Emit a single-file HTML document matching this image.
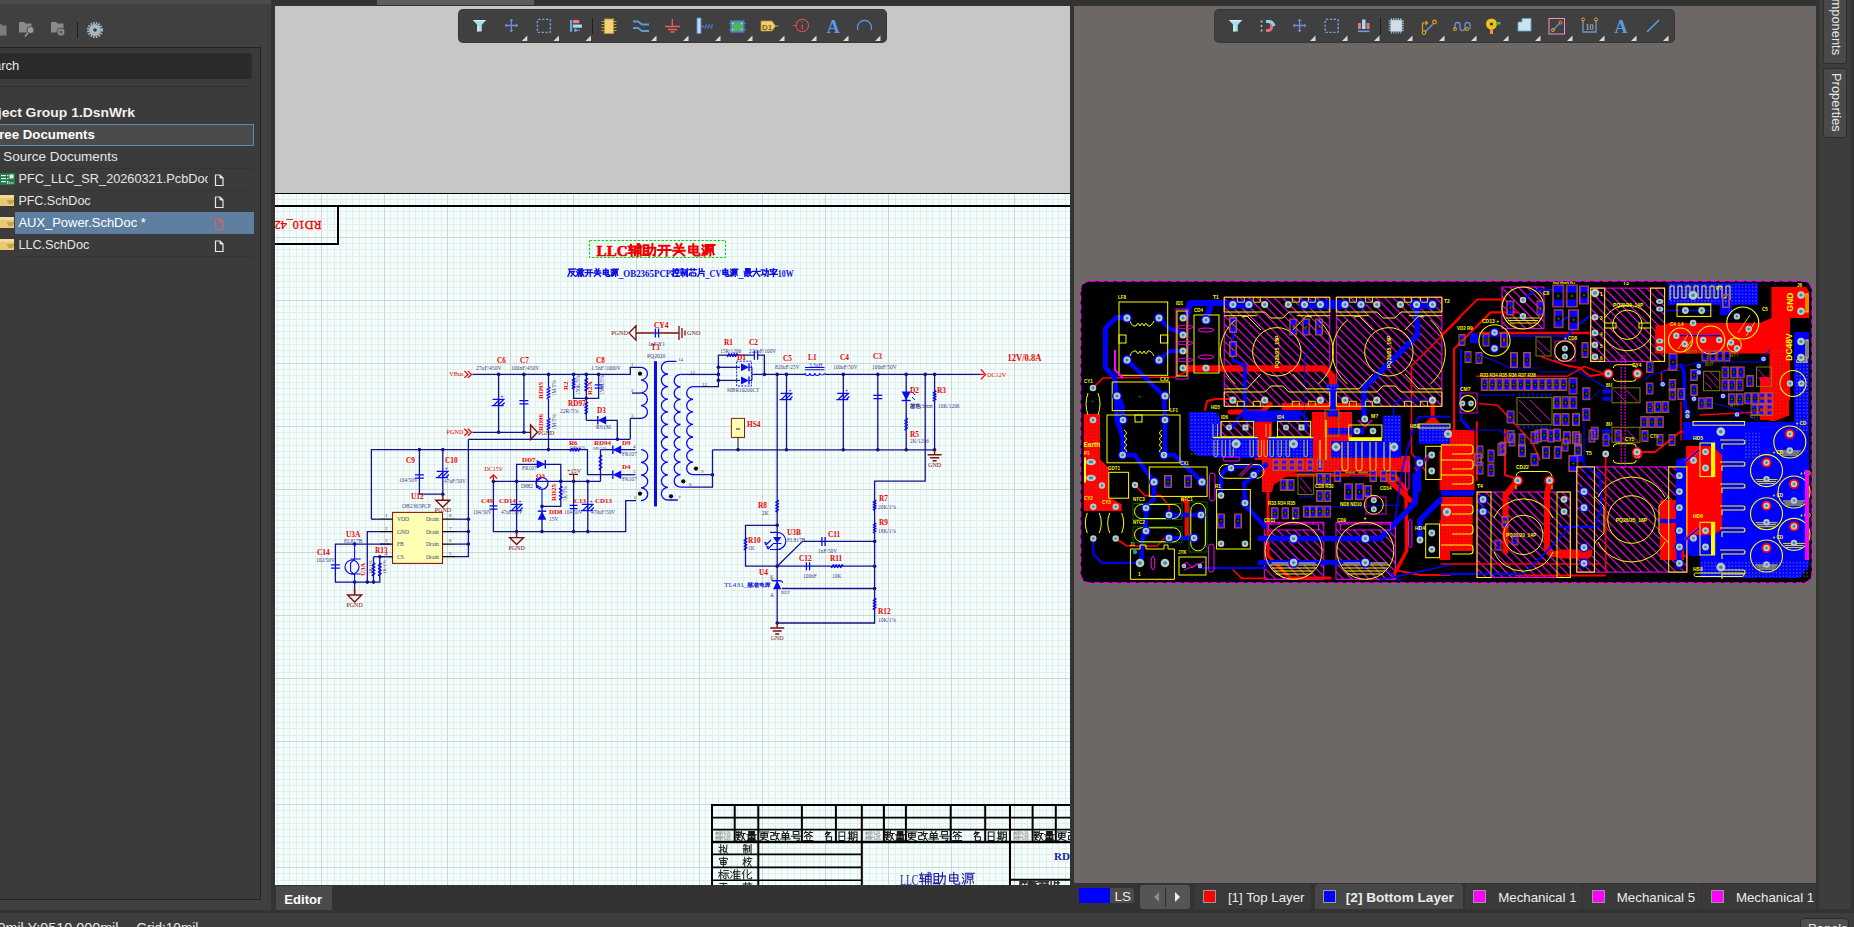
<!DOCTYPE html>
<html><head><meta charset="utf-8">
<style>
*{box-sizing:border-box}
html,body{margin:0;padding:0;width:1854px;height:927px;overflow:hidden;background:#333;font-family:"Liberation Sans",sans-serif;color:#e6e6e6}
.a{position:absolute}
.t{position:absolute;white-space:pre;line-height:1}
svg text{white-space:pre}
</style></head><body>
<div class="a" style="left:0;top:0;width:1854px;height:6px;background:#333"></div>
<div class="a" style="left:377px;top:0;width:157px;height:5px;background:#5d5d5d"></div>
<div class="a" style="left:275px;top:6px;width:795px;height:187px;background:#c7c7c7"></div>
<svg class="a" style="left:0;top:0" width="1854" height="927" viewBox="0 0 1854 927"><rect x="275" y="194" width="795" height="691" fill="#f0ffff"/><path d="M277 194h1v691h-1zM283 194h1v691h-1zM289 194h1v691h-1zM296 194h1v691h-1zM302 194h1v691h-1zM308 194h1v691h-1zM315 194h1v691h-1zM327 194h1v691h-1zM334 194h1v691h-1zM340 194h1v691h-1zM346 194h1v691h-1zM352 194h1v691h-1zM359 194h1v691h-1zM365 194h1v691h-1zM371 194h1v691h-1zM378 194h1v691h-1zM390 194h1v691h-1zM397 194h1v691h-1zM403 194h1v691h-1zM409 194h1v691h-1zM415 194h1v691h-1zM422 194h1v691h-1zM428 194h1v691h-1zM434 194h1v691h-1zM441 194h1v691h-1zM453 194h1v691h-1zM460 194h1v691h-1zM466 194h1v691h-1zM472 194h1v691h-1zM478 194h1v691h-1zM485 194h1v691h-1zM491 194h1v691h-1zM497 194h1v691h-1zM504 194h1v691h-1zM516 194h1v691h-1zM523 194h1v691h-1zM529 194h1v691h-1zM535 194h1v691h-1zM542 194h1v691h-1zM548 194h1v691h-1zM554 194h1v691h-1zM560 194h1v691h-1zM567 194h1v691h-1zM579 194h1v691h-1zM586 194h1v691h-1zM592 194h1v691h-1zM598 194h1v691h-1zM605 194h1v691h-1zM611 194h1v691h-1zM617 194h1v691h-1zM623 194h1v691h-1zM630 194h1v691h-1zM642 194h1v691h-1zM649 194h1v691h-1zM655 194h1v691h-1zM661 194h1v691h-1zM668 194h1v691h-1zM674 194h1v691h-1zM680 194h1v691h-1zM686 194h1v691h-1zM693 194h1v691h-1zM705 194h1v691h-1zM712 194h1v691h-1zM718 194h1v691h-1zM724 194h1v691h-1zM731 194h1v691h-1zM737 194h1v691h-1zM743 194h1v691h-1zM750 194h1v691h-1zM756 194h1v691h-1zM768 194h1v691h-1zM775 194h1v691h-1zM781 194h1v691h-1zM787 194h1v691h-1zM794 194h1v691h-1zM800 194h1v691h-1zM806 194h1v691h-1zM813 194h1v691h-1zM819 194h1v691h-1zM831 194h1v691h-1zM838 194h1v691h-1zM844 194h1v691h-1zM850 194h1v691h-1zM857 194h1v691h-1zM863 194h1v691h-1zM869 194h1v691h-1zM876 194h1v691h-1zM882 194h1v691h-1zM895 194h1v691h-1zM901 194h1v691h-1zM907 194h1v691h-1zM913 194h1v691h-1zM920 194h1v691h-1zM926 194h1v691h-1zM932 194h1v691h-1zM939 194h1v691h-1zM945 194h1v691h-1zM958 194h1v691h-1zM964 194h1v691h-1zM970 194h1v691h-1zM976 194h1v691h-1zM983 194h1v691h-1zM989 194h1v691h-1zM995 194h1v691h-1zM1002 194h1v691h-1zM1008 194h1v691h-1zM1021 194h1v691h-1zM1027 194h1v691h-1zM1033 194h1v691h-1zM1039 194h1v691h-1zM1046 194h1v691h-1zM1052 194h1v691h-1zM1058 194h1v691h-1zM1065 194h1v691h-1zM275 199h795v1h-795zM275 205h795v1h-795zM275 211h795v1h-795zM275 218h795v1h-795zM275 224h795v1h-795zM275 230h795v1h-795zM275 243h795v1h-795zM275 249h795v1h-795zM275 256h795v1h-795zM275 262h795v1h-795zM275 268h795v1h-795zM275 275h795v1h-795zM275 281h795v1h-795zM275 287h795v1h-795zM275 293h795v1h-795zM275 306h795v1h-795zM275 312h795v1h-795zM275 319h795v1h-795zM275 325h795v1h-795zM275 331h795v1h-795zM275 338h795v1h-795zM275 344h795v1h-795zM275 350h795v1h-795zM275 356h795v1h-795zM275 369h795v1h-795zM275 375h795v1h-795zM275 382h795v1h-795zM275 388h795v1h-795zM275 394h795v1h-795zM275 401h795v1h-795zM275 407h795v1h-795zM275 413h795v1h-795zM275 419h795v1h-795zM275 432h795v1h-795zM275 438h795v1h-795zM275 445h795v1h-795zM275 451h795v1h-795zM275 457h795v1h-795zM275 464h795v1h-795zM275 470h795v1h-795zM275 476h795v1h-795zM275 483h795v1h-795zM275 495h795v1h-795zM275 501h795v1h-795zM275 508h795v1h-795zM275 514h795v1h-795zM275 520h795v1h-795zM275 527h795v1h-795zM275 533h795v1h-795zM275 539h795v1h-795zM275 546h795v1h-795zM275 558h795v1h-795zM275 564h795v1h-795zM275 571h795v1h-795zM275 577h795v1h-795zM275 583h795v1h-795zM275 590h795v1h-795zM275 596h795v1h-795zM275 602h795v1h-795zM275 609h795v1h-795zM275 621h795v1h-795zM275 628h795v1h-795zM275 634h795v1h-795zM275 640h795v1h-795zM275 646h795v1h-795zM275 653h795v1h-795zM275 659h795v1h-795zM275 665h795v1h-795zM275 672h795v1h-795zM275 684h795v1h-795zM275 691h795v1h-795zM275 697h795v1h-795zM275 703h795v1h-795zM275 709h795v1h-795zM275 716h795v1h-795zM275 722h795v1h-795zM275 728h795v1h-795zM275 735h795v1h-795zM275 747h795v1h-795zM275 754h795v1h-795zM275 760h795v1h-795zM275 766h795v1h-795zM275 772h795v1h-795zM275 779h795v1h-795zM275 785h795v1h-795zM275 791h795v1h-795zM275 798h795v1h-795zM275 810h795v1h-795zM275 817h795v1h-795zM275 823h795v1h-795zM275 829h795v1h-795zM275 836h795v1h-795zM275 842h795v1h-795zM275 848h795v1h-795zM275 854h795v1h-795zM275 861h795v1h-795zM275 873h795v1h-795zM275 880h795v1h-795z" fill="#edeae4"/><path d="M321 194h1v691h-1zM384 194h1v691h-1zM447 194h1v691h-1zM510 194h1v691h-1zM573 194h1v691h-1zM636 194h1v691h-1zM699 194h1v691h-1zM762 194h1v691h-1zM825 194h1v691h-1zM888 194h1v691h-1zM951 194h1v691h-1zM1014 194h1v691h-1zM275 237h795v1h-795zM275 300h795v1h-795zM275 363h795v1h-795zM275 426h795v1h-795zM275 489h795v1h-795zM275 552h795v1h-795zM275 615h795v1h-795zM275 678h795v1h-795zM275 741h795v1h-795zM275 804h795v1h-795zM275 867h795v1h-795z" fill="#d6d2ce"/></svg><div class="a" style="left:275px;top:193px;width:795px;height:1.4px;background:#000"></div>
<div class="a" style="left:275px;top:205px;width:795px;height:2px;background:#000"></div>
<svg class="a" style="left:0;top:0" width="1854" height="927" viewBox="0 0 1854 927"><path d="M275 244 H338 V206" fill="none" stroke="#000" stroke-width="2"/><text x="298.2" y="223.5" font-family="Liberation Serif" font-size="12" fill="#f00000" stroke="#f00000" stroke-width="0.35" text-anchor="middle" transform="rotate(180 298.2 223.5)" dominant-baseline="middle">RD10_42</text><rect x="589.5" y="240.5" width="136" height="17" fill="none" stroke="#00e000" stroke-width="1" stroke-dasharray="2.5 1.5"/><text x="596.6" y="255.6" font-family="Liberation Serif" font-size="15.5" font-weight="bold" fill="#f00000" stroke="#f00000" stroke-width="0.7" textLength="31" lengthAdjust="spacingAndGlyphs">LLC</text><path d="M628.64 246.44 L633.30 246.44M630.97 244.61 L629.42 250.10 L633.30 250.10M631.62 247.66 L631.62 255.96M628.38 253.15 L633.56 252.54M634.20 246.44 L641.32 246.44M634.85 247.90 L640.67 247.90 L640.67 255.59M634.85 247.90 L634.85 255.59M634.85 250.71 L640.67 250.71M634.85 253.15 L640.67 253.15M637.70 244.00 L637.70 255.96M639.38 244.24 L640.02 245.22" fill="none" stroke="#f00000" stroke-width="2.0" stroke-linecap="square"/><path d="M643.73 245.22 L648.26 245.22 L648.26 254.37 L643.73 254.37 L643.73 245.22M643.73 248.27 L648.26 248.27M643.73 251.32 L648.26 251.32M643.08 254.98 L648.90 254.74M649.55 247.66 L655.37 247.66 L654.72 255.59 L653.43 254.98M652.40 244.00 L652.14 250.10 L649.29 255.59" fill="none" stroke="#f00000" stroke-width="2.0" stroke-linecap="square"/><path d="M659.08 245.83 L669.42 245.83M657.78 250.10 L670.72 250.10M662.31 245.83 L661.92 252.54 L659.08 255.59M666.58 245.83 L666.58 255.83" fill="none" stroke="#f00000" stroke-width="2.0" stroke-linecap="square"/><path d="M676.36 244.00 L677.66 245.83M681.54 244.00 L680.24 245.83M674.42 247.66 L683.48 247.66M673.13 250.71 L684.77 250.71M678.95 247.66 L678.95 250.71 L673.78 255.59M678.95 250.71 L684.12 255.59" fill="none" stroke="#f00000" stroke-width="2.0" stroke-linecap="square"/><path d="M689.12 246.44 L697.53 246.44 L697.53 252.54 L689.12 252.54 L689.12 246.44M689.12 249.49 L697.53 249.49M693.39 244.00 L693.39 254.37 L694.94 255.59 L699.47 255.59 L699.47 253.76" fill="none" stroke="#f00000" stroke-width="2.0" stroke-linecap="square"/><path d="M702.53 245.22 L703.43 246.44M702.27 248.88 L703.43 250.10M702.27 254.98 L703.82 251.93M705.50 244.98 L714.56 244.98M705.76 244.98 L705.76 251.32 L704.47 255.59M707.70 246.44 L712.88 246.44 L712.88 250.71 L707.70 250.71 L707.70 246.44M707.70 248.64 L712.88 248.64M710.29 250.71 L710.29 255.59M707.70 252.54 L706.80 254.37M712.88 252.54 L713.78 254.37" fill="none" stroke="#f00000" stroke-width="2.0" stroke-linecap="square"/><path d="M568.77 269.24 L575.16 269.00M569.52 269.24 L569.52 272.60 L568.01 276.36M569.89 271.40 L574.41 271.40 L571.02 276.36M571.02 272.20 L575.39 276.36" fill="none" stroke="#1010e8" stroke-width="1.35" stroke-linecap="square"/><path d="M576.94 269.40 L577.47 270.20M576.79 271.80 L577.47 272.60M576.79 275.80 L577.69 273.80M578.82 269.00 L580.70 269.00 L580.70 271.40 L578.82 271.40 L578.82 269.00M578.82 270.20 L580.70 270.20M578.44 272.60 L581.08 272.60M579.20 272.60 L578.44 276.36M579.20 273.80 L580.70 273.80 L580.33 276.36M582.21 268.60 L581.45 271.00M581.68 270.20 L583.94 270.20M583.33 270.20 L581.45 276.36M581.83 272.60 L583.94 276.36" fill="none" stroke="#1010e8" stroke-width="1.35" stroke-linecap="square"/><path d="M585.87 269.80 L591.88 269.80M585.11 272.60 L592.64 272.60M587.75 269.80 L587.52 274.20 L585.87 276.20M590.23 269.80 L590.23 276.36" fill="none" stroke="#1010e8" stroke-width="1.35" stroke-linecap="square"/><path d="M595.92 268.60 L596.67 269.80M598.93 268.60 L598.18 269.80M594.79 271.00 L600.06 271.00M594.04 273.00 L600.81 273.00M597.42 271.00 L597.42 273.00 L594.42 276.20M597.42 273.00 L600.43 276.20" fill="none" stroke="#1010e8" stroke-width="1.35" stroke-linecap="square"/><path d="M603.34 270.20 L608.23 270.20 L608.23 274.20 L603.34 274.20 L603.34 270.20M603.34 272.20 L608.23 272.20M605.82 268.60 L605.82 275.40 L606.73 276.20 L609.36 276.20 L609.36 275.00" fill="none" stroke="#1010e8" stroke-width="1.35" stroke-linecap="square"/><path d="M611.14 269.40 L611.67 270.20M610.99 271.80 L611.67 272.60M610.99 275.80 L611.89 273.80M612.87 269.24 L618.14 269.24M613.02 269.24 L613.02 273.40 L612.27 276.20M614.15 270.20 L617.16 270.20 L617.16 273.00 L614.15 273.00 L614.15 270.20M614.15 271.64 L617.16 271.64M615.65 273.00 L615.65 276.20M614.15 274.20 L613.62 275.40M617.16 274.20 L617.69 275.40" fill="none" stroke="#1010e8" stroke-width="1.35" stroke-linecap="square"/><text x="618.80" y="276.60" font-family="Liberation Serif" font-size="9.6" font-weight="bold" fill="#1010e8" textLength="52.50" lengthAdjust="spacingAndGlyphs">_OB2365PCP</text><path d="M671.81 271.00 L674.45 271.00M673.32 268.60 L673.32 276.20 L672.57 275.80M671.81 274.20 L674.67 273.00M676.70 268.60 L676.70 269.24M674.97 270.36 L674.97 269.40 L678.96 269.40 L678.96 270.36M676.18 270.60 L675.42 271.96M677.68 270.60 L678.58 271.96M675.57 273.00 L678.58 273.00M677.08 273.00 L677.08 275.96M674.97 276.20 L679.34 276.20" fill="none" stroke="#1010e8" stroke-width="1.35" stroke-linecap="square"/><path d="M681.49 268.60 L680.96 269.80M680.74 269.80 L684.88 269.80M680.36 271.80 L685.25 271.80M682.77 268.60 L682.77 276.60M681.12 273.00 L681.12 275.40M681.12 273.00 L684.50 273.00 L684.50 275.40M686.01 269.80 L686.01 274.20M687.29 268.60 L687.29 276.36 L686.38 275.96" fill="none" stroke="#1010e8" stroke-width="1.35" stroke-linecap="square"/><path d="M688.91 269.56 L696.44 269.56M691.17 268.60 L691.17 270.60M694.18 268.60 L694.18 270.60M689.67 273.40 L689.29 275.40M691.17 272.60 L691.17 275.80 L695.68 275.80 L695.68 274.60M692.67 272.20 L693.43 273.40M694.93 272.60 L696.06 274.20" fill="none" stroke="#1010e8" stroke-width="1.35" stroke-linecap="square"/><path d="M699.34 268.60 L699.34 273.40 L697.84 276.36M699.34 271.40 L704.23 271.40M701.98 268.60 L701.98 271.40M699.34 273.40 L703.86 273.40 L703.86 276.36" fill="none" stroke="#1010e8" stroke-width="1.35" stroke-linecap="square"/><text x="705.50" y="276.60" font-family="Liberation Serif" font-size="9.6" font-weight="bold" fill="#1010e8" textLength="15.75" lengthAdjust="spacingAndGlyphs">_CV</text><path d="M722.89 270.20 L727.78 270.20 L727.78 274.20 L722.89 274.20 L722.89 270.20M722.89 272.20 L727.78 272.20M725.37 268.60 L725.37 275.40 L726.28 276.20 L728.91 276.20 L728.91 275.00" fill="none" stroke="#1010e8" stroke-width="1.35" stroke-linecap="square"/><path d="M730.69 269.40 L731.22 270.20M730.54 271.80 L731.22 272.60M730.54 275.80 L731.44 273.80M732.42 269.24 L737.69 269.24M732.57 269.24 L732.57 273.40 L731.82 276.20M733.70 270.20 L736.71 270.20 L736.71 273.00 L733.70 273.00 L733.70 270.20M733.70 271.64 L736.71 271.64M735.20 273.00 L735.20 276.20M733.70 274.20 L733.17 275.40M736.71 274.20 L737.24 275.40" fill="none" stroke="#1010e8" stroke-width="1.35" stroke-linecap="square"/><text x="738.35" y="276.60" font-family="Liberation Serif" font-size="9.6" font-weight="bold" fill="#1010e8" textLength="5.25" lengthAdjust="spacingAndGlyphs">_</text><path d="M745.62 268.60 L750.13 268.60 L750.13 271.00 L745.62 271.00 L745.62 268.60M745.62 269.80 L750.13 269.80M744.11 271.80 L751.64 271.80M744.87 272.20 L744.87 276.20M744.87 273.40 L747.12 273.40M744.87 275.00 L747.12 275.00M747.12 272.20 L747.12 276.36M748.25 272.60 L750.88 272.60 L748.25 276.36M748.63 273.40 L751.49 276.36" fill="none" stroke="#1010e8" stroke-width="1.35" stroke-linecap="square"/><path d="M752.66 271.40 L760.19 271.40M756.42 268.60 L756.42 271.80 L753.04 276.36M756.42 271.80 L759.81 276.36" fill="none" stroke="#1010e8" stroke-width="1.35" stroke-linecap="square"/><path d="M761.21 269.80 L764.22 269.80M762.72 269.80 L762.72 274.60M761.21 275.00 L764.60 274.20M764.97 271.00 L768.36 271.00 L767.98 276.20 L767.23 275.80M766.63 268.60 L766.48 272.60 L764.82 276.20" fill="none" stroke="#1010e8" stroke-width="1.35" stroke-linecap="square"/><path d="M773.52 268.60 L773.52 269.40M770.14 269.56 L776.91 269.56M773.52 270.20 L772.40 271.80 L774.28 272.20 L772.77 273.40 L775.03 273.40M770.52 271.00 L771.27 271.80M776.53 271.00 L775.78 271.80M769.76 274.36 L777.29 274.36M773.52 273.56 L773.52 276.60" fill="none" stroke="#1010e8" stroke-width="1.35" stroke-linecap="square"/><text x="777.80" y="276.60" font-family="Liberation Serif" font-size="9.6" font-weight="bold" fill="#1010e8" textLength="15.75" lengthAdjust="spacingAndGlyphs">10W</text><path d="M472.4 374.4 L630.3 374.4 L630.3 367.3 L641 367.3" fill="none" stroke="#12128a" stroke-width="1.3"/><path d="M464.4 370.9 l3.5 3.5 l-3.5 3.5 M467.9 370.9 l3.5 3.5 l-3.5 3.5" fill="none" stroke="#f00000" stroke-width="1.3"/><text x="463.4" y="376.4" font-family="Liberation Serif" font-size="6.2" fill="#f00000" text-anchor="end">VBus</text><circle cx="498.6" cy="374.4" r="1.8" fill="#12128a"/><circle cx="523.9" cy="374.4" r="1.8" fill="#12128a"/><circle cx="548.5" cy="374.4" r="1.8" fill="#12128a"/><circle cx="573.6" cy="374.4" r="1.8" fill="#12128a"/><circle cx="586.3" cy="374.4" r="1.8" fill="#12128a"/><circle cx="598.6" cy="374.4" r="1.8" fill="#12128a"/><path d="M472.4 432.3 L530.6 432.3" fill="none" stroke="#12128a" stroke-width="1.3"/><path d="M464.4 428.8 l3.5 3.5 l-3.5 3.5 M467.9 428.8 l3.5 3.5 l-3.5 3.5" fill="none" stroke="#f00000" stroke-width="1.3"/><text x="463.4" y="434.3" font-family="Liberation Serif" font-size="6.2" fill="#f00000" text-anchor="end">PGND</text><circle cx="498.6" cy="432.3" r="1.8" fill="#12128a"/><circle cx="523.9" cy="432.3" r="1.8" fill="#12128a"/><path d="M530.6 432.3 M530.6 425 L537.5 432.3 L530.6 439.5 Z" fill="none" stroke="#7a1010" stroke-width="1.4"/><text x="538" y="434.5" font-family="Liberation Serif" font-size="6" fill="#7a1010">PGND</text><path d="M498.6 374.4 L498.6 432.3" fill="none" stroke="#12128a" stroke-width="1.3"/><path d="M492.6 399.3 h12 M491.6 405.7 h12 M493.6 405.5 l6 -6 M497.6 405.5 l6 -6 M501.6 405.5 l3 -3" stroke="#0a0af0" stroke-width="1.2" fill="none"/><text x="500.6" y="397.5" font-family="Liberation Sans" font-size="5" fill="#0a0af0">+</text><path d="M523.9 374.4 L523.9 432.3" fill="none" stroke="#12128a" stroke-width="1.3"/><path d="M519.4 400.59999999999997 h9 M519.4 403.8 h9" stroke="#0a0af0" stroke-width="1.3"/><text x="497" y="362.5" font-family="Liberation Serif" font-size="7.2" font-weight="bold" fill="#f00000" text-anchor="start">C6</text><text x="476" y="370" font-family="Liberation Serif" font-size="5.6" font-weight="normal" fill="#40408a" text-anchor="start">27uF/450V</text><text x="520" y="362.5" font-family="Liberation Serif" font-size="7.2" font-weight="bold" fill="#f00000" text-anchor="start">C7</text><text x="511" y="370" font-family="Liberation Serif" font-size="5.6" font-weight="normal" fill="#40408a" text-anchor="start">100nF/450V</text><path d="M548.5 374.4 L548.5 387" fill="none" stroke="#12128a" stroke-width="1.3"/><path d="M548.5 387 q3 0.75 0 1.50 q-3 0.75 0 1.50 q3 0.75 0 1.50 q-3 0.75 0 1.50 q3 0.75 0 1.50 q-3 0.75 0 1.50 q3 0.75 0 1.50 q-3 0.75 0 1.50" fill="none" stroke="#0a0af0" stroke-width="1.2"/><path d="M548.5 399 L548.5 418.4" fill="none" stroke="#12128a" stroke-width="1.3"/><path d="M548.5 418.4 q3 0.73 0 1.45 q-3 0.73 0 1.45 q3 0.73 0 1.45 q-3 0.73 0 1.45 q3 0.73 0 1.45 q-3 0.73 0 1.45 q3 0.73 0 1.45 q-3 0.73 0 1.45" fill="none" stroke="#0a0af0" stroke-width="1.2"/><path d="M548.5 430 L548.5 449.7" fill="none" stroke="#12128a" stroke-width="1.3"/><text x="543" y="399" font-family="Liberation Serif" font-size="7" font-weight="bold" fill="#f00000" text-anchor="start" transform="rotate(-90 543 399)">RD95</text><text x="556" y="396" font-family="Liberation Serif" font-size="5.2" font-weight="normal" fill="#40408a" text-anchor="start" transform="rotate(-90 556 396)">1M/5%</text><text x="543" y="431" font-family="Liberation Serif" font-size="7" font-weight="bold" fill="#f00000" text-anchor="start" transform="rotate(-90 543 431)">RD96</text><text x="556" y="430" font-family="Liberation Serif" font-size="5.2" font-weight="normal" fill="#40408a" text-anchor="start" transform="rotate(-90 556 430)">1M/5%</text><path d="M573.6 374.4 L573.6 398.3 L598.6 398.3 L598.6 374.4" fill="none" stroke="#12128a" stroke-width="1.3"/><path d="M573.6 378 q3 0.69 0 1.38 q-3 0.69 0 1.38 q3 0.69 0 1.38 q-3 0.69 0 1.38 q3 0.69 0 1.38 q-3 0.69 0 1.38 q3 0.69 0 1.38 q-3 0.69 0 1.38" fill="none" stroke="#0a0af0" stroke-width="1.2"/><path d="M586.3 374.4 L586.3 420.3" fill="none" stroke="#12128a" stroke-width="1.3"/><path d="M586.3 378 q3 0.81 0 1.62 q-3 0.81 0 1.62 q3 0.81 0 1.62 q-3 0.81 0 1.62 q3 0.81 0 1.62 q-3 0.81 0 1.62 q3 0.81 0 1.62 q-3 0.81 0 1.62" fill="none" stroke="#0a0af0" stroke-width="1.2"/><path d="M586.3 402 q3 0.75 0 1.50 q-3 0.75 0 1.50 q3 0.75 0 1.50 q-3 0.75 0 1.50 q3 0.75 0 1.50 q-3 0.75 0 1.50 q3 0.75 0 1.50 q-3 0.75 0 1.50" fill="none" stroke="#0a0af0" stroke-width="1.2"/><path d="M594.6 384.9 h8 M594.6 388.1 h8" stroke="#0a0af0" stroke-width="1.3"/><circle cx="586.3" cy="398.3" r="1.8" fill="#12128a"/><text x="568" y="390" font-family="Liberation Serif" font-size="7" font-weight="bold" fill="#f00000" text-anchor="start" transform="rotate(-90 568 390)">R2</text><text x="580" y="395" font-family="Liberation Serif" font-size="5.2" font-weight="normal" fill="#40408a" text-anchor="start" transform="rotate(-90 580 395)">150K/5%</text><text x="592" y="395" font-family="Liberation Serif" font-size="7" font-weight="bold" fill="#f00000" text-anchor="start" transform="rotate(-90 592 395)">R2A</text><text x="604" y="395" font-family="Liberation Serif" font-size="5.2" font-weight="normal" fill="#40408a" text-anchor="start" transform="rotate(-90 604 395)">150K/5%</text><text x="596" y="363" font-family="Liberation Serif" font-size="7.2" font-weight="bold" fill="#f00000" text-anchor="start">C8</text><text x="591" y="370" font-family="Liberation Serif" font-size="5.6" font-weight="normal" fill="#40408a" text-anchor="start">1.5nF/1000V</text><text x="568" y="406" font-family="Liberation Serif" font-size="7.2" font-weight="bold" fill="#f00000" text-anchor="start">RD97</text><text x="560" y="412.5" font-family="Liberation Serif" font-size="5.6" font-weight="normal" fill="#40408a" text-anchor="start">22R/5%</text><path d="M586.3 420.3 L617.3 420.3 L617.3 439.1" fill="none" stroke="#12128a" stroke-width="1.3"/><path d="M606.2 416.1 L597.8 420.3 L606.2 424.5 Z" fill="#0a0af0"/><path d="M597.8 416.1 v8.4" stroke="#0a0af0" stroke-width="1.4"/><text x="597" y="413" font-family="Liberation Serif" font-size="7.2" font-weight="bold" fill="#f00000" text-anchor="start">D3</text><text x="596" y="428.5" font-family="Liberation Serif" font-size="5.6" font-weight="normal" fill="#40408a" text-anchor="start">RS1M</text><path d="M630.3 418.4 L641 418.4" fill="none" stroke="#12128a" stroke-width="1.3"/><path d="M630.3 418.4 L630.3 439.1" fill="none" stroke="#12128a" stroke-width="1.3"/><path d="M632 393.1 L641 393.1" fill="none" stroke="#12128a" stroke-width="1.3"/><circle cx="640" cy="373.7" r="2.1" fill="#000"/><path d="M468.4 439.3 L630.3 439.3" fill="none" stroke="#12128a" stroke-width="1.3"/><circle cx="617.5" cy="439.3" r="1.8" fill="#12128a"/><path d="M371.4 519.2 L371.4 449.6 L587.5 449.6 L587.5 474.7 L613 474.7" fill="none" stroke="#12128a" stroke-width="1.3"/><circle cx="419.4" cy="449.6" r="1.8" fill="#12128a"/><circle cx="442.8" cy="449.6" r="1.8" fill="#12128a"/><circle cx="548.4" cy="449.6" r="1.8" fill="#12128a"/><path d="M570 449.6 q0.66 3 1.31 0 q0.66 -3 1.31 0 q0.66 3 1.31 0 q0.66 -3 1.31 0 q0.66 3 1.31 0 q0.66 -3 1.31 0 q0.66 3 1.31 0 q0.66 -3 1.31 0" fill="none" stroke="#0a0af0" stroke-width="1.2"/><text x="569" y="444.5" font-family="Liberation Serif" font-size="7" font-weight="bold" fill="#f00000" text-anchor="start">R6</text><text x="569" y="449" font-family="Liberation Serif" font-size="5" font-weight="normal" fill="#40408a" text-anchor="start">15R/5%</text><path d="M600.5 449.7 L635.4 449.7" fill="none" stroke="#12128a" stroke-width="1.3"/><path d="M600.5 449.7 L600.5 481.4" fill="none" stroke="#12128a" stroke-width="1.3"/><path d="M600.5 455 q3 0.94 0 1.88 q-3 0.94 0 1.88 q3 0.94 0 1.88 q-3 0.94 0 1.88 q3 0.94 0 1.88 q-3 0.94 0 1.88 q3 0.94 0 1.88 q-3 0.94 0 1.88" fill="none" stroke="#0a0af0" stroke-width="1.2"/><path d="M621.2 445.5 L612.8 449.7 L621.2 453.9 Z" fill="#0a0af0"/><path d="M612.8 445.5 v8.4" stroke="#0a0af0" stroke-width="1.4"/><path d="M621.2 470.5 L612.8 474.7 L621.2 478.9 Z" fill="#0a0af0"/><path d="M612.8 470.5 v8.4" stroke="#0a0af0" stroke-width="1.4"/><path d="M621 474.7 L635.4 474.7" fill="none" stroke="#12128a" stroke-width="1.3"/><text x="594" y="444.5" font-family="Liberation Serif" font-size="7" font-weight="bold" fill="#f00000" text-anchor="start">RD94</text><text x="593" y="450" font-family="Liberation Serif" font-size="5" font-weight="normal" fill="#40408a" text-anchor="start">0R/5%</text><text x="622" y="444.5" font-family="Liberation Serif" font-size="7" font-weight="bold" fill="#f00000" text-anchor="start">D9</text><text x="622" y="456" font-family="Liberation Serif" font-size="5.4" font-weight="normal" fill="#40408a" text-anchor="start">FR107</text><text x="622" y="469" font-family="Liberation Serif" font-size="7" font-weight="bold" fill="#f00000" text-anchor="start">D4</text><text x="622" y="481" font-family="Liberation Serif" font-size="5.4" font-weight="normal" fill="#40408a" text-anchor="start">FR107</text><path d="M493.4 481.4 L600.5 481.4" fill="none" stroke="#12128a" stroke-width="1.3"/><circle cx="493.4" cy="481.4" r="1.8" fill="#12128a"/><circle cx="516.6" cy="481.4" r="1.8" fill="#12128a"/><circle cx="560.8" cy="481.4" r="1.8" fill="#12128a"/><circle cx="573.6" cy="481.4" r="1.8" fill="#12128a"/><circle cx="587.8" cy="481.4" r="1.8" fill="#12128a"/><path d="M493.4 481.4 v-6 M489.8 478.5 l3.6 -3.6 l3.6 3.6" fill="none" stroke="#f00000" stroke-width="1.2"/><text x="484.5" y="471" font-family="Liberation Serif" font-size="6" font-weight="normal" fill="#f00000" text-anchor="start">DC15V</text><path d="M573.6 481.4 v-7 M569 474.4 h9" fill="none" stroke="#7a1010" stroke-width="1.3"/><text x="567" y="472.5" font-family="Liberation Serif" font-size="6.2" font-weight="normal" fill="#7a1010" text-anchor="start">+15V</text><path d="M516.6 481.4 L516.6 464.3 L560.8 464.3 L560.8 506.4 L542 506.4" fill="none" stroke="#12128a" stroke-width="1.3"/><path d="M536.7 460.0 L545.3 464.3 L536.7 468.6 Z" fill="#0a0af0"/><path d="M545.3 460.0 v8.6" stroke="#0a0af0" stroke-width="1.4"/><text x="522" y="462" font-family="Liberation Serif" font-size="7" font-weight="bold" fill="#f00000" text-anchor="start">DD7</text><text x="522" y="470" font-family="Liberation Serif" font-size="5.4" font-weight="normal" fill="#40408a" text-anchor="start">FR107</text><circle cx="542" cy="483.3" r="6" fill="none" stroke="#0a0af0" stroke-width="1.2"/><path d="M536.5 478 v10 M536.5 481 l5 -3 M536.5 485 l5 3 M542 489 v17" fill="none" stroke="#0a0af0" stroke-width="1.1"/><text x="536" y="477.5" font-family="Liberation Serif" font-size="7" font-weight="bold" fill="#f00000" text-anchor="start">Q3</text><text x="521" y="488" font-family="Liberation Serif" font-size="5.4" font-weight="normal" fill="#40408a" text-anchor="start">D882</text><path d="M560.8 486 q3 0.88 0 1.75 q-3 0.88 0 1.75 q3 0.88 0 1.75 q-3 0.88 0 1.75 q3 0.88 0 1.75 q-3 0.88 0 1.75 q3 0.88 0 1.75 q-3 0.88 0 1.75" fill="none" stroke="#0a0af0" stroke-width="1.2"/><text x="556" y="501" font-family="Liberation Serif" font-size="7" font-weight="bold" fill="#f00000" text-anchor="start" transform="rotate(-90 556 501)">RD25</text><text x="567" y="501" font-family="Liberation Serif" font-size="5.2" font-weight="normal" fill="#40408a" text-anchor="start" transform="rotate(-90 567 501)">1K/5%</text><path d="M542 506.4 L542 531.6" fill="none" stroke="#12128a" stroke-width="1.3"/><path d="M537.7 519.8 L542 511.2 L546.3 519.8 Z" fill="#0a0af0"/><path d="M537.7 511.2 h8.6" stroke="#0a0af0" stroke-width="1.4"/><circle cx="542" cy="506.4" r="1.8" fill="#12128a"/><text x="549" y="514" font-family="Liberation Serif" font-size="7" font-weight="bold" fill="#f00000" text-anchor="start">DD8</text><text x="549" y="521" font-family="Liberation Serif" font-size="5.4" font-weight="normal" fill="#40408a" text-anchor="start">15V</text><path d="M493.4 481.4 L493.4 531.6 L625.7 531.6 L625.7 500.6 L636 500.6" fill="none" stroke="#12128a" stroke-width="1.3"/><path d="M516.6 481.4 L516.6 531.6" fill="none" stroke="#12128a" stroke-width="1.3"/><path d="M573.6 481.4 L573.6 531.6" fill="none" stroke="#12128a" stroke-width="1.3"/><path d="M587.8 481.4 L587.8 531.6" fill="none" stroke="#12128a" stroke-width="1.3"/><circle cx="516.6" cy="531.6" r="1.8" fill="#12128a"/><circle cx="542" cy="531.6" r="1.8" fill="#12128a"/><circle cx="573.6" cy="531.6" r="1.8" fill="#12128a"/><circle cx="587.8" cy="531.6" r="1.8" fill="#12128a"/><path d="M489.4 505.9 h8 M489.4 509.1 h8" stroke="#0a0af0" stroke-width="1.3"/><path d="M510.6 504.3 h12 M509.6 510.7 h12 M511.6 510.5 l6 -6 M515.6 510.5 l6 -6 M519.6 510.5 l3 -3" stroke="#0a0af0" stroke-width="1.2" fill="none"/><text x="518.6" y="502.5" font-family="Liberation Sans" font-size="5" fill="#0a0af0">+</text><path d="M569.6 505.4 h8 M569.6 508.6 h8" stroke="#0a0af0" stroke-width="1.3"/><path d="M581.8 504.3 h12 M580.8 510.7 h12 M582.8 510.5 l6 -6 M586.8 510.5 l6 -6 M590.8 510.5 l3 -3" stroke="#0a0af0" stroke-width="1.2" fill="none"/><text x="589.8" y="502.5" font-family="Liberation Sans" font-size="5" fill="#0a0af0">+</text><text x="481" y="503" font-family="Liberation Serif" font-size="7" font-weight="bold" fill="#f00000" text-anchor="start">C49</text><text x="473" y="514" font-family="Liberation Serif" font-size="5.3" font-weight="normal" fill="#40408a" text-anchor="start">104/50V</text><text x="499" y="503" font-family="Liberation Serif" font-size="7" font-weight="bold" fill="#f00000" text-anchor="start">CD14</text><text x="501" y="514" font-family="Liberation Serif" font-size="5.3" font-weight="normal" fill="#40408a" text-anchor="start">47uF/50V</text><text x="574" y="503" font-family="Liberation Serif" font-size="7" font-weight="bold" fill="#f00000" text-anchor="start">C13</text><text x="564" y="514" font-family="Liberation Serif" font-size="5.3" font-weight="normal" fill="#40408a" text-anchor="start">104/50V</text><text x="595" y="503" font-family="Liberation Serif" font-size="7" font-weight="bold" fill="#f00000" text-anchor="start">CD13</text><text x="591" y="514" font-family="Liberation Serif" font-size="5.3" font-weight="normal" fill="#40408a" text-anchor="start">470uF/50V</text><path d="M516.6 531.6 v6 M509.6 537.6 h14 L516.6 544.6 Z" fill="none" stroke="#7a1010" stroke-width="1.4"/><text x="516.6" y="549.6" font-family="Liberation Serif" font-size="6" fill="#7a1010" text-anchor="middle">PGND</text><path d="M468.4 439.3 L468.4 556.7 L455 556.7" fill="none" stroke="#12128a" stroke-width="1.3"/><path d="M455 519.2 L468.4 519.2" fill="none" stroke="#12128a" stroke-width="1.3"/><circle cx="468.4" cy="519.2" r="1.8" fill="#12128a"/><path d="M455 531.6 L468.4 531.6" fill="none" stroke="#12128a" stroke-width="1.3"/><circle cx="468.4" cy="531.6" r="1.8" fill="#12128a"/><path d="M455 544.1 L468.4 544.1" fill="none" stroke="#12128a" stroke-width="1.3"/><circle cx="468.4" cy="544.1" r="1.8" fill="#12128a"/><path d="M419.4 449.6 L419.4 494.2 L442.8 494.2" fill="none" stroke="#12128a" stroke-width="1.3"/><path d="M442.8 449.6 L442.8 494.2" fill="none" stroke="#12128a" stroke-width="1.3"/><path d="M414.9 474.9 h9 M414.9 478.1 h9" stroke="#0a0af0" stroke-width="1.3"/><path d="M436.8 471.3 h12 M435.8 477.7 h12 M437.8 477.5 l6 -6 M441.8 477.5 l6 -6 M445.8 477.5 l3 -3" stroke="#0a0af0" stroke-width="1.2" fill="none"/><text x="444.8" y="469.5" font-family="Liberation Sans" font-size="5" fill="#0a0af0">+</text><circle cx="442.8" cy="494.2" r="1.8" fill="#12128a"/><path d="M442.8 494.2 v6 M435.8 500.2 h14 L442.8 507.2 Z" fill="none" stroke="#7a1010" stroke-width="1.4"/><text x="443" y="511.5" font-family="Liberation Serif" font-size="6" fill="#7a1010" text-anchor="middle">PGND</text><text x="406" y="463" font-family="Liberation Serif" font-size="7.4" font-weight="bold" fill="#f00000" text-anchor="start">C9</text><text x="399" y="482" font-family="Liberation Serif" font-size="5.4" font-weight="normal" fill="#40408a" text-anchor="start">104/50V</text><text x="445" y="463" font-family="Liberation Serif" font-size="7.4" font-weight="bold" fill="#f00000" text-anchor="start">C10</text><text x="444" y="483" font-family="Liberation Serif" font-size="5.4" font-weight="normal" fill="#40408a" text-anchor="start">47uF/50V</text><rect x="392.5" y="512.4" width="50" height="51" fill="#ffffb4" stroke="#8a1a1a" stroke-width="1.1"/><path d="M380 519.2 h12.5 M442.5 519.2 h12.5" stroke="#000" stroke-width="1.2"/><path d="M380 531.6 h12.5 M442.5 531.6 h12.5" stroke="#000" stroke-width="1.2"/><path d="M380 544.1 h12.5 M442.5 544.1 h12.5" stroke="#000" stroke-width="1.2"/><path d="M380 556.7 h12.5 M442.5 556.7 h12.5" stroke="#000" stroke-width="1.2"/><text x="397" y="521.2" font-family="Liberation Serif" font-size="5.6" fill="#3a3a7a">VDD</text><text x="426" y="521.2" font-family="Liberation Serif" font-size="5.6" fill="#3a3a7a">Drain</text><text x="385" y="517.2" font-family="Liberation Serif" font-size="5" fill="#333">1</text><text x="449" y="517.2" font-family="Liberation Serif" font-size="5" fill="#333">8</text><text x="397" y="533.6" font-family="Liberation Serif" font-size="5.6" fill="#3a3a7a">GND</text><text x="426" y="533.6" font-family="Liberation Serif" font-size="5.6" fill="#3a3a7a">Drain</text><text x="385" y="529.6" font-family="Liberation Serif" font-size="5" fill="#333">2</text><text x="449" y="529.6" font-family="Liberation Serif" font-size="5" fill="#333">7</text><text x="397" y="546.1" font-family="Liberation Serif" font-size="5.6" fill="#3a3a7a">FB</text><text x="426" y="546.1" font-family="Liberation Serif" font-size="5.6" fill="#3a3a7a">Drain</text><text x="385" y="542.1" font-family="Liberation Serif" font-size="5" fill="#333">3</text><text x="449" y="542.1" font-family="Liberation Serif" font-size="5" fill="#333">6</text><text x="397" y="558.7" font-family="Liberation Serif" font-size="5.6" fill="#3a3a7a">CS</text><text x="426" y="558.7" font-family="Liberation Serif" font-size="5.6" fill="#3a3a7a">Drain</text><text x="385" y="554.7" font-family="Liberation Serif" font-size="5" fill="#333">4</text><text x="449" y="554.7" font-family="Liberation Serif" font-size="5" fill="#333">5</text><text x="411" y="499" font-family="Liberation Serif" font-size="7.4" font-weight="bold" fill="#f00000" text-anchor="start">U12</text><text x="402" y="508" font-family="Liberation Serif" font-size="5.6" font-weight="normal" fill="#40408a" text-anchor="start">OB2365PCP</text><path d="M371.4 519.2 L380 519.2" fill="none" stroke="#12128a" stroke-width="1.3"/><path d="M380 531.6 L367.3 531.6 L367.3 582.1" fill="none" stroke="#12128a" stroke-width="1.3"/><path d="M390 544.1 L335.4 544.1 L335.4 582.1 L379.8 582.1 L379.8 556.7 L392 556.7" fill="none" stroke="#12128a" stroke-width="1.3"/><path d="M373.5 556.7 L379.8 556.7" fill="none" stroke="#12128a" stroke-width="1.3"/><path d="M373.5 556.7 L373.5 582.1" fill="none" stroke="#12128a" stroke-width="1.3"/><path d="M373.5 563 q3 0.81 0 1.62 q-3 0.81 0 1.62 q3 0.81 0 1.62 q-3 0.81 0 1.62 q3 0.81 0 1.62 q-3 0.81 0 1.62 q3 0.81 0 1.62 q-3 0.81 0 1.62" fill="none" stroke="#0a0af0" stroke-width="1.2"/><path d="M379.8 563 q3 0.81 0 1.62 q-3 0.81 0 1.62 q3 0.81 0 1.62 q-3 0.81 0 1.62 q3 0.81 0 1.62 q-3 0.81 0 1.62 q3 0.81 0 1.62 q-3 0.81 0 1.62" fill="none" stroke="#0a0af0" stroke-width="1.2"/><circle cx="379.8" cy="556.7" r="1.8" fill="#12128a"/><circle cx="354.6" cy="544.1" r="1.8" fill="#12128a"/><circle cx="354.6" cy="582.1" r="1.8" fill="#12128a"/><circle cx="367.3" cy="582.1" r="1.8" fill="#12128a"/><circle cx="373.5" cy="582.1" r="1.8" fill="#12128a"/><path d="M330.9 564.9 h9 M330.9 568.1 h9" stroke="#0a0af0" stroke-width="1.3"/><text x="317" y="555" font-family="Liberation Serif" font-size="7.4" font-weight="bold" fill="#f00000" text-anchor="start">C14</text><text x="316" y="562" font-family="Liberation Serif" font-size="5.4" font-weight="normal" fill="#40408a" text-anchor="start">102/50V</text><text x="375" y="553" font-family="Liberation Serif" font-size="7.4" font-weight="bold" fill="#f00000" text-anchor="start">R13</text><text x="372" y="574" font-family="Liberation Serif" font-size="5" font-weight="normal" fill="#40408a" text-anchor="start" transform="rotate(-90 372 574)">1R/1%</text><text x="386" y="574" font-family="Liberation Serif" font-size="5" font-weight="normal" fill="#40408a" text-anchor="start" transform="rotate(-90 386 574)">1R/1%</text><circle cx="352" cy="567" r="7" fill="none" stroke="#0a0af0" stroke-width="1.2"/><path d="M354.6 544.1 v15 l-4 4 v8 l4 4 v7 M350.6 559 h10 M350.6 574 h10" fill="none" stroke="#0a0af0" stroke-width="1.1"/><text x="346" y="537" font-family="Liberation Serif" font-size="7.4" font-weight="bold" fill="#f00000" text-anchor="start">U3A</text><text x="344" y="543" font-family="Liberation Serif" font-size="5.4" font-weight="normal" fill="#40408a" text-anchor="start">EL817B</text><text x="365" y="576" font-family="Liberation Serif" font-size="6.8" font-weight="bold" fill="#f00000" text-anchor="start" transform="rotate(-90 365 576)">U3A</text><path d="M354.6 582.1 L354.6 594" fill="none" stroke="#12128a" stroke-width="1.3"/><path d="M354.6 589 v6 M347.6 595 h14 L354.6 602 Z" fill="none" stroke="#7a1010" stroke-width="1.4"/><text x="354.6" y="607" font-family="Liberation Serif" font-size="6" fill="#7a1010" text-anchor="middle">PGND</text><rect x="654" y="361.2" width="3" height="145.2" fill="#0a0af0"/><path d="M641 367.3 a6.71 6.39 0 0 1 0 12.77 a6.71 6.39 0 0 1 0 12.77 a6.71 6.39 0 0 1 0 12.77 a6.71 6.39 0 0 1 0 12.77" fill="none" stroke="#0a0af0" stroke-width="1.3"/><path d="M641 449.7 a6.68 6.36 0 0 1 0 12.73 a6.68 6.36 0 0 1 0 12.73 a6.68 6.36 0 0 1 0 12.73 a6.68 6.36 0 0 1 0 12.73" fill="none" stroke="#0a0af0" stroke-width="1.3"/><circle cx="640" cy="493.7" r="2.1" fill="#000"/><path d="M668 361.4 a6.62 6.30 0 0 0 0 12.60 a6.62 6.30 0 0 0 0 12.60 a6.62 6.30 0 0 0 0 12.60 a6.62 6.30 0 0 0 0 12.60 a6.62 6.30 0 0 0 0 12.60 a6.62 6.30 0 0 0 0 12.60 a6.62 6.30 0 0 0 0 12.60 a6.62 6.30 0 0 0 0 12.60 a6.62 6.30 0 0 0 0 12.60 a6.62 6.30 0 0 0 0 12.60 a6.62 6.30 0 0 0 0 12.60" fill="none" stroke="#0a0af0" stroke-width="1.3"/><path d="M680.5 374.4 a6.58 6.27 0 0 0 0 12.53 a6.58 6.27 0 0 0 0 12.53 a6.58 6.27 0 0 0 0 12.53 a6.58 6.27 0 0 0 0 12.53 a6.58 6.27 0 0 0 0 12.53 a6.58 6.27 0 0 0 0 12.53 a6.58 6.27 0 0 0 0 12.53 a6.58 6.27 0 0 0 0 12.53 a6.58 6.27 0 0 0 0 12.53" fill="none" stroke="#0a0af0" stroke-width="1.3"/><path d="M693 386.7 a6.60 6.29 0 0 0 0 12.57 a6.60 6.29 0 0 0 0 12.57 a6.60 6.29 0 0 0 0 12.57 a6.60 6.29 0 0 0 0 12.57 a6.60 6.29 0 0 0 0 12.57 a6.60 6.29 0 0 0 0 12.57 a6.60 6.29 0 0 0 0 12.57" fill="none" stroke="#0a0af0" stroke-width="1.3"/><path d="M668 361.4 h8.4 M668 500 h9.8 M680.5 374.4 h7.5 M680.5 487.2 h8.5 M693 386.7 h7.3 M693 474.7 h7.4" stroke="#0a0af0" stroke-width="1.3"/><circle cx="671" cy="496.3" r="2.1" fill="#000"/><circle cx="683.3" cy="481.3" r="2.1" fill="#000"/><circle cx="696" cy="468.6" r="2.1" fill="#000"/><text x="651" y="350" font-family="Liberation Serif" font-size="7.4" font-weight="bold" fill="#f00000" text-anchor="start">T3</text><text x="647" y="358" font-family="Liberation Serif" font-size="5.6" font-weight="normal" fill="#40408a" text-anchor="start">PQ2020</text><text x="631" y="366" font-family="Liberation Serif" font-size="5" fill="#444">1</text><text x="631" y="392" font-family="Liberation Serif" font-size="5" fill="#444">2</text><text x="631" y="417" font-family="Liberation Serif" font-size="5" fill="#444">3</text><text x="633" y="448" font-family="Liberation Serif" font-size="5" fill="#444">4</text><text x="633" y="473" font-family="Liberation Serif" font-size="5" fill="#444">5</text><text x="634" y="499" font-family="Liberation Serif" font-size="5" fill="#444">6</text><text x="678" y="499" font-family="Liberation Serif" font-size="5" fill="#444">7</text><text x="689" y="486" font-family="Liberation Serif" font-size="5" fill="#444">8</text><text x="701" y="473" font-family="Liberation Serif" font-size="5" fill="#444">9</text><text x="678" y="361" font-family="Liberation Serif" font-size="5" fill="#444">14</text><text x="690" y="374" font-family="Liberation Serif" font-size="5" fill="#444">13</text><text x="702" y="386" font-family="Liberation Serif" font-size="5" fill="#444">12</text><path d="M636 325.8 L629 333 L636 340.2 Z M636 333 H654.5 M659.5 333 H679 M679 326 v14 M682 328 v10 M685 330.5 v5" fill="none" stroke="#7a1010" stroke-width="1.3"/><path d="M654.5 333 h5" stroke="#12128a" stroke-width="1.3"/><path d="M655.4 328.5 v9 M658.6 328.5 v9" stroke="#0a0af0" stroke-width="1.3"/><text x="628" y="335" font-family="Liberation Serif" font-size="6.2" font-weight="normal" fill="#7a1010" text-anchor="end">PGND</text><text x="687" y="335" font-family="Liberation Serif" font-size="6.2" font-weight="normal" fill="#7a1010" text-anchor="start">GND</text><text x="654" y="327.5" font-family="Liberation Serif" font-size="7.4" font-weight="bold" fill="#f00000" text-anchor="start">CY4</text><text x="648" y="345.5" font-family="Liberation Serif" font-size="5.6" font-weight="normal" fill="#40408a" text-anchor="start">1nF/Y1</text><path d="M688 374.4 L718.4 374.4" fill="none" stroke="#12128a" stroke-width="1.3"/><path d="M700.3 386.7 L718.4 386.7 L718.4 355.2 L764.4 355.2 L764.4 374.4" fill="none" stroke="#12128a" stroke-width="1.3"/><path d="M718.4 367.3 L740 367.3" fill="none" stroke="#12128a" stroke-width="1.3"/><path d="M718.4 380.4 L740 380.4" fill="none" stroke="#12128a" stroke-width="1.3"/><circle cx="718.4" cy="367.3" r="1.8" fill="#12128a"/><circle cx="718.4" cy="374.4" r="1.8" fill="#12128a"/><circle cx="718.4" cy="380.4" r="1.8" fill="#12128a"/><path d="M727 355.2 q0.66 3 1.31 0 q0.66 -3 1.31 0 q0.66 3 1.31 0 q0.66 -3 1.31 0 q0.66 3 1.31 0 q0.66 -3 1.31 0 q0.66 3 1.31 0 q0.66 -3 1.31 0" fill="none" stroke="#0a0af0" stroke-width="1.2"/><rect x="754" y="349" width="4" height="12" fill="#f0ffff"/><path d="M754.4 350.7 v9 M757.6 350.7 v9" stroke="#0a0af0" stroke-width="1.3"/><path d="M741 363.3 L749 367.3 L741 371.3 Z" fill="#0a0af0"/><path d="M749 363.3 v8" stroke="#0a0af0" stroke-width="1.4"/><path d="M741 376.4 L749 380.4 L741 384.4 Z" fill="#0a0af0"/><path d="M749 376.4 v8" stroke="#0a0af0" stroke-width="1.4"/><rect x="736.6" y="361.2" width="14.9" height="24.8" fill="none" stroke="#0a0af0" stroke-width="0.9" stroke-dasharray="2 1.2"/><path d="M749 367.3 h3 v13.1 h-3 M752 374.4 h2" fill="none" stroke="#0a0af0" stroke-width="1"/><text x="724" y="344.5" font-family="Liberation Serif" font-size="7.4" font-weight="bold" fill="#f00000" text-anchor="start">R1</text><text x="720" y="352.5" font-family="Liberation Serif" font-size="5.4" font-weight="normal" fill="#40408a" text-anchor="start">15R/1206</text><text x="749" y="344.5" font-family="Liberation Serif" font-size="7.4" font-weight="bold" fill="#f00000" text-anchor="start">C2</text><text x="749" y="352.5" font-family="Liberation Serif" font-size="5.4" font-weight="normal" fill="#40408a" text-anchor="start">220pF/100V</text><text x="737" y="360" font-family="Liberation Serif" font-size="7.4" font-weight="bold" fill="#f00000" text-anchor="start">D1</text><text x="727" y="392" font-family="Liberation Serif" font-size="5.4" font-weight="normal" fill="#40408a" text-anchor="start">MBR10200CT</text><path d="M754 374.4 L805 374.4" fill="none" stroke="#12128a" stroke-width="1.3"/><path d="M824.5 374.4 L980 374.4" fill="none" stroke="#12128a" stroke-width="1.3"/><path d="M805 367.5 h19.5 M805 369.7 h19.5 M805 373 a2.45 2.45 0 0 0 4.9 0 a2.45 2.45 0 0 0 4.9 0 a2.45 2.45 0 0 0 4.9 0 a2.45 2.45 0 0 0 4.8 0" fill="none" stroke="#0a0af0" stroke-width="1.1"/><circle cx="764.4" cy="374.4" r="1.8" fill="#12128a"/><circle cx="777.2" cy="374.4" r="1.8" fill="#12128a"/><circle cx="786.5" cy="374.4" r="1.8" fill="#12128a"/><circle cx="843.3" cy="374.4" r="1.8" fill="#12128a"/><circle cx="877.8" cy="374.4" r="1.8" fill="#12128a"/><circle cx="906.2" cy="374.4" r="1.8" fill="#12128a"/><circle cx="925.2" cy="374.4" r="1.8" fill="#12128a"/><circle cx="934.6" cy="374.4" r="1.8" fill="#12128a"/><path d="M980 374.4 h4 M981 369.5 l4.5 4.9 l-4.5 4.9" fill="none" stroke="#f00000" stroke-width="1.2"/><text x="987" y="376.5" font-family="Liberation Serif" font-size="6.2" font-weight="normal" fill="#f00000" text-anchor="start">DC12V</text><text x="1007.4" y="361" font-family="Liberation Serif" font-size="9.8" font-weight="bold" fill="#f00000" textLength="34" lengthAdjust="spacingAndGlyphs">12V/0.8A</text><text x="783" y="361" font-family="Liberation Serif" font-size="7.4" font-weight="bold" fill="#f00000" text-anchor="start">C5</text><text x="775" y="369" font-family="Liberation Serif" font-size="5.4" font-weight="normal" fill="#40408a" text-anchor="start">820uF/25V</text><text x="808" y="360" font-family="Liberation Serif" font-size="7.4" font-weight="bold" fill="#f00000" text-anchor="start">L1</text><text x="809" y="366.5" font-family="Liberation Serif" font-size="5.4" font-weight="normal" fill="#40408a" text-anchor="start">3.3uH</text><text x="840" y="360" font-family="Liberation Serif" font-size="7.4" font-weight="bold" fill="#f00000" text-anchor="start">C4</text><text x="833" y="368.5" font-family="Liberation Serif" font-size="5.4" font-weight="normal" fill="#40408a" text-anchor="start">100uF/50V</text><text x="873" y="359" font-family="Liberation Serif" font-size="7.4" font-weight="bold" fill="#f00000" text-anchor="start">C3</text><text x="872" y="368.5" font-family="Liberation Serif" font-size="5.4" font-weight="normal" fill="#40408a" text-anchor="start">100nF/50V</text><path d="M786.5 374.4 L786.5 449.8" fill="none" stroke="#12128a" stroke-width="1.3"/><path d="M780.5 393.3 h12 M779.5 399.7 h12 M781.5 399.5 l6 -6 M785.5 399.5 l6 -6 M789.5 399.5 l3 -3" stroke="#0a0af0" stroke-width="1.2" fill="none"/><text x="788.5" y="391.5" font-family="Liberation Sans" font-size="5" fill="#0a0af0">+</text><path d="M777.2 374.4 L777.2 623" fill="none" stroke="#12128a" stroke-width="1.3"/><path d="M843.3 374.4 L843.3 449.8" fill="none" stroke="#12128a" stroke-width="1.3"/><path d="M837.3 393.3 h12 M836.3 399.7 h12 M838.3 399.5 l6 -6 M842.3 399.5 l6 -6 M846.3 399.5 l3 -3" stroke="#0a0af0" stroke-width="1.2" fill="none"/><text x="845.3" y="391.5" font-family="Liberation Sans" font-size="5" fill="#0a0af0">+</text><path d="M877.8 374.4 L877.8 449.8" fill="none" stroke="#12128a" stroke-width="1.3"/><path d="M873.3 395.4 h9 M873.3 398.6 h9" stroke="#0a0af0" stroke-width="1.3"/><path d="M906.2 374.4 L906.2 449.8" fill="none" stroke="#12128a" stroke-width="1.3"/><path d="M901.7 391.5 L906.2 400.5 L910.7 391.5 Z" fill="#0a0af0"/><path d="M901.7 400.5 h9.0" stroke="#0a0af0" stroke-width="1.4"/><path d="M906.2 418.2 q3 0.76 0 1.51 q-3 0.76 0 1.51 q3 0.76 0 1.51 q-3 0.76 0 1.51 q3 0.76 0 1.51 q-3 0.76 0 1.51 q3 0.76 0 1.51 q-3 0.76 0 1.51" fill="none" stroke="#0a0af0" stroke-width="1.2"/><path d="M912 392 l3 3 M912 397 l3 3" stroke="#0a0af0" stroke-width="1"/><path d="M934.6 374.4 L934.6 449.8" fill="none" stroke="#12128a" stroke-width="1.3"/><path d="M934.6 390.7 q3 0.66 0 1.31 q-3 0.66 0 1.31 q3 0.66 0 1.31 q-3 0.66 0 1.31 q3 0.66 0 1.31 q-3 0.66 0 1.31 q3 0.66 0 1.31 q-3 0.66 0 1.31" fill="none" stroke="#0a0af0" stroke-width="1.2"/><path d="M925.2 374.4 L925.2 481.1 L874.6 481.1 L874.6 623 L777.2 623" fill="none" stroke="#12128a" stroke-width="1.3"/><text x="910" y="393" font-family="Liberation Serif" font-size="7.4" font-weight="bold" fill="#f00000" text-anchor="start">D2</text><path d="M910.34 404.35 L915.26 404.35M911.81 403.80 L911.81 404.95M913.79 403.80 L913.79 404.95M911.81 404.95 L911.81 406.33M912.55 404.95 L912.55 406.33M913.29 404.95 L912.80 406.10M913.29 405.41 L915.02 405.41M910.83 406.79 L914.77 406.79 L914.77 408.17 L910.83 408.17 L910.83 406.79M912.06 406.79 L912.06 408.17M913.54 406.79 L913.54 408.17" fill="none" stroke="#40408a" stroke-width="0.8" stroke-linecap="square"/><path d="M917.41 403.80 L916.43 404.95M917.17 404.26 L919.39 404.26 L918.65 404.95M916.68 404.95 L920.12 404.95 L920.12 406.56 L916.68 406.56 L916.68 404.95M918.40 404.95 L918.40 406.56M916.68 406.56 L916.68 408.17 L920.62 408.17 L920.62 407.48" fill="none" stroke="#40408a" stroke-width="0.8" stroke-linecap="square"/><text x="921.20" y="408.40" font-family="Liberation Serif" font-size="5.6" font-weight="normal" fill="#40408a" textLength="11.40" lengthAdjust="spacingAndGlyphs">3mm</text><text x="937" y="393" font-family="Liberation Serif" font-size="7.4" font-weight="bold" fill="#f00000" text-anchor="start">R3</text><text x="938" y="408" font-family="Liberation Serif" font-size="5.4" font-weight="normal" fill="#40408a" text-anchor="start">10K/1206</text><text x="910" y="437" font-family="Liberation Serif" font-size="7.4" font-weight="bold" fill="#f00000" text-anchor="start">R5</text><text x="910" y="442.5" font-family="Liberation Serif" font-size="5.4" font-weight="normal" fill="#40408a" text-anchor="start">2K/1206</text><path d="M712.5 449.8 L934.6 449.8" fill="none" stroke="#12128a" stroke-width="1.3"/><path d="M700.3 474.7 L712.5 474.7 L712.5 487.2 L689 487.2" fill="none" stroke="#12128a" stroke-width="1.3"/><path d="M712.5 449.8 L712.5 474.7" fill="none" stroke="#12128a" stroke-width="1.3"/><circle cx="712.5" cy="474.7" r="1.8" fill="#12128a"/><circle cx="738" cy="449.8" r="1.8" fill="#12128a"/><circle cx="786.5" cy="449.8" r="1.8" fill="#12128a"/><circle cx="843.3" cy="449.8" r="1.8" fill="#12128a"/><circle cx="877.8" cy="449.8" r="1.8" fill="#12128a"/><circle cx="906.2" cy="449.8" r="1.8" fill="#12128a"/><circle cx="934.6" cy="449.8" r="1.8" fill="#12128a"/><rect x="731.4" y="418.4" width="13.1" height="19" fill="#ffffb4" stroke="#8a1a1a" stroke-width="1"/><path d="M736 429 h4 M738 437.4 v12.4" stroke="#000" stroke-width="0.9"/><text x="747" y="427" font-family="Liberation Serif" font-size="7.4" font-weight="bold" fill="#f00000" text-anchor="start">HS4</text><path d="M934.6 449.8 v5 M927.6 454.8 h14 M930.1 457.8 h9 M932.6 460.8 h4" fill="none" stroke="#7a1010" stroke-width="1.4"/><text x="934.6" y="466.8" font-family="Liberation Serif" font-size="6" fill="#7a1010" text-anchor="middle">GND</text><path d="M777.2 500 q3 0.75 0 1.50 q-3 0.75 0 1.50 q3 0.75 0 1.50 q-3 0.75 0 1.50 q3 0.75 0 1.50 q-3 0.75 0 1.50 q3 0.75 0 1.50 q-3 0.75 0 1.50" fill="none" stroke="#0a0af0" stroke-width="1.2"/><circle cx="777.2" cy="525.3" r="1.8" fill="#12128a"/><circle cx="777.2" cy="566.2" r="1.8" fill="#12128a"/><circle cx="777.2" cy="623" r="1.8" fill="#12128a"/><path d="M777.2 525.3 L745.5 525.3 L745.5 566.2 L777.2 566.2" fill="none" stroke="#12128a" stroke-width="1.3"/><path d="M745.5 538 q3 0.75 0 1.50 q-3 0.75 0 1.50 q3 0.75 0 1.50 q-3 0.75 0 1.50 q3 0.75 0 1.50 q-3 0.75 0 1.50 q3 0.75 0 1.50 q-3 0.75 0 1.50" fill="none" stroke="#0a0af0" stroke-width="1.2"/><path d="M777.2 566.2 L802.5 541.4 L874.6 541.4" fill="none" stroke="#12128a" stroke-width="1.3"/><path d="M821.9 536.9 v9 M825.1 536.9 v9" stroke="#0a0af0" stroke-width="1.3"/><path d="M777.2 566.2 L874.6 566.2" fill="none" stroke="#12128a" stroke-width="1.3"/><path d="M806.4 562.2 v8 M809.6 562.2 v8" stroke="#0a0af0" stroke-width="1.3"/><path d="M831 566.2 q0.75 3 1.50 0 q0.75 -3 1.50 0 q0.75 3 1.50 0 q0.75 -3 1.50 0 q0.75 3 1.50 0 q0.75 -3 1.50 0 q0.75 3 1.50 0 q0.75 -3 1.50 0" fill="none" stroke="#0a0af0" stroke-width="1.2"/><path d="M782 588.5 L874.6 588.5" fill="none" stroke="#12128a" stroke-width="1.3"/><circle cx="874.6" cy="541.4" r="1.8" fill="#12128a"/><circle cx="874.6" cy="566.2" r="1.8" fill="#12128a"/><circle cx="874.6" cy="588.5" r="1.8" fill="#12128a"/><path d="M874.6 500 q3 0.64 0 1.27 q-3 0.64 0 1.27 q3 0.64 0 1.27 q-3 0.64 0 1.27 q3 0.64 0 1.27 q-3 0.64 0 1.27 q3 0.64 0 1.27 q-3 0.64 0 1.27" fill="none" stroke="#0a0af0" stroke-width="1.2"/><path d="M874.6 523 q3 0.62 0 1.25 q-3 0.62 0 1.25 q3 0.62 0 1.25 q-3 0.62 0 1.25 q3 0.62 0 1.25 q-3 0.62 0 1.25 q3 0.62 0 1.25 q-3 0.62 0 1.25" fill="none" stroke="#0a0af0" stroke-width="1.2"/><path d="M874.6 598.3 q3 0.71 0 1.41 q-3 0.71 0 1.41 q3 0.71 0 1.41 q-3 0.71 0 1.41 q3 0.71 0 1.41 q-3 0.71 0 1.41 q3 0.71 0 1.41 q-3 0.71 0 1.41" fill="none" stroke="#0a0af0" stroke-width="1.2"/><path d="M770 532.3 H777.2 a8.6 8.6 0 0 1 0 17.2 H770 M773 543.5 h8.4" fill="none" stroke="#0a0af0" stroke-width="1.2"/><path d="M773 537 h8.4 l-4.2 6 z" fill="#0a0af0"/><path d="M771 540 l-5 5 M773 544 l-5 5 M766 545 l-1 -2.5 l2.5 1 M768 549 l-1 -2.5 l2.5 1" fill="none" stroke="#0a0af0" stroke-width="1.1"/><path d="M773.0 589.2 L777.2 580.8 L781.4000000000001 589.2 Z" fill="#0a0af0"/><path d="M773.0 580.8 h8.4" stroke="#0a0af0" stroke-width="1.4"/><path d="M773 581 l-1.5 -1.5 M781.4 581 l1.5 1.5" stroke="#0a0af0" stroke-width="1.2"/><path d="M777.2 623 v5 M770.2 628 h14 M772.7 631 h9 M775.2 634 h4" fill="none" stroke="#7a1010" stroke-width="1.4"/><text x="777.2" y="640" font-family="Liberation Serif" font-size="6" fill="#7a1010" text-anchor="middle">GND</text><text x="758" y="508" font-family="Liberation Serif" font-size="7.4" font-weight="bold" fill="#f00000" text-anchor="start">R8</text><text x="762" y="515" font-family="Liberation Serif" font-size="5.4" font-weight="normal" fill="#40408a" text-anchor="start">2K</text><text x="748" y="543" font-family="Liberation Serif" font-size="7.4" font-weight="bold" fill="#f00000" text-anchor="start">R10</text><text x="748" y="550" font-family="Liberation Serif" font-size="5.4" font-weight="normal" fill="#40408a" text-anchor="start">1K</text><text x="787" y="535" font-family="Liberation Serif" font-size="7.4" font-weight="bold" fill="#f00000" text-anchor="start">U3B</text><text x="787" y="542" font-family="Liberation Serif" font-size="5.4" font-weight="normal" fill="#40408a" text-anchor="start">EL817B</text><text x="828" y="537" font-family="Liberation Serif" font-size="7.4" font-weight="bold" fill="#f00000" text-anchor="start">C11</text><text x="818" y="553" font-family="Liberation Serif" font-size="5.4" font-weight="normal" fill="#40408a" text-anchor="start">1nF/50V</text><text x="799" y="561" font-family="Liberation Serif" font-size="7.4" font-weight="bold" fill="#f00000" text-anchor="start">C12</text><text x="803" y="578" font-family="Liberation Serif" font-size="5.4" font-weight="normal" fill="#40408a" text-anchor="start">100nF</text><text x="830" y="561" font-family="Liberation Serif" font-size="7.4" font-weight="bold" fill="#f00000" text-anchor="start">R11</text><text x="832" y="578" font-family="Liberation Serif" font-size="5.4" font-weight="normal" fill="#40408a" text-anchor="start">10K</text><text x="759" y="575" font-family="Liberation Serif" font-size="7.4" font-weight="bold" fill="#f00000" text-anchor="start">U4</text><text x="770" y="579" font-family="Liberation Serif" font-size="5.4" font-weight="normal" fill="#40408a" text-anchor="start">K</text><text x="770" y="597" font-family="Liberation Serif" font-size="5.4" font-weight="normal" fill="#40408a" text-anchor="start">A</text><text x="781" y="594" font-family="Liberation Serif" font-size="5" font-weight="normal" fill="#40408a" text-anchor="start">REF</text><text x="724.00" y="587.20" font-family="Liberation Serif" font-size="5.8" font-weight="normal" fill="#2020d0" textLength="23.40" lengthAdjust="spacingAndGlyphs">TL431_</text><path d="M748.00 583.15 L752.60 583.15M749.02 582.60 L749.02 584.90M751.58 582.60 L751.58 584.90M749.02 583.89 L751.58 583.89M749.02 584.53 L751.58 584.53M747.75 585.13 L752.85 585.13M749.28 585.13 L748.00 585.82M751.32 585.13 L752.60 585.82M750.30 585.59 L750.30 586.97M749.02 586.28 L751.58 586.28M748.00 587.06 L752.60 587.06" fill="none" stroke="#2020d0" stroke-width="0.8" stroke-linecap="square"/><path d="M753.80 583.29 L754.31 583.98M753.55 586.74 L754.57 585.36M755.84 582.60 L755.08 584.21M755.59 583.52 L755.59 587.20M757.12 582.60 L757.38 583.15M755.59 583.52 L758.55 583.52M755.59 584.67 L758.40 584.67M755.59 585.82 L758.40 585.82M755.59 586.97 L758.65 586.97M757.02 583.52 L757.02 586.97" fill="none" stroke="#2020d0" stroke-width="0.8" stroke-linecap="square"/><path d="M760.11 583.52 L763.43 583.52 L763.43 585.82 L760.11 585.82 L760.11 583.52M760.11 584.67 L763.43 584.67M761.80 582.60 L761.80 586.51 L762.41 586.97 L764.20 586.97 L764.20 586.28" fill="none" stroke="#2020d0" stroke-width="0.8" stroke-linecap="square"/><path d="M765.40 583.06 L765.76 583.52M765.30 584.44 L765.76 584.90M765.30 586.74 L765.91 585.59M766.58 582.97 L770.15 582.97M766.68 582.97 L766.68 585.36 L766.17 586.97M767.44 583.52 L769.49 583.52 L769.49 585.13 L767.44 585.13 L767.44 583.52M767.44 584.35 L769.49 584.35M768.47 585.13 L768.47 586.97M767.44 585.82 L767.09 586.51M769.49 585.82 L769.84 586.51" fill="none" stroke="#2020d0" stroke-width="0.8" stroke-linecap="square"/><text x="879" y="501" font-family="Liberation Serif" font-size="7.4" font-weight="bold" fill="#f00000" text-anchor="start">R7</text><text x="878" y="509" font-family="Liberation Serif" font-size="5.4" font-weight="normal" fill="#40408a" text-anchor="start">20K/1%</text><text x="879" y="525" font-family="Liberation Serif" font-size="7.4" font-weight="bold" fill="#f00000" text-anchor="start">R9</text><text x="878" y="533" font-family="Liberation Serif" font-size="5.4" font-weight="normal" fill="#40408a" text-anchor="start">18K/1%</text><text x="878" y="614" font-family="Liberation Serif" font-size="7.4" font-weight="bold" fill="#f00000" text-anchor="start">R12</text><text x="878" y="622" font-family="Liberation Serif" font-size="5.4" font-weight="normal" fill="#40408a" text-anchor="start">10K/1%</text><path d="M711 805 H1070" stroke="#000" stroke-width="2.2"/><path d="M711 817.6 H1070" stroke="#000" stroke-width="1.8"/><path d="M711 829.6 H1070" stroke="#000" stroke-width="1.8"/><path d="M711 842 H1070" stroke="#000" stroke-width="2.4"/><path d="M712 804 V885" stroke="#000" stroke-width="2"/><path d="M734.7 804 V842" stroke="#000" stroke-width="2"/><path d="M758.3 804 V842" stroke="#000" stroke-width="2"/><path d="M801.9 804 V842" stroke="#000" stroke-width="2"/><path d="M835.9 804 V842" stroke="#000" stroke-width="2"/><path d="M861.8 804 V842" stroke="#000" stroke-width="2"/><path d="M883.9 804 V842" stroke="#000" stroke-width="2"/><path d="M905.9 804 V842" stroke="#000" stroke-width="2"/><path d="M950.7 804 V842" stroke="#000" stroke-width="2"/><path d="M985.2 804 V842" stroke="#000" stroke-width="2"/><path d="M1010 804 V842" stroke="#000" stroke-width="2"/><path d="M1032.6 804 V842" stroke="#000" stroke-width="2"/><path d="M1055.8 804 V842" stroke="#000" stroke-width="2"/><path d="M758.3 842 V885" stroke="#000" stroke-width="2"/><path d="M861.8 842 V885" stroke="#000" stroke-width="2"/><path d="M1010 842 V885" stroke="#000" stroke-width="2"/><path d="M712 854.4 H861.8" stroke="#000" stroke-width="1.6"/><path d="M712 867.4 H861.8" stroke="#000" stroke-width="1.6"/><path d="M712 880.2 H861.8" stroke="#000" stroke-width="1.6"/><path d="M1010 879.8 H1070" stroke="#000" stroke-width="2"/><path d="M715.48 832.76 L718.30 832.76M716.89 831.50 L716.89 835.70M716.89 832.97 L715.48 834.65M717.03 833.18 L718.30 834.02M719.00 831.84 L722.17 831.84M718.65 832.97 L722.52 832.97M720.55 832.97 L720.55 835.57 L719.70 835.36M719.35 833.81 L718.65 835.07M721.68 833.81 L722.38 835.07" fill="none" stroke="#909090" stroke-width="0.7" stroke-linecap="square"/><path d="M724.18 831.71 L724.89 832.13M723.48 832.97 L724.89 832.97 L724.89 835.07 L725.94 834.44M726.65 831.92 L729.82 831.92 L729.82 833.39 L727.00 833.39 L727.00 835.28 L730.38 835.28 L730.38 834.65" fill="none" stroke="#909090" stroke-width="0.7" stroke-linecap="square"/><path d="M715.48 837.46 L718.30 837.46M716.89 836.20 L716.89 840.40M716.89 837.67 L715.48 839.35M717.03 837.88 L718.30 838.72M719.00 836.54 L722.17 836.54M718.65 837.67 L722.52 837.67M720.55 837.67 L720.55 840.27 L719.70 840.06M719.35 838.51 L718.65 839.77M721.68 838.51 L722.38 839.77" fill="none" stroke="#909090" stroke-width="0.7" stroke-linecap="square"/><path d="M724.18 836.41 L724.89 836.83M723.48 837.67 L724.89 837.67 L724.89 839.77 L725.94 839.14M726.65 836.62 L729.82 836.62 L729.82 838.09 L727.00 838.09 L727.00 839.98 L730.38 839.98 L730.38 839.35" fill="none" stroke="#909090" stroke-width="0.7" stroke-linecap="square"/><path d="M736.33 832.64 L740.17 832.64M738.25 831.50 L738.25 835.77M736.62 831.69 L737.20 832.45M739.88 831.69 L739.31 832.45M736.33 834.35 L740.17 835.77M740.17 834.35 L736.33 835.77M736.33 837.20 L740.65 837.20M738.73 836.25 L736.81 840.52M737.29 838.34 L740.17 840.52M741.61 831.50 L740.84 834.35M741.13 833.40 L745.25 833.40M744.01 833.40 L741.61 840.52M741.61 835.30 L745.25 840.52" fill="none" stroke="#181818" stroke-width="1.05" stroke-linecap="square"/><path d="M748.67 831.50 L754.43 831.50 L754.43 833.88 L748.67 833.88 L748.67 831.50M748.67 832.64 L754.43 832.64M746.75 834.83 L756.35 834.83M748.19 835.77 L754.91 835.77 L754.91 838.62 L748.19 838.62 L748.19 835.77M748.19 837.20 L754.91 837.20M751.55 835.77 L751.55 840.72M747.71 839.67 L755.39 839.67M746.75 840.72 L756.35 840.72" fill="none" stroke="#181818" stroke-width="1.05" stroke-linecap="square"/><path d="M759.44 831.98 L768.81 831.98M760.84 833.40 L767.41 833.40 L767.41 837.20 L760.84 837.20 L760.84 833.40M760.84 835.30 L767.41 835.30M764.12 831.98 L764.12 837.20 L762.25 839.58 L759.91 840.52M762.25 838.15 L768.34 840.72" fill="none" stroke="#181818" stroke-width="1.05" stroke-linecap="square"/><path d="M770.56 832.45 L773.84 832.45 L773.84 835.77 L770.84 835.77 L770.84 839.58 L774.31 839.58M775.71 831.50 L774.96 834.35M775.24 833.40 L779.27 833.40M778.06 833.40 L775.71 840.52M775.71 835.30 L779.27 840.52" fill="none" stroke="#181818" stroke-width="1.05" stroke-linecap="square"/><path d="M783.08 831.50 L784.02 832.64M787.77 831.50 L786.83 832.64M782.14 833.59 L788.71 833.59 L788.71 837.39 L782.14 837.39 L782.14 833.59M782.14 835.49 L788.71 835.49M785.42 833.59 L785.42 841.00M780.74 838.91 L790.11 838.91" fill="none" stroke="#181818" stroke-width="1.05" stroke-linecap="square"/><path d="M793.26 831.50 L798.89 831.50 L798.89 834.83 L793.26 834.83 L793.26 831.50M791.39 836.25 L800.76 836.25M794.67 836.25 L793.73 838.15 L799.36 838.15 L798.89 840.81 L797.01 840.24" fill="none" stroke="#181818" stroke-width="1.05" stroke-linecap="square"/><path d="M805.70 831.50 L804.35 833.40M805.25 832.45 L807.50 832.45M810.20 831.50 L808.85 833.40M809.75 832.45 L812.45 832.45M808.40 833.88 L804.35 836.73M808.40 833.88 L812.45 836.73M806.60 836.25 L810.20 836.25M806.60 837.67 L807.05 839.10M810.20 837.67 L809.75 839.10M803.90 840.52 L812.90 840.52" fill="none" stroke="#181818" stroke-width="1.05" stroke-linecap="square"/><path d="M827.05 831.50 L825.25 834.35M826.60 832.45 L830.20 832.45 L825.70 836.73M827.05 833.40 L828.85 834.83M826.60 836.73 L831.55 836.73 L831.55 840.81 L826.60 840.81 L826.60 836.73" fill="none" stroke="#181818" stroke-width="1.05" stroke-linecap="square"/><path d="M838.97 831.98 L844.73 831.98 L844.73 840.52 L838.97 840.52 L838.97 831.98M838.97 836.25 L844.73 836.25" fill="none" stroke="#181818" stroke-width="1.05" stroke-linecap="square"/><path d="M848.43 832.92 L852.75 832.92M849.39 831.50 L849.39 838.15M851.79 831.50 L851.79 838.15M849.39 834.83 L851.79 834.83M849.39 836.44 L851.79 836.44M847.95 838.15 L853.23 838.15M849.87 839.10 L848.72 840.72M851.31 839.10 L852.56 840.52M853.90 831.98 L857.07 831.98 L857.07 840.72 L856.11 840.24M853.90 831.98 L853.90 838.15 L853.23 840.72M853.90 834.83 L857.07 834.83M853.90 837.20 L857.07 837.20" fill="none" stroke="#181818" stroke-width="1.05" stroke-linecap="square"/><path d="M865.28 832.76 L868.10 832.76M866.69 831.50 L866.69 835.70M866.69 832.97 L865.28 834.65M866.83 833.18 L868.10 834.02M868.80 831.84 L871.97 831.84M868.45 832.97 L872.32 832.97M870.35 832.97 L870.35 835.57 L869.50 835.36M869.15 833.81 L868.45 835.07M871.48 833.81 L872.18 835.07" fill="none" stroke="#909090" stroke-width="0.7" stroke-linecap="square"/><path d="M873.98 831.71 L874.69 832.13M873.28 832.97 L874.69 832.97 L874.69 835.07 L875.74 834.44M876.45 831.92 L879.62 831.92 L879.62 833.39 L876.80 833.39 L876.80 835.28 L880.18 835.28 L880.18 834.65" fill="none" stroke="#909090" stroke-width="0.7" stroke-linecap="square"/><path d="M865.28 837.46 L868.10 837.46M866.69 836.20 L866.69 840.40M866.69 837.67 L865.28 839.35M866.83 837.88 L868.10 838.72M868.80 836.54 L871.97 836.54M868.45 837.67 L872.32 837.67M870.35 837.67 L870.35 840.27 L869.50 840.06M869.15 838.51 L868.45 839.77M871.48 838.51 L872.18 839.77" fill="none" stroke="#909090" stroke-width="0.7" stroke-linecap="square"/><path d="M873.98 836.41 L874.69 836.83M873.28 837.67 L874.69 837.67 L874.69 839.77 L875.74 839.14M876.45 836.62 L879.62 836.62 L879.62 838.09 L876.80 838.09 L876.80 839.98 L880.18 839.98 L880.18 839.35" fill="none" stroke="#909090" stroke-width="0.7" stroke-linecap="square"/><path d="M885.49 832.64 L889.19 832.64M887.34 831.50 L887.34 835.77M885.77 831.69 L886.32 832.45M888.91 831.69 L888.36 832.45M885.49 834.35 L889.19 835.77M889.19 834.35 L885.49 835.77M885.49 837.20 L889.65 837.20M887.80 836.25 L885.95 840.52M886.42 838.34 L889.19 840.52M890.57 831.50 L889.83 834.35M890.11 833.40 L894.09 833.40M892.88 833.40 L890.57 840.52M890.57 835.30 L894.09 840.52" fill="none" stroke="#181818" stroke-width="1.05" stroke-linecap="square"/><path d="M897.38 831.50 L902.92 831.50 L902.92 833.88 L897.38 833.88 L897.38 831.50M897.38 832.64 L902.92 832.64M895.53 834.83 L904.77 834.83M896.92 835.77 L903.38 835.77 L903.38 838.62 L896.92 838.62 L896.92 835.77M896.92 837.20 L903.38 837.20M900.15 835.77 L900.15 840.72M896.45 839.67 L903.85 839.67M895.53 840.72 L904.77 840.72" fill="none" stroke="#181818" stroke-width="1.05" stroke-linecap="square"/><path d="M907.05 831.98 L916.65 831.98M908.49 833.40 L915.21 833.40 L915.21 837.20 L908.49 837.20 L908.49 833.40M908.49 835.30 L915.21 835.30M911.85 831.98 L911.85 837.20 L909.93 839.58 L907.53 840.52M909.93 838.15 L916.17 840.72" fill="none" stroke="#181818" stroke-width="1.05" stroke-linecap="square"/><path d="M918.43 832.45 L921.79 832.45 L921.79 835.77 L918.72 835.77 L918.72 839.58 L922.27 839.58M923.71 831.50 L922.94 834.35M923.23 833.40 L927.35 833.40M926.11 833.40 L923.71 840.52M923.71 835.30 L927.35 840.52" fill="none" stroke="#181818" stroke-width="1.05" stroke-linecap="square"/><path d="M931.25 831.50 L932.21 832.64M936.05 831.50 L935.09 832.64M930.29 833.59 L937.01 833.59 L937.01 837.39 L930.29 837.39 L930.29 833.59M930.29 835.49 L937.01 835.49M933.65 833.59 L933.65 841.00M928.85 838.91 L938.45 838.91" fill="none" stroke="#181818" stroke-width="1.05" stroke-linecap="square"/><path d="M941.67 831.50 L947.43 831.50 L947.43 834.83 L941.67 834.83 L941.67 831.50M939.75 836.25 L949.35 836.25M943.11 836.25 L942.15 838.15 L947.91 838.15 L947.43 840.81 L945.51 840.24" fill="none" stroke="#181818" stroke-width="1.05" stroke-linecap="square"/><path d="M954.50 831.50 L953.15 833.40M954.05 832.45 L956.30 832.45M959.00 831.50 L957.65 833.40M958.55 832.45 L961.25 832.45M957.20 833.88 L953.15 836.73M957.20 833.88 L961.25 836.73M955.40 836.25 L959.00 836.25M955.40 837.67 L955.85 839.10M959.00 837.67 L958.55 839.10M952.70 840.52 L961.70 840.52" fill="none" stroke="#181818" stroke-width="1.05" stroke-linecap="square"/><path d="M975.85 831.50 L974.05 834.35M975.40 832.45 L979.00 832.45 L974.50 836.73M975.85 833.40 L977.65 834.83M975.40 836.73 L980.35 836.73 L980.35 840.81 L975.40 840.81 L975.40 836.73" fill="none" stroke="#181818" stroke-width="1.05" stroke-linecap="square"/><path d="M988.27 831.98 L994.03 831.98 L994.03 840.52 L988.27 840.52 L988.27 831.98M988.27 836.25 L994.03 836.25" fill="none" stroke="#181818" stroke-width="1.05" stroke-linecap="square"/><path d="M997.73 832.92 L1002.05 832.92M998.69 831.50 L998.69 838.15M1001.09 831.50 L1001.09 838.15M998.69 834.83 L1001.09 834.83M998.69 836.44 L1001.09 836.44M997.25 838.15 L1002.53 838.15M999.17 839.10 L998.02 840.72M1000.61 839.10 L1001.86 840.52M1003.20 831.98 L1006.37 831.98 L1006.37 840.72 L1005.41 840.24M1003.20 831.98 L1003.20 838.15 L1002.53 840.72M1003.20 834.83 L1006.37 834.83M1003.20 837.20 L1006.37 837.20" fill="none" stroke="#181818" stroke-width="1.05" stroke-linecap="square"/><path d="M1013.48 832.76 L1016.30 832.76M1014.89 831.50 L1014.89 835.70M1014.89 832.97 L1013.48 834.65M1015.03 833.18 L1016.30 834.02M1017.00 831.84 L1020.17 831.84M1016.65 832.97 L1020.52 832.97M1018.55 832.97 L1018.55 835.57 L1017.70 835.36M1017.35 833.81 L1016.65 835.07M1019.68 833.81 L1020.38 835.07" fill="none" stroke="#909090" stroke-width="0.7" stroke-linecap="square"/><path d="M1022.18 831.71 L1022.89 832.13M1021.48 832.97 L1022.89 832.97 L1022.89 835.07 L1023.94 834.44M1024.65 831.92 L1027.82 831.92 L1027.82 833.39 L1025.00 833.39 L1025.00 835.28 L1028.38 835.28 L1028.38 834.65" fill="none" stroke="#909090" stroke-width="0.7" stroke-linecap="square"/><path d="M1013.48 837.46 L1016.30 837.46M1014.89 836.20 L1014.89 840.40M1014.89 837.67 L1013.48 839.35M1015.03 837.88 L1016.30 838.72M1017.00 836.54 L1020.17 836.54M1016.65 837.67 L1020.52 837.67M1018.55 837.67 L1018.55 840.27 L1017.70 840.06M1017.35 838.51 L1016.65 839.77M1019.68 838.51 L1020.38 839.77" fill="none" stroke="#909090" stroke-width="0.7" stroke-linecap="square"/><path d="M1022.18 836.41 L1022.89 836.83M1021.48 837.67 L1022.89 837.67 L1022.89 839.77 L1023.94 839.14M1024.65 836.62 L1027.82 836.62 L1027.82 838.09 L1025.00 838.09 L1025.00 839.98 L1028.38 839.98 L1028.38 839.35" fill="none" stroke="#909090" stroke-width="0.7" stroke-linecap="square"/><path d="M1034.23 832.64 L1038.07 832.64M1036.15 831.50 L1036.15 835.77M1034.52 831.69 L1035.10 832.45M1037.78 831.69 L1037.21 832.45M1034.23 834.35 L1038.07 835.77M1038.07 834.35 L1034.23 835.77M1034.23 837.20 L1038.55 837.20M1036.63 836.25 L1034.71 840.52M1035.19 838.34 L1038.07 840.52M1039.51 831.50 L1038.74 834.35M1039.03 833.40 L1043.15 833.40M1041.91 833.40 L1039.51 840.52M1039.51 835.30 L1043.15 840.52" fill="none" stroke="#181818" stroke-width="1.05" stroke-linecap="square"/><path d="M1046.57 831.50 L1052.33 831.50 L1052.33 833.88 L1046.57 833.88 L1046.57 831.50M1046.57 832.64 L1052.33 832.64M1044.65 834.83 L1054.25 834.83M1046.09 835.77 L1052.81 835.77 L1052.81 838.62 L1046.09 838.62 L1046.09 835.77M1046.09 837.20 L1052.81 837.20M1049.45 835.77 L1049.45 840.72M1045.61 839.67 L1053.29 839.67M1044.65 840.72 L1054.25 840.72" fill="none" stroke="#181818" stroke-width="1.05" stroke-linecap="square"/><path d="M1056.95 831.98 L1066.45 831.98M1058.37 833.40 L1065.03 833.40 L1065.03 837.20 L1058.37 837.20 L1058.37 833.40M1058.37 835.30 L1065.03 835.30M1061.70 831.98 L1061.70 837.20 L1059.80 839.58 L1057.42 840.52M1059.80 838.15 L1065.98 840.72" fill="none" stroke="#181818" stroke-width="1.05" stroke-linecap="square"/><path d="M1068.22 832.45 L1071.55 832.45 L1071.55 835.77 L1068.51 835.77 L1068.51 839.58 L1072.02 839.58M1073.45 831.50 L1072.69 834.35M1072.98 833.40 L1077.06 833.40M1075.83 833.40 L1073.45 840.52M1073.45 835.30 L1077.06 840.52" fill="none" stroke="#181818" stroke-width="1.05" stroke-linecap="square"/><path d="M1080.92 831.50 L1081.87 832.64M1085.68 831.50 L1084.73 832.64M1079.97 833.59 L1086.63 833.59 L1086.63 837.39 L1079.97 837.39 L1079.97 833.59M1079.97 835.49 L1086.63 835.49M1083.30 833.59 L1083.30 841.00M1078.55 838.91 L1088.05 838.91" fill="none" stroke="#181818" stroke-width="1.05" stroke-linecap="square"/><path d="M1091.25 831.50 L1096.95 831.50 L1096.95 834.83 L1091.25 834.83 L1091.25 831.50M1089.35 836.25 L1098.85 836.25M1092.67 836.25 L1091.72 838.15 L1097.43 838.15 L1096.95 840.81 L1095.05 840.24" fill="none" stroke="#181818" stroke-width="1.05" stroke-linecap="square"/><path d="M719.00 847.38 L722.08 847.38M720.76 844.50 L720.76 853.62 L719.88 853.14M719.00 851.22 L722.34 849.78M723.40 845.46 L723.40 852.18 L724.72 851.22M724.46 847.38 L725.16 848.82M726.92 844.98 L726.48 850.26 L724.28 853.81M726.04 851.22 L727.80 853.81" fill="none" stroke="#202020" stroke-width="1.0" stroke-linecap="square"/><path d="M744.32 844.50 L743.70 845.94M743.44 845.94 L748.28 845.94M743.00 848.34 L748.72 848.34M745.82 844.50 L745.82 854.10M743.88 849.78 L743.88 852.66M743.88 849.78 L747.84 849.78 L747.84 852.66M749.60 845.94 L749.60 851.22M751.10 844.50 L751.10 853.81 L750.04 853.33" fill="none" stroke="#202020" stroke-width="1.0" stroke-linecap="square"/><path d="M723.40 857.20 L723.40 858.16M719.44 859.60 L719.44 858.35 L727.36 858.35 L727.36 859.60M720.76 860.56 L726.04 860.56 L726.04 864.40 L720.76 864.40 L720.76 860.56M720.76 862.48 L726.04 862.48M723.40 859.60 L723.40 866.80" fill="none" stroke="#202020" stroke-width="1.0" stroke-linecap="square"/><path d="M743.00 860.08 L746.52 860.08M744.76 857.20 L744.76 866.80M744.76 860.56 L743.00 864.40M744.94 861.04 L746.52 862.96M748.98 857.20 L749.34 858.16M746.96 858.64 L751.80 858.64M749.16 858.64 L747.40 861.52 L750.04 861.52M750.92 860.56 L747.40 866.51M749.16 863.44 L751.62 866.51" fill="none" stroke="#202020" stroke-width="1.0" stroke-linecap="square"/><path d="M718.69 872.68 L722.74 872.68M720.71 869.80 L720.71 879.40M720.71 873.16 L718.69 877.00M720.92 873.64 L722.74 875.56M723.75 870.57 L728.30 870.57M723.24 873.16 L728.81 873.16M725.98 873.16 L725.98 879.11 L724.76 878.63M724.26 875.08 L723.24 877.96M727.60 875.08 L728.61 877.96" fill="none" stroke="#202020" stroke-width="1.0" stroke-linecap="square"/><path d="M730.70 871.24 L731.71 872.68M730.19 878.44 L732.21 875.56M734.74 869.80 L733.23 873.16M734.24 871.72 L734.24 879.40M737.27 869.80 L737.78 870.95M734.24 871.72 L740.11 871.72M734.24 874.12 L739.80 874.12M734.24 876.52 L739.80 876.52M734.24 878.92 L740.31 878.92M737.07 871.72 L737.07 878.92" fill="none" stroke="#202020" stroke-width="1.0" stroke-linecap="square"/><path d="M744.73 869.80 L742.20 874.12M743.71 872.68 L743.71 879.40M747.26 869.80 L747.26 877.96 L748.27 878.92 L751.61 878.92 L751.61 877.48M751.30 872.20 L747.26 875.56" fill="none" stroke="#202020" stroke-width="1.0" stroke-linecap="square"/><path d="M719.88 883.46 L726.92 883.46M723.40 883.46 L723.40 891.14M719.00 891.14 L727.80 891.14" fill="none" stroke="#202020" stroke-width="1.0" stroke-linecap="square"/><path d="M743.00 883.94 L751.80 883.94M745.64 882.50 L745.64 885.38M749.16 882.50 L749.16 885.38M744.32 886.82 L750.04 886.82 L744.76 890.18 L744.76 891.62 L751.62 891.62 L751.62 890.18" fill="none" stroke="#202020" stroke-width="1.0" stroke-linecap="square"/><text x="900.00" y="884.90" font-family="Liberation Serif" font-size="14.5" font-weight="normal" fill="#1a1aa0" textLength="18.30" lengthAdjust="spacingAndGlyphs">LLC</text><path d="M919.41 874.82 L923.94 874.82M921.67 872.93 L920.16 878.60 L923.94 878.60M922.30 876.08 L922.30 884.65M919.16 881.75 L924.19 881.12M924.82 874.82 L931.74 874.82M925.45 876.33 L931.11 876.33 L931.11 884.27M925.45 876.33 L925.45 884.27M925.45 879.23 L931.11 879.23M925.45 881.75 L931.11 881.75M928.22 872.30 L928.22 884.65M929.85 872.55 L930.48 873.56" fill="none" stroke="#1a1aa0" stroke-width="1.1" stroke-linecap="square"/><path d="M934.09 873.56 L938.49 873.56 L938.49 883.01 L934.09 883.01 L934.09 873.56M934.09 876.71 L938.49 876.71M934.09 879.86 L938.49 879.86M933.46 883.64 L939.12 883.39M939.75 876.08 L945.41 876.08 L944.78 884.27 L943.53 883.64M942.52 872.30 L942.27 878.60 L939.50 884.27" fill="none" stroke="#1a1aa0" stroke-width="1.1" stroke-linecap="square"/><path d="M949.65 874.82 L957.83 874.82 L957.83 881.12 L949.65 881.12 L949.65 874.82M949.65 877.97 L957.83 877.97M953.80 872.30 L953.80 883.01 L955.31 884.27 L959.71 884.27 L959.71 882.38" fill="none" stroke="#1a1aa0" stroke-width="1.1" stroke-linecap="square"/><path d="M962.69 873.56 L963.57 874.82M962.44 877.34 L963.57 878.60M962.44 883.64 L963.95 880.49M965.58 873.31 L974.39 873.31M965.83 873.31 L965.83 879.86 L964.57 884.27M967.72 874.82 L972.75 874.82 L972.75 879.23 L967.72 879.23 L967.72 874.82M967.72 877.09 L972.75 877.09M970.24 879.23 L970.24 884.27M967.72 881.12 L966.84 883.01M972.75 881.12 L973.64 883.01" fill="none" stroke="#1a1aa0" stroke-width="1.1" stroke-linecap="square"/><text x="1054" y="860" font-family="Liberation Serif" font-weight="bold" font-size="11" fill="#1a1aa0">RD1</text><path d="M1020.05 881.90 L1020.05 885.10M1024.89 881.90 L1024.89 883.90M1021.50 882.70 L1026.34 882.70M1024.89 883.10 L1024.89 883.90M1021.50 881.90 L1026.34 881.90M1021.50 883.10 L1021.50 883.90" fill="none" stroke="#303030" stroke-width="1.6" stroke-linecap="square"/><path d="M1028.14 881.98 L1032.02 881.98M1030.08 881.50 L1030.08 883.30M1028.43 881.58 L1029.02 881.90M1031.73 881.58 L1031.14 881.90M1028.14 882.70 L1032.02 883.30M1032.02 882.70 L1028.14 883.30M1028.14 883.90 L1032.50 883.90M1030.56 883.50 L1028.63 885.30M1029.11 884.38 L1032.02 885.30M1033.47 881.50 L1032.69 882.70M1032.98 882.30 L1037.15 882.30M1035.89 882.30 L1033.47 885.30M1033.47 883.10 L1037.15 885.30" fill="none" stroke="#303030" stroke-width="1.6" stroke-linecap="square"/><path d="M1038.66 881.90 L1048.34 881.90M1042.05 883.10 L1042.05 883.90M1046.89 883.10 L1046.89 885.50M1039.63 884.30 L1048.34 884.30M1039.63 881.90 L1043.02 881.90M1043.50 885.10 L1047.37 885.10" fill="none" stroke="#303030" stroke-width="1.6" stroke-linecap="square"/><path d="M1054.50 882.70 L1059.34 882.70M1054.50 881.50 L1054.50 885.50M1054.50 881.90 L1054.50 885.10M1054.50 881.90 L1054.50 883.90M1051.11 881.90 L1051.11 885.50M1057.89 881.50 L1057.89 885.50" fill="none" stroke="#303030" stroke-width="1.6" stroke-linecap="square"/></svg><svg class="a" style="left:0;top:0" width="1854" height="927" viewBox="0 0 1854 927"><defs><pattern id="hm" patternUnits="userSpaceOnUse" width="6" height="8" patternTransform="rotate(-45)"><rect width="6" height="8" fill="#000"/><rect x="0" y="0" width="1.05" height="8" fill="#ff00ff"/></pattern><pattern id="dg" patternUnits="userSpaceOnUse" width="3.4" height="3.4"><circle cx="1.7" cy="1.7" r="0.6" fill="#a0a0c8"/></pattern><pattern id="dr" patternUnits="userSpaceOnUse" width="3.4" height="3.4"><circle cx="1.7" cy="1.7" r="0.6" fill="#c04040"/></pattern><clipPath id="bd"><rect x="1081" y="282" width="730" height="300" rx="9"/></clipPath></defs><rect x="1074" y="6" width="742" height="877" fill="#6d6866"/><rect x="1080.6" y="281.2" width="731.4" height="301.6" rx="9" fill="#000" stroke="#ff00ff" stroke-width="1.2" stroke-dasharray="6 3"/><g clip-path="url(#bd)"><rect x="1224.2" y="297.2" width="105.6" height="109.1" fill="url(#hm)" stroke="#ff00ff" stroke-width="1"/><rect x="1336.3" y="297.2" width="105.6" height="109.1" fill="url(#hm)" stroke="#ff00ff" stroke-width="1"/><rect x="1221.0" y="421.4" width="32.7" height="15.4" fill="url(#hm)" stroke="#ff00ff" stroke-width="1"/><rect x="1277.5" y="421.4" width="33.2" height="15.4" fill="url(#hm)" stroke="#ff00ff" stroke-width="1"/><rect x="1264.3" y="522.3" width="59.5" height="57.0" fill="url(#hm)" stroke="#ff00ff" stroke-width="1"/><rect x="1336.0" y="522.3" width="59.5" height="57.0" fill="url(#hm)" stroke="#ff00ff" stroke-width="1"/><rect x="1502.0" y="287.0" width="42.0" height="41.6" fill="url(#hm)" stroke="#ff00ff" stroke-width="1"/><rect x="1590.7" y="288.1" width="73.9" height="73.3" fill="url(#hm)" stroke="#ff00ff" stroke-width="1"/><rect x="1477.0" y="492.0" width="93.3" height="85.5" fill="url(#hm)" stroke="#ff00ff" stroke-width="1"/><rect x="1576.8" y="466.9" width="110.1" height="105.2" fill="url(#hm)" stroke="#ff00ff" stroke-width="1"/><polygon points="1083.8,414.0 1100.0,414.0 1100.0,459.3 1108.8,468.0 1108.8,497.3 1121.7,504.2 1121.7,511.0 1083.8,511.0" fill="#ff0000" /><polyline points="1093.0,388.0 1103.0,378.0 1175.0,377.0 1186.0,372.0" fill="none" stroke="#ff0000" stroke-width="1.6" stroke-linejoin="round" stroke-linecap="round"/><polyline points="1186.0,368.5 1325.0,368.5 1332.0,376.0 1333.0,386.0" fill="none" stroke="#ff0000" stroke-width="6.5" stroke-linejoin="round" stroke-linecap="round"/><polyline points="1135.0,485.0 1145.0,495.6 1160.5,495.6 1169.2,506.0 1169.0,515.0" fill="none" stroke="#ff0000" stroke-width="1.6" stroke-linejoin="round" stroke-linecap="round"/><polyline points="1115.7,538.5 1127.0,546.0 1157.0,546.0 1165.0,538.0" fill="none" stroke="#ff0000" stroke-width="1.6" stroke-linejoin="round" stroke-linecap="round"/><polyline points="1183.0,500.0 1187.0,502.0 1187.0,535.0 1194.0,540.0" fill="none" stroke="#ff0000" stroke-width="4.5" stroke-linejoin="round" stroke-linecap="round"/><polyline points="1233.0,569.8 1241.7,578.4 1266.0,578.4" fill="none" stroke="#ff0000" stroke-width="1.6" stroke-linejoin="round" stroke-linecap="round"/><polygon points="1255.5,430.0 1266.0,430.0 1266.0,456.0 1255.5,456.0" fill="#ff0000" /><polyline points="1460.0,318.0 1411.5,366.0 1411.5,453.0 1425.0,470.0" fill="none" stroke="#ff0000" stroke-width="1.6" stroke-linejoin="round" stroke-linecap="round"/><polyline points="1432.7,400.0 1432.7,416.0" fill="none" stroke="#ff0000" stroke-width="4" stroke-linejoin="round" stroke-linecap="round"/><polygon points="1425.0,423.0 1440.0,423.0 1433.0,415.0" fill="#ff0000" /><polygon points="1282.0,403.0 1362.0,403.0 1362.0,410.0 1282.0,410.0" fill="#ff0000" /><polyline points="1230.0,412.0 1262.0,412.0 1270.0,404.0" fill="none" stroke="#ff0000" stroke-width="5" stroke-linejoin="round" stroke-linecap="round"/><polygon points="1255.0,418.0 1272.0,418.0 1272.0,460.0 1255.0,460.0" fill="#ff0000" /><polyline points="1205.0,410.0 1207.0,401.0 1216.0,399.0 1235.0,399.0" fill="none" stroke="#ff0000" stroke-width="2" stroke-linejoin="round" stroke-linecap="round"/><polygon points="1312.0,412.0 1352.0,412.0 1352.0,471.0 1312.0,471.0" fill="#ff0000" /><polyline points="1360.5,455.8 1398.5,489.0" fill="none" stroke="#ff0000" stroke-width="5" stroke-linejoin="round" stroke-linecap="round"/><polygon points="1262.0,456.0 1410.0,456.0 1410.0,472.0 1300.0,472.0 1284.0,474.0 1275.0,480.0 1272.0,492.0 1262.0,492.0" fill="#ff0000" /><polyline points="1268.0,480.0 1268.0,556.0 1290.0,578.0 1330.0,578.0" fill="none" stroke="#ff0000" stroke-width="3" stroke-linejoin="round" stroke-linecap="round"/><polyline points="1275.0,482.0 1285.0,475.0 1395.0,475.0 1406.0,490.0 1406.7,550.8 1392.9,576.7" fill="none" stroke="#ff0000" stroke-width="3.5" stroke-linejoin="round" stroke-linecap="round"/><polyline points="1360.0,451.0 1410.0,500.0" fill="none" stroke="#ff0000" stroke-width="5" stroke-linejoin="round" stroke-linecap="round"/><polygon points="1439.5,450.7 1450.0,450.7 1450.0,490.0 1439.5,490.0" fill="#ff0000" /><polygon points="1439.5,520.0 1450.0,520.0 1450.0,560.0 1439.5,560.0" fill="#ff0000" /><polyline points="1395.0,570.0 1420.0,575.0 1450.0,575.0" fill="none" stroke="#ff0000" stroke-width="2" stroke-linejoin="round" stroke-linecap="round"/><polyline points="1441.0,336.0 1477.0,299.6 1505.0,299.6" fill="none" stroke="#ff0000" stroke-width="2" stroke-linejoin="round" stroke-linecap="round"/><polyline points="1454.0,480.0 1454.0,349.0 1490.7,312.4 1517.7,312.4" fill="none" stroke="#ff0000" stroke-width="2.2" stroke-linejoin="round" stroke-linecap="round"/><rect x="1503.0" y="336.0" width="2.0" height="10.0" fill="#ff0000" /><polyline points="1480.0,332.9 1590.0,332.9" fill="none" stroke="#ff0000" stroke-width="2.5" stroke-linejoin="round" stroke-linecap="round"/><polyline points="1542.0,357.0 1564.8,365.0 1580.0,368.0 1590.0,376.0 1608.3,373.6" fill="none" stroke="#ff0000" stroke-width="1.8" stroke-linejoin="round" stroke-linecap="round"/><polygon points="1655.4,325.3 1680.0,325.3 1680.0,353.3 1655.4,353.3" fill="#ff0000" /><polyline points="1476.8,376.2 1567.5,376.2 1584.3,366.5 1603.7,373.6" fill="none" stroke="#ff0000" stroke-width="1.5" stroke-linejoin="round" stroke-linecap="round"/><polyline points="1479.4,403.4 1497.6,405.3 1532.5,442.9 1540.0,460.0" fill="none" stroke="#ff0000" stroke-width="1.5" stroke-linejoin="round" stroke-linecap="round"/><polyline points="1476.8,422.0 1476.8,480.0" fill="none" stroke="#ff0000" stroke-width="2" stroke-linejoin="round" stroke-linecap="round"/><polygon points="1441.0,430.0 1474.5,430.0 1474.5,490.0 1441.0,490.0" fill="#ff0000" /><polygon points="1441.0,497.0 1472.8,497.0 1472.8,551.0 1441.0,551.0" fill="#ff0000" /><polyline points="1505.0,430.0 1505.0,475.0 1520.0,480.0" fill="none" stroke="#ff0000" stroke-width="2" stroke-linejoin="round" stroke-linecap="round"/><polyline points="1517.7,480.6 1505.5,495.0 1505.5,551.0" fill="none" stroke="#ff0000" stroke-width="6" stroke-linejoin="round" stroke-linecap="round"/><polyline points="1549.5,480.6 1547.0,495.0 1547.0,551.0 1552.0,554.0 1583.0,554.0" fill="none" stroke="#ff0000" stroke-width="6" stroke-linejoin="round" stroke-linecap="round"/><polyline points="1441.0,564.0 1600.0,564.0" fill="none" stroke="#ff0000" stroke-width="1.5" stroke-linejoin="round" stroke-linecap="round"/><polyline points="1516.0,575.5 1605.0,575.5" fill="none" stroke="#ff0000" stroke-width="1.8" stroke-linejoin="round" stroke-linecap="round"/><polyline points="1605.7,454.0 1605.7,571.5" fill="none" stroke="#ff0000" stroke-width="1.6" stroke-linejoin="round" stroke-linecap="round"/><polygon points="1675.0,501.0 1700.0,501.0 1700.0,533.5 1675.0,533.5" fill="#ff0000" /><polyline points="1560.0,555.5 1588.0,555.5" fill="none" stroke="#ff0000" stroke-width="6" stroke-linejoin="round" stroke-linecap="round"/><polyline points="1584.0,547.5 1584.0,563.3" fill="none" stroke="#ff0000" stroke-width="4" stroke-linejoin="round" stroke-linecap="round"/><polyline points="1560.0,552.0 1590.0,552.0" fill="none" stroke="#ff0000" stroke-width="5" stroke-linejoin="round" stroke-linecap="round"/><polygon points="1771.4,287.0 1806.0,287.0 1809.2,292.0 1809.2,318.0 1790.0,318.0 1790.0,377.0 1771.4,377.0 1771.4,353.4 1655.3,353.4 1655.3,330.0 1668.0,323.0 1760.0,323.0 1771.4,318.0" fill="#ff0000" /><polygon points="1760.0,377.0 1790.0,377.0 1790.0,400.0 1775.0,420.0 1760.0,420.0" fill="#ff0000" /><polygon points="1769.5,350.8 1789.0,350.8 1789.0,415.5 1775.0,421.0 1769.5,421.0" fill="#ff0000" /><polygon points="1735.0,340.0 1769.5,340.0 1769.5,353.0 1735.0,353.0" fill="#ff0000" /><polyline points="1661.6,383.0 1661.6,372.0 1677.8,365.0" fill="none" stroke="#ff0000" stroke-width="1.3" stroke-linejoin="round" stroke-linecap="round"/><polyline points="1681.0,402.0 1681.0,440.0" fill="none" stroke="#ff0000" stroke-width="1.3" stroke-linejoin="round" stroke-linecap="round"/><polyline points="1700.0,415.0 1760.0,412.0 1775.0,405.0" fill="none" stroke="#ff0000" stroke-width="1.3" stroke-linejoin="round" stroke-linecap="round"/><polygon points="1660.0,500.0 1684.0,500.0 1684.0,560.0 1660.0,560.0" fill="#ff0000" /><polyline points="1637.0,452.0 1655.0,452.0 1680.0,432.0 1700.0,430.0" fill="none" stroke="#ff0000" stroke-width="2" stroke-linejoin="round" stroke-linecap="round"/><polyline points="1126.5,317.5 1116.4,317.5 1105.5,328.0 1105.5,368.0 1114.7,377.0 1116.4,396.0 1117.0,420.0 1123.0,438.0 1123.0,455.0" fill="none" stroke="#0000ff" stroke-width="5" stroke-linejoin="round" stroke-linecap="round"/><polyline points="1159.0,318.0 1170.0,329.0 1186.0,334.0" fill="none" stroke="#0000ff" stroke-width="4" stroke-linejoin="round" stroke-linecap="round"/><polyline points="1127.0,360.0 1164.0,396.0 1165.0,420.0 1165.0,455.0 1174.4,455.0 1202.0,481.8" fill="none" stroke="#0000ff" stroke-width="4.5" stroke-linejoin="round" stroke-linecap="round"/><polyline points="1159.0,360.0 1170.0,351.0 1186.0,351.0" fill="none" stroke="#0000ff" stroke-width="4" stroke-linejoin="round" stroke-linecap="round"/><polyline points="1186.0,318.0 1190.0,303.0 1222.0,303.0 1230.0,304.0" fill="none" stroke="#0000ff" stroke-width="6" stroke-linejoin="round" stroke-linecap="round"/><polyline points="1206.0,320.0 1210.0,308.0" fill="none" stroke="#0000ff" stroke-width="6" stroke-linejoin="round" stroke-linecap="round"/><polyline points="1117.0,396.0 1122.0,405.0 1123.0,420.0" fill="none" stroke="#0000ff" stroke-width="5" stroke-linejoin="round" stroke-linecap="round"/><polygon points="1189.0,412.0 1216.0,412.0 1220.0,418.0 1220.0,456.0 1198.0,456.0 1189.0,448.0" fill="#0000ff" /><polyline points="1093.3,538.7 1093.3,554.2 1101.9,562.9 1140.0,562.9" fill="none" stroke="#0000ff" stroke-width="2.2" stroke-linejoin="round" stroke-linecap="round"/><rect x="1165.4" y="476.2" width="5.2" height="3.5" fill="#0000ff" /><rect x="1165.4" y="483.3" width="5.2" height="3.5" fill="#0000ff" /><rect x="1185.4" y="476.2" width="5.2" height="3.5" fill="#0000ff" /><rect x="1185.4" y="483.3" width="5.2" height="3.5" fill="#0000ff" /><polyline points="1122.6,455.0 1134.7,455.0 1153.7,481.8 1153.7,499.0 1146.8,507.7 1145.0,531.8 1141.6,542.2 1141.6,563.0" fill="none" stroke="#0000ff" stroke-width="4.5" stroke-linejoin="round" stroke-linecap="round"/><polyline points="1169.0,515.0 1201.0,515.0" fill="none" stroke="#0000ff" stroke-width="4.5" stroke-linejoin="round" stroke-linecap="round"/><polyline points="1169.0,538.0 1194.0,538.0" fill="none" stroke="#0000ff" stroke-width="4.5" stroke-linejoin="round" stroke-linecap="round"/><polyline points="1146.0,508.0 1146.0,531.0" fill="none" stroke="#0000ff" stroke-width="4" stroke-linejoin="round" stroke-linecap="round"/><rect x="1218.4" y="514.7" width="5.2" height="4.2" fill="#0000ff" /><rect x="1218.4" y="523.1" width="5.2" height="4.2" fill="#0000ff" /><rect x="1235.4" y="514.7" width="5.2" height="4.2" fill="#0000ff" /><rect x="1235.4" y="523.1" width="5.2" height="4.2" fill="#0000ff" /><polyline points="1221.0,495.6 1221.0,474.9 1229.6,466.0 1255.5,466.0 1266.0,466.0" fill="none" stroke="#0000ff" stroke-width="4.5" stroke-linejoin="round" stroke-linecap="round"/><polyline points="1245.0,503.0 1244.2,483.5 1253.7,474.9 1266.0,464.5" fill="none" stroke="#0000ff" stroke-width="4.5" stroke-linejoin="round" stroke-linecap="round"/><polyline points="1245.0,503.0 1244.2,504.0 1265.0,526.6" fill="none" stroke="#0000ff" stroke-width="4.5" stroke-linejoin="round" stroke-linecap="round"/><polyline points="1199.0,568.0 1219.0,568.0 1266.0,568.0" fill="none" stroke="#0000ff" stroke-width="2" stroke-linejoin="round" stroke-linecap="round"/><rect x="1299.0" y="300.5" width="26.0" height="8.0" fill="#0000ff" /><rect x="1325.0" y="300.0" width="20.0" height="9.0" fill="#0000ff" /><rect x="1228.0" y="300.5" width="24.0" height="8.0" fill="#0000ff" /><rect x="1410.0" y="300.5" width="26.0" height="8.0" fill="#0000ff" /><rect x="1290.7" y="319.7" width="5.2" height="4.9" fill="#0000ff" /><rect x="1290.7" y="329.4" width="5.2" height="4.9" fill="#0000ff" /><rect x="1303.6" y="319.7" width="5.2" height="4.9" fill="#0000ff" /><rect x="1303.6" y="329.4" width="5.2" height="4.9" fill="#0000ff" /><rect x="1316.4" y="319.7" width="5.2" height="4.9" fill="#0000ff" /><rect x="1316.4" y="329.4" width="5.2" height="4.9" fill="#0000ff" /><rect x="1230.4" y="318.2" width="5.2" height="4.6" fill="#0000ff" /><rect x="1230.4" y="327.2" width="5.2" height="4.6" fill="#0000ff" /><rect x="1230.4" y="342.2" width="5.2" height="4.6" fill="#0000ff" /><rect x="1230.4" y="351.2" width="5.2" height="4.6" fill="#0000ff" /><polyline points="1233.0,332.0 1233.0,343.0" fill="none" stroke="#0000ff" stroke-width="2.5" stroke-linejoin="round" stroke-linecap="round"/><polyline points="1233.0,360.0 1245.0,366.0 1245.0,420.0 1300.0,420.0" fill="none" stroke="#0000ff" stroke-width="3.5" stroke-linejoin="round" stroke-linecap="round"/><polyline points="1304.5,420.0 1304.5,355.5 1316.0,343.0" fill="none" stroke="#0000ff" stroke-width="1" stroke-linejoin="round" stroke-linecap="round"/><polyline points="1416.5,304.6 1417.5,335.0 1364.0,388.0 1364.0,419.0" fill="none" stroke="#0000ff" stroke-width="5.5" stroke-linejoin="round" stroke-linecap="round"/><polyline points="1432.7,400.0 1398.0,400.0 1393.4,406.0 1393.4,415.0" fill="none" stroke="#0000ff" stroke-width="1.6" stroke-linejoin="round" stroke-linecap="round"/><polyline points="1410.4,435.6 1418.7,416.6 1450.0,416.6" fill="none" stroke="#0000ff" stroke-width="1.8" stroke-linejoin="round" stroke-linecap="round"/><rect x="1326.0" y="384.5" width="13.0" height="6.0" fill="#0000ff" /><rect x="1330.0" y="390.0" width="6.0" height="21.0" fill="#0000ff" /><rect x="1243.0" y="412.0" width="57.0" height="6.0" fill="#0000ff" /><polygon points="1213.0,436.0 1258.0,436.0 1258.0,458.0 1213.0,458.0" fill="#0000ff" /><polygon points="1268.0,436.0 1313.0,436.0 1313.0,458.0 1268.0,458.0" fill="#0000ff" /><polyline points="1232.0,428.0 1238.0,418.0 1244.0,412.0 1300.0,412.0 1306.0,418.0 1306.0,428.0" fill="none" stroke="#0000ff" stroke-width="3" stroke-linejoin="round" stroke-linecap="round"/><rect x="1327.3" y="410.7" width="10.7" height="5.9" fill="#0000ff" /><rect x="1328.5" y="428.0" width="35.5" height="6.4" fill="#0000ff" /><polygon points="1331.0,441.0 1401.0,441.0 1401.0,458.0 1331.0,458.0" fill="#0000ff" /><polygon points="1383.0,415.4 1401.0,415.4 1401.0,442.7 1383.0,442.7" fill="#0000ff" /><polygon points="1418.7,423.7 1450.0,423.7 1450.0,444.0 1418.7,444.0" fill="#0000ff" /><polyline points="1418.0,459.0 1418.0,490.0" fill="none" stroke="#0000ff" stroke-width="6" stroke-linejoin="round" stroke-linecap="round"/><polyline points="1410.0,440.0 1402.0,470.0 1395.0,520.0" fill="none" stroke="#0000ff" stroke-width="1.6" stroke-linejoin="round" stroke-linecap="round"/><rect x="1273.9" y="460.2" width="4.2" height="3.2" fill="#0000ff" /><rect x="1273.9" y="466.6" width="4.2" height="3.2" fill="#0000ff" /><rect x="1281.9" y="460.2" width="4.2" height="3.2" fill="#0000ff" /><rect x="1281.9" y="466.6" width="4.2" height="3.2" fill="#0000ff" /><rect x="1289.9" y="460.2" width="4.2" height="3.2" fill="#0000ff" /><rect x="1289.9" y="466.6" width="4.2" height="3.2" fill="#0000ff" /><rect x="1297.9" y="460.2" width="4.2" height="3.2" fill="#0000ff" /><rect x="1297.9" y="466.6" width="4.2" height="3.2" fill="#0000ff" /><rect x="1307.9" y="460.2" width="4.2" height="3.2" fill="#0000ff" /><rect x="1307.9" y="466.6" width="4.2" height="3.2" fill="#0000ff" /><rect x="1317.9" y="460.2" width="4.2" height="3.2" fill="#0000ff" /><rect x="1317.9" y="466.6" width="4.2" height="3.2" fill="#0000ff" /><rect x="1317.4" y="474.0" width="4.7" height="3.2" fill="#0000ff" /><rect x="1317.4" y="480.4" width="4.7" height="3.2" fill="#0000ff" /><rect x="1325.2" y="474.0" width="4.7" height="3.2" fill="#0000ff" /><rect x="1325.2" y="480.4" width="4.7" height="3.2" fill="#0000ff" /><rect x="1335.1" y="471.2" width="4.7" height="3.2" fill="#0000ff" /><rect x="1335.1" y="477.6" width="4.7" height="3.2" fill="#0000ff" /><rect x="1370.9" y="471.2" width="4.7" height="3.2" fill="#0000ff" /><rect x="1370.9" y="477.6" width="4.7" height="3.2" fill="#0000ff" /><rect x="1381.2" y="471.2" width="4.7" height="3.2" fill="#0000ff" /><rect x="1381.2" y="477.6" width="4.7" height="3.2" fill="#0000ff" /><rect x="1390.7" y="471.2" width="4.7" height="3.2" fill="#0000ff" /><rect x="1390.7" y="477.6" width="4.7" height="3.2" fill="#0000ff" /><rect x="1281.2" y="480.1" width="4.7" height="3.2" fill="#0000ff" /><rect x="1281.2" y="486.5" width="4.7" height="3.2" fill="#0000ff" /><rect x="1288.5" y="480.1" width="4.7" height="3.2" fill="#0000ff" /><rect x="1288.5" y="486.5" width="4.7" height="3.2" fill="#0000ff" /><rect x="1317.4" y="491.2" width="4.7" height="3.2" fill="#0000ff" /><rect x="1317.4" y="497.6" width="4.7" height="3.2" fill="#0000ff" /><rect x="1325.2" y="491.2" width="4.7" height="3.2" fill="#0000ff" /><rect x="1325.2" y="497.6" width="4.7" height="3.2" fill="#0000ff" /><rect x="1272.5" y="508.5" width="4.7" height="3.2" fill="#0000ff" /><rect x="1272.5" y="514.9" width="4.7" height="3.2" fill="#0000ff" /><rect x="1282.9" y="508.5" width="4.7" height="3.2" fill="#0000ff" /><rect x="1282.9" y="514.9" width="4.7" height="3.2" fill="#0000ff" /><rect x="1293.2" y="508.5" width="4.7" height="3.2" fill="#0000ff" /><rect x="1293.2" y="514.9" width="4.7" height="3.2" fill="#0000ff" /><rect x="1304.5" y="506.8" width="4.7" height="3.2" fill="#0000ff" /><rect x="1304.5" y="513.2" width="4.7" height="3.2" fill="#0000ff" /><rect x="1310.5" y="506.8" width="4.7" height="3.2" fill="#0000ff" /><rect x="1310.5" y="513.2" width="4.7" height="3.2" fill="#0000ff" /><rect x="1317.4" y="506.8" width="4.7" height="3.2" fill="#0000ff" /><rect x="1317.4" y="513.2" width="4.7" height="3.2" fill="#0000ff" /><rect x="1325.2" y="506.8" width="4.7" height="3.2" fill="#0000ff" /><rect x="1325.2" y="513.2" width="4.7" height="3.2" fill="#0000ff" /><rect x="1365.7" y="486.2" width="4.7" height="3.2" fill="#0000ff" /><rect x="1365.7" y="492.6" width="4.7" height="3.2" fill="#0000ff" /><rect x="1345.5" y="484.5" width="6.2" height="4.9" fill="#0000ff" /><rect x="1345.5" y="494.2" width="6.2" height="4.9" fill="#0000ff" /><rect x="1356.3" y="484.5" width="6.2" height="4.9" fill="#0000ff" /><rect x="1356.3" y="494.2" width="6.2" height="4.9" fill="#0000ff" /><rect x="1300.0" y="471.0" width="1.2" height="4.0" fill="#0000ff" /><rect x="1300.0" y="494.0" width="1.2" height="4.0" fill="#0000ff" /><rect x="1303.6" y="471.0" width="1.2" height="4.0" fill="#0000ff" /><rect x="1303.6" y="494.0" width="1.2" height="4.0" fill="#0000ff" /><rect x="1307.2" y="471.0" width="1.2" height="4.0" fill="#0000ff" /><rect x="1307.2" y="494.0" width="1.2" height="4.0" fill="#0000ff" /><rect x="1310.8" y="471.0" width="1.2" height="4.0" fill="#0000ff" /><rect x="1310.8" y="494.0" width="1.2" height="4.0" fill="#0000ff" /><polyline points="1340.0,468.0 1340.0,485.0" fill="none" stroke="#0000ff" stroke-width="1" stroke-linejoin="round" stroke-linecap="round"/><polyline points="1350.0,476.0 1365.0,476.0" fill="none" stroke="#0000ff" stroke-width="1" stroke-linejoin="round" stroke-linecap="round"/><polyline points="1300.0,507.0 1340.0,507.0 1400.0,505.0" fill="none" stroke="#0000ff" stroke-width="1.1" stroke-linejoin="round" stroke-linecap="round"/><polyline points="1260.0,538.6 1380.0,538.6 1415.3,502.5 1415.3,474.9" fill="none" stroke="#0000ff" stroke-width="5.5" stroke-linejoin="round" stroke-linecap="round"/><polyline points="1260.0,562.6 1365.3,562.6" fill="none" stroke="#0000ff" stroke-width="5" stroke-linejoin="round" stroke-linecap="round"/><polyline points="1366.0,563.0 1380.0,563.0 1415.0,595.0" fill="none" stroke="#0000ff" stroke-width="1.6" stroke-linejoin="round" stroke-linecap="round"/><polyline points="1420.0,540.0 1420.0,520.0 1440.0,500.0" fill="none" stroke="#0000ff" stroke-width="5.5" stroke-linejoin="round" stroke-linecap="round"/><polyline points="1380.0,580.0 1450.0,565.0" fill="none" stroke="#0000ff" stroke-width="1.5" stroke-linejoin="round" stroke-linecap="round"/><polyline points="1461.0,350.0 1461.0,420.0 1470.0,430.0" fill="none" stroke="#0000ff" stroke-width="2" stroke-linejoin="round" stroke-linecap="round"/><rect x="1507.7" y="301.7" width="5.2" height="4.2" fill="#0000ff" /><rect x="1507.7" y="310.1" width="5.2" height="4.2" fill="#0000ff" /><rect x="1537.9" y="301.7" width="5.2" height="4.2" fill="#0000ff" /><rect x="1537.9" y="310.1" width="5.2" height="4.2" fill="#0000ff" /><polyline points="1523.0,300.0 1535.0,290.0 1560.0,290.0" fill="none" stroke="#0000ff" stroke-width="2" stroke-linejoin="round" stroke-linecap="round"/><rect x="1483.9" y="334.7" width="4.2" height="3.5" fill="#0000ff" /><rect x="1483.9" y="341.8" width="4.2" height="3.5" fill="#0000ff" /><rect x="1501.4" y="333.7" width="5.2" height="4.2" fill="#0000ff" /><rect x="1501.4" y="342.1" width="5.2" height="4.2" fill="#0000ff" /><polygon points="1470.0,333.0 1478.0,333.0 1478.0,343.0 1470.0,343.0" fill="#0000ff" /><rect x="1459.9" y="335.2" width="4.2" height="3.2" fill="#0000ff" /><rect x="1459.9" y="341.6" width="4.2" height="3.2" fill="#0000ff" /><rect x="1465.9" y="352.2" width="4.2" height="3.2" fill="#0000ff" /><rect x="1465.9" y="358.6" width="4.2" height="3.2" fill="#0000ff" /><rect x="1476.9" y="353.2" width="4.2" height="3.2" fill="#0000ff" /><rect x="1476.9" y="359.6" width="4.2" height="3.2" fill="#0000ff" /><rect x="1511.4" y="353.2" width="5.2" height="4.6" fill="#0000ff" /><rect x="1511.4" y="362.2" width="5.2" height="4.6" fill="#0000ff" /><rect x="1524.4" y="353.2" width="5.2" height="4.6" fill="#0000ff" /><rect x="1524.4" y="362.2" width="5.2" height="4.6" fill="#0000ff" /><polyline points="1475.0,353.0 1500.0,363.0 1510.0,368.0 1540.0,368.0" fill="none" stroke="#0000ff" stroke-width="1.2" stroke-linejoin="round" stroke-linecap="round"/><rect x="1553.7" y="285.7" width="9.2" height="6.9" fill="#0000ff" /><rect x="1553.7" y="299.4" width="9.2" height="6.9" fill="#0000ff" /><rect x="1567.2" y="285.7" width="9.2" height="6.9" fill="#0000ff" /><rect x="1567.2" y="299.4" width="9.2" height="6.9" fill="#0000ff" /><rect x="1580.4" y="286.7" width="7.2" height="5.6" fill="#0000ff" /><rect x="1580.4" y="297.7" width="7.2" height="5.6" fill="#0000ff" /><rect x="1555.0" y="310.4" width="7.2" height="5.6" fill="#0000ff" /><rect x="1555.0" y="321.4" width="7.2" height="5.6" fill="#0000ff" /><rect x="1569.5" y="310.5" width="8.2" height="6.3" fill="#0000ff" /><rect x="1569.5" y="322.8" width="8.2" height="6.3" fill="#0000ff" /><polyline points="1558.3,323.0 1572.4,314.5" fill="none" stroke="#0000ff" stroke-width="2" stroke-linejoin="round" stroke-linecap="round"/><polyline points="1574.5,327.5 1590.7,315.6" fill="none" stroke="#0000ff" stroke-width="2" stroke-linejoin="round" stroke-linecap="round"/><polyline points="1563.7,339.3 1575.0,328.0" fill="none" stroke="#0000ff" stroke-width="2" stroke-linejoin="round" stroke-linecap="round"/><polyline points="1480.0,336.0 1570.0,336.0" fill="none" stroke="#0000ff" stroke-width="1.6" stroke-linejoin="round" stroke-linecap="round"/><rect x="1582.9" y="343.2" width="4.2" height="4.6" fill="#0000ff" /><rect x="1582.9" y="352.2" width="4.2" height="4.6" fill="#0000ff" /><rect x="1602.5" y="389.8" width="8.5" height="4.0" fill="#0000ff" /><rect x="1602.5" y="396.8" width="8.5" height="4.0" fill="#0000ff" /><rect x="1602.5" y="429.3" width="8.5" height="4.0" fill="#0000ff" /><rect x="1602.5" y="436.3" width="8.5" height="4.0" fill="#0000ff" /><rect x="1482.2" y="379.2" width="4.7" height="3.5" fill="#0000ff" /><rect x="1482.2" y="386.3" width="4.7" height="3.5" fill="#0000ff" /><rect x="1490.1" y="379.2" width="4.7" height="3.5" fill="#0000ff" /><rect x="1490.1" y="386.3" width="4.7" height="3.5" fill="#0000ff" /><rect x="1497.2" y="379.2" width="4.7" height="3.5" fill="#0000ff" /><rect x="1497.2" y="386.3" width="4.7" height="3.5" fill="#0000ff" /><rect x="1504.2" y="379.2" width="4.7" height="3.5" fill="#0000ff" /><rect x="1504.2" y="386.3" width="4.7" height="3.5" fill="#0000ff" /><rect x="1511.4" y="379.2" width="4.7" height="3.5" fill="#0000ff" /><rect x="1511.4" y="386.3" width="4.7" height="3.5" fill="#0000ff" /><rect x="1518.6" y="379.2" width="4.7" height="3.5" fill="#0000ff" /><rect x="1518.6" y="386.3" width="4.7" height="3.5" fill="#0000ff" /><rect x="1525.7" y="379.2" width="4.7" height="3.5" fill="#0000ff" /><rect x="1525.7" y="386.3" width="4.7" height="3.5" fill="#0000ff" /><rect x="1532.8" y="379.2" width="4.7" height="3.5" fill="#0000ff" /><rect x="1532.8" y="386.3" width="4.7" height="3.5" fill="#0000ff" /><rect x="1539.9" y="379.2" width="4.7" height="3.5" fill="#0000ff" /><rect x="1539.9" y="386.3" width="4.7" height="3.5" fill="#0000ff" /><rect x="1547.1" y="379.2" width="4.7" height="3.5" fill="#0000ff" /><rect x="1547.1" y="386.3" width="4.7" height="3.5" fill="#0000ff" /><rect x="1554.2" y="379.2" width="4.7" height="3.5" fill="#0000ff" /><rect x="1554.2" y="386.3" width="4.7" height="3.5" fill="#0000ff" /><rect x="1561.2" y="379.2" width="4.7" height="3.5" fill="#0000ff" /><rect x="1561.2" y="386.3" width="4.7" height="3.5" fill="#0000ff" /><rect x="1569.9" y="378.7" width="6.2" height="4.9" fill="#0000ff" /><rect x="1569.9" y="388.4" width="6.2" height="4.9" fill="#0000ff" /><rect x="1519.0" y="393.0" width="1.4" height="5.0" fill="#0000ff" /><rect x="1519.0" y="424.7" width="1.4" height="4.3" fill="#0000ff" /><rect x="1523.4" y="393.0" width="1.4" height="5.0" fill="#0000ff" /><rect x="1523.4" y="424.7" width="1.4" height="4.3" fill="#0000ff" /><rect x="1527.8" y="393.0" width="1.4" height="5.0" fill="#0000ff" /><rect x="1527.8" y="424.7" width="1.4" height="4.3" fill="#0000ff" /><rect x="1532.2" y="393.0" width="1.4" height="5.0" fill="#0000ff" /><rect x="1532.2" y="424.7" width="1.4" height="4.3" fill="#0000ff" /><rect x="1536.6" y="393.0" width="1.4" height="5.0" fill="#0000ff" /><rect x="1536.6" y="424.7" width="1.4" height="4.3" fill="#0000ff" /><rect x="1541.0" y="393.0" width="1.4" height="5.0" fill="#0000ff" /><rect x="1541.0" y="424.7" width="1.4" height="4.3" fill="#0000ff" /><rect x="1545.4" y="393.0" width="1.4" height="5.0" fill="#0000ff" /><rect x="1545.4" y="424.7" width="1.4" height="4.3" fill="#0000ff" /><rect x="1549.8" y="393.0" width="1.4" height="5.0" fill="#0000ff" /><rect x="1549.8" y="424.7" width="1.4" height="4.3" fill="#0000ff" /><rect x="1507.9" y="411.7" width="5.2" height="3.5" fill="#0000ff" /><rect x="1507.9" y="418.8" width="5.2" height="3.5" fill="#0000ff" /><rect x="1507.9" y="431.1" width="5.2" height="3.5" fill="#0000ff" /><rect x="1507.9" y="438.2" width="5.2" height="3.5" fill="#0000ff" /><rect x="1498.8" y="444.1" width="5.2" height="3.5" fill="#0000ff" /><rect x="1498.8" y="451.2" width="5.2" height="3.5" fill="#0000ff" /><rect x="1519.4" y="445.4" width="5.2" height="3.5" fill="#0000ff" /><rect x="1519.4" y="452.5" width="5.2" height="3.5" fill="#0000ff" /><rect x="1531.9" y="432.4" width="5.2" height="3.5" fill="#0000ff" /><rect x="1531.9" y="439.5" width="5.2" height="3.5" fill="#0000ff" /><rect x="1541.6" y="429.7" width="5.2" height="3.5" fill="#0000ff" /><rect x="1541.6" y="436.8" width="5.2" height="3.5" fill="#0000ff" /><rect x="1543.4" y="447.3" width="5.2" height="3.5" fill="#0000ff" /><rect x="1543.4" y="454.4" width="5.2" height="3.5" fill="#0000ff" /><rect x="1555.2" y="447.3" width="5.2" height="3.5" fill="#0000ff" /><rect x="1555.2" y="454.4" width="5.2" height="3.5" fill="#0000ff" /><rect x="1531.9" y="454.4" width="5.2" height="3.5" fill="#0000ff" /><rect x="1531.9" y="461.5" width="5.2" height="3.5" fill="#0000ff" /><rect x="1554.4" y="397.4" width="5.2" height="3.5" fill="#0000ff" /><rect x="1554.4" y="404.5" width="5.2" height="3.5" fill="#0000ff" /><rect x="1562.9" y="397.4" width="5.2" height="3.5" fill="#0000ff" /><rect x="1562.9" y="404.5" width="5.2" height="3.5" fill="#0000ff" /><rect x="1570.7" y="397.4" width="5.2" height="3.5" fill="#0000ff" /><rect x="1570.7" y="404.5" width="5.2" height="3.5" fill="#0000ff" /><rect x="1554.4" y="414.3" width="5.2" height="3.5" fill="#0000ff" /><rect x="1554.4" y="421.4" width="5.2" height="3.5" fill="#0000ff" /><rect x="1562.9" y="414.3" width="5.2" height="3.5" fill="#0000ff" /><rect x="1562.9" y="421.4" width="5.2" height="3.5" fill="#0000ff" /><rect x="1573.4" y="414.3" width="5.2" height="3.5" fill="#0000ff" /><rect x="1573.4" y="421.4" width="5.2" height="3.5" fill="#0000ff" /><rect x="1583.7" y="388.4" width="5.2" height="3.5" fill="#0000ff" /><rect x="1583.7" y="395.5" width="5.2" height="3.5" fill="#0000ff" /><rect x="1583.7" y="409.1" width="5.2" height="3.5" fill="#0000ff" /><rect x="1583.7" y="416.2" width="5.2" height="3.5" fill="#0000ff" /><rect x="1592.1" y="427.9" width="5.2" height="3.5" fill="#0000ff" /><rect x="1592.1" y="435.0" width="5.2" height="3.5" fill="#0000ff" /><rect x="1554.4" y="429.7" width="5.2" height="3.5" fill="#0000ff" /><rect x="1554.4" y="436.8" width="5.2" height="3.5" fill="#0000ff" /><rect x="1564.2" y="432.4" width="5.2" height="3.5" fill="#0000ff" /><rect x="1564.2" y="439.5" width="5.2" height="3.5" fill="#0000ff" /><rect x="1573.4" y="432.4" width="5.2" height="3.5" fill="#0000ff" /><rect x="1573.4" y="439.5" width="5.2" height="3.5" fill="#0000ff" /><rect x="1475.4" y="454.4" width="5.2" height="3.5" fill="#0000ff" /><rect x="1475.4" y="461.5" width="5.2" height="3.5" fill="#0000ff" /><rect x="1569.7" y="456.3" width="7.2" height="4.9" fill="#0000ff" /><rect x="1569.7" y="466.0" width="7.2" height="4.9" fill="#0000ff" /><polyline points="1540.0,372.0 1580.0,372.0 1610.0,390.0" fill="none" stroke="#0000ff" stroke-width="1.1" stroke-linejoin="round" stroke-linecap="round"/><polyline points="1480.0,395.0 1515.0,395.0" fill="none" stroke="#0000ff" stroke-width="1" stroke-linejoin="round" stroke-linecap="round"/><polyline points="1590.0,400.0 1600.0,390.0" fill="none" stroke="#0000ff" stroke-width="1" stroke-linejoin="round" stroke-linecap="round"/><polyline points="1586.0,440.0 1600.0,430.0" fill="none" stroke="#0000ff" stroke-width="1" stroke-linejoin="round" stroke-linecap="round"/><polyline points="1465.0,420.0 1470.0,430.0 1500.0,430.0 1510.0,440.0" fill="none" stroke="#0000ff" stroke-width="1.2" stroke-linejoin="round" stroke-linecap="round"/><polyline points="1584.0,410.0 1584.0,470.0 1590.0,480.0" fill="none" stroke="#0000ff" stroke-width="1.2" stroke-linejoin="round" stroke-linecap="round"/><rect x="1441.0" y="490.4" width="33.0" height="5.2" fill="#0000ff" /><rect x="1477.9" y="446.7" width="4.2" height="3.5" fill="#0000ff" /><rect x="1477.9" y="453.8" width="4.2" height="3.5" fill="#0000ff" /><rect x="1488.9" y="450.7" width="4.2" height="3.5" fill="#0000ff" /><rect x="1488.9" y="457.8" width="4.2" height="3.5" fill="#0000ff" /><rect x="1477.9" y="462.7" width="4.2" height="3.5" fill="#0000ff" /><rect x="1477.9" y="469.8" width="4.2" height="3.5" fill="#0000ff" /><rect x="1488.9" y="464.7" width="4.2" height="3.5" fill="#0000ff" /><rect x="1488.9" y="471.8" width="4.2" height="3.5" fill="#0000ff" /><rect x="1500.9" y="442.7" width="4.2" height="3.5" fill="#0000ff" /><rect x="1500.9" y="449.8" width="4.2" height="3.5" fill="#0000ff" /><rect x="1509.9" y="434.7" width="4.2" height="3.5" fill="#0000ff" /><rect x="1509.9" y="441.8" width="4.2" height="3.5" fill="#0000ff" /><rect x="1519.9" y="434.7" width="4.2" height="3.5" fill="#0000ff" /><rect x="1519.9" y="441.8" width="4.2" height="3.5" fill="#0000ff" /><rect x="1535.9" y="430.7" width="4.2" height="3.5" fill="#0000ff" /><rect x="1535.9" y="437.8" width="4.2" height="3.5" fill="#0000ff" /><rect x="1548.9" y="430.7" width="4.2" height="3.5" fill="#0000ff" /><rect x="1548.9" y="437.8" width="4.2" height="3.5" fill="#0000ff" /><rect x="1562.9" y="439.7" width="4.2" height="3.5" fill="#0000ff" /><rect x="1562.9" y="446.8" width="4.2" height="3.5" fill="#0000ff" /><rect x="1575.9" y="434.7" width="4.2" height="3.5" fill="#0000ff" /><rect x="1575.9" y="441.8" width="4.2" height="3.5" fill="#0000ff" /><rect x="1589.9" y="430.7" width="4.2" height="3.5" fill="#0000ff" /><rect x="1589.9" y="437.8" width="4.2" height="3.5" fill="#0000ff" /><rect x="1603.9" y="434.7" width="4.2" height="3.5" fill="#0000ff" /><rect x="1603.9" y="441.8" width="4.2" height="3.5" fill="#0000ff" /><rect x="1615.9" y="430.7" width="4.2" height="3.5" fill="#0000ff" /><rect x="1615.9" y="437.8" width="4.2" height="3.5" fill="#0000ff" /><rect x="1502.9" y="517.2" width="4.2" height="3.2" fill="#0000ff" /><rect x="1502.9" y="523.6" width="4.2" height="3.2" fill="#0000ff" /><rect x="1512.9" y="535.7" width="4.2" height="2.9" fill="#0000ff" /><rect x="1512.9" y="541.4" width="4.2" height="2.9" fill="#0000ff" /><rect x="1495.9" y="540.7" width="4.2" height="2.9" fill="#0000ff" /><rect x="1495.9" y="546.4" width="4.2" height="2.9" fill="#0000ff" /><polyline points="1522.8,575.0 1571.0,526.6 1598.8,526.6 1602.0,520.0" fill="none" stroke="#0000ff" stroke-width="1.6" stroke-linejoin="round" stroke-linecap="round"/><polyline points="1441.0,574.0 1520.0,574.0" fill="none" stroke="#0000ff" stroke-width="2.2" stroke-linejoin="round" stroke-linecap="round"/><polyline points="1585.0,466.0 1600.0,475.0 1601.0,510.0 1594.0,527.0 1560.0,527.0" fill="none" stroke="#0000ff" stroke-width="2.2" stroke-linejoin="round" stroke-linecap="round"/><polyline points="1679.0,467.0 1679.0,567.0" fill="none" stroke="#0000ff" stroke-width="5" stroke-linejoin="round" stroke-linecap="round"/><rect x="1575.4" y="445.2" width="5.2" height="3.2" fill="#0000ff" /><rect x="1575.4" y="451.6" width="5.2" height="3.2" fill="#0000ff" /><rect x="1573.0" y="455.0" width="10.0" height="7.0" fill="#0000ff" /><polygon points="1668.0,283.0 1758.0,283.0 1758.0,305.0 1668.0,305.0" fill="#0000ff" /><polyline points="1660.0,310.5 1713.0,310.5" fill="none" stroke="#0000ff" stroke-width="1.5" stroke-linejoin="round" stroke-linecap="round"/><rect x="1723.4" y="295.2" width="5.2" height="3.9" fill="#0000ff" /><rect x="1723.4" y="302.9" width="5.2" height="3.9" fill="#0000ff" /><rect x="1720.0" y="302.0" width="12.0" height="13.0" fill="#0000ff" /><polyline points="1676.0,335.7 1720.0,335.7" fill="none" stroke="#0000ff" stroke-width="1.2" stroke-linejoin="round" stroke-linecap="round"/><polygon points="1794.0,332.0 1809.0,332.0 1809.0,432.0 1794.0,432.0" fill="#0000ff" /><rect x="1647.4" y="362.2" width="4.7" height="3.2" fill="#0000ff" /><rect x="1647.4" y="368.6" width="4.7" height="3.2" fill="#0000ff" /><rect x="1647.4" y="383.7" width="4.7" height="3.2" fill="#0000ff" /><rect x="1647.4" y="390.1" width="4.7" height="3.2" fill="#0000ff" /><rect x="1647.4" y="402.6" width="4.7" height="3.2" fill="#0000ff" /><rect x="1647.4" y="409.0" width="4.7" height="3.2" fill="#0000ff" /><rect x="1655.5" y="402.2" width="4.7" height="3.2" fill="#0000ff" /><rect x="1655.5" y="408.6" width="4.7" height="3.2" fill="#0000ff" /><rect x="1663.1" y="402.2" width="4.7" height="3.2" fill="#0000ff" /><rect x="1663.1" y="408.6" width="4.7" height="3.2" fill="#0000ff" /><rect x="1670.1" y="380.2" width="4.7" height="3.2" fill="#0000ff" /><rect x="1670.1" y="386.6" width="4.7" height="3.2" fill="#0000ff" /><rect x="1670.1" y="389.6" width="4.7" height="3.2" fill="#0000ff" /><rect x="1670.1" y="396.0" width="4.7" height="3.2" fill="#0000ff" /><rect x="1678.7" y="389.2" width="4.7" height="3.2" fill="#0000ff" /><rect x="1678.7" y="395.6" width="4.7" height="3.2" fill="#0000ff" /><rect x="1691.7" y="370.2" width="4.7" height="3.2" fill="#0000ff" /><rect x="1691.7" y="376.6" width="4.7" height="3.2" fill="#0000ff" /><rect x="1691.7" y="385.2" width="4.7" height="3.2" fill="#0000ff" /><rect x="1691.7" y="391.6" width="4.7" height="3.2" fill="#0000ff" /><rect x="1699.2" y="398.6" width="4.7" height="3.2" fill="#0000ff" /><rect x="1699.2" y="405.0" width="4.7" height="3.2" fill="#0000ff" /><rect x="1706.9" y="398.2" width="4.7" height="3.2" fill="#0000ff" /><rect x="1706.9" y="404.6" width="4.7" height="3.2" fill="#0000ff" /><rect x="1722.9" y="367.6" width="4.7" height="3.2" fill="#0000ff" /><rect x="1722.9" y="374.0" width="4.7" height="3.2" fill="#0000ff" /><rect x="1731.6" y="367.6" width="4.7" height="3.2" fill="#0000ff" /><rect x="1731.6" y="374.0" width="4.7" height="3.2" fill="#0000ff" /><rect x="1738.6" y="367.6" width="4.7" height="3.2" fill="#0000ff" /><rect x="1738.6" y="374.0" width="4.7" height="3.2" fill="#0000ff" /><rect x="1722.9" y="380.5" width="4.7" height="3.2" fill="#0000ff" /><rect x="1722.9" y="386.9" width="4.7" height="3.2" fill="#0000ff" /><rect x="1729.4" y="380.5" width="4.7" height="3.2" fill="#0000ff" /><rect x="1729.4" y="386.9" width="4.7" height="3.2" fill="#0000ff" /><rect x="1737.5" y="380.5" width="4.7" height="3.2" fill="#0000ff" /><rect x="1737.5" y="386.9" width="4.7" height="3.2" fill="#0000ff" /><rect x="1729.4" y="394.5" width="4.7" height="3.2" fill="#0000ff" /><rect x="1729.4" y="400.9" width="4.7" height="3.2" fill="#0000ff" /><rect x="1737.5" y="394.5" width="4.7" height="3.2" fill="#0000ff" /><rect x="1737.5" y="400.9" width="4.7" height="3.2" fill="#0000ff" /><rect x="1745.6" y="393.5" width="4.7" height="3.2" fill="#0000ff" /><rect x="1745.6" y="399.9" width="4.7" height="3.2" fill="#0000ff" /><rect x="1752.7" y="393.5" width="4.7" height="3.2" fill="#0000ff" /><rect x="1752.7" y="399.9" width="4.7" height="3.2" fill="#0000ff" /><rect x="1759.9" y="393.5" width="4.7" height="3.2" fill="#0000ff" /><rect x="1759.9" y="399.9" width="4.7" height="3.2" fill="#0000ff" /><rect x="1767.2" y="393.5" width="4.7" height="3.2" fill="#0000ff" /><rect x="1767.2" y="399.9" width="4.7" height="3.2" fill="#0000ff" /><rect x="1752.0" y="405.2" width="4.7" height="3.2" fill="#0000ff" /><rect x="1752.0" y="411.6" width="4.7" height="3.2" fill="#0000ff" /><rect x="1759.0" y="405.2" width="4.7" height="3.2" fill="#0000ff" /><rect x="1759.0" y="411.6" width="4.7" height="3.2" fill="#0000ff" /><rect x="1767.2" y="405.2" width="4.7" height="3.2" fill="#0000ff" /><rect x="1767.2" y="411.6" width="4.7" height="3.2" fill="#0000ff" /><rect x="1747.7" y="376.2" width="4.7" height="3.2" fill="#0000ff" /><rect x="1747.7" y="382.6" width="4.7" height="3.2" fill="#0000ff" /><rect x="1641.7" y="417.2" width="4.7" height="3.2" fill="#0000ff" /><rect x="1641.7" y="423.6" width="4.7" height="3.2" fill="#0000ff" /><rect x="1649.7" y="417.2" width="4.7" height="3.2" fill="#0000ff" /><rect x="1649.7" y="423.6" width="4.7" height="3.2" fill="#0000ff" /><rect x="1657.7" y="417.2" width="4.7" height="3.2" fill="#0000ff" /><rect x="1657.7" y="423.6" width="4.7" height="3.2" fill="#0000ff" /><rect x="1702.9" y="351.7" width="4.2" height="2.9" fill="#0000ff" /><rect x="1702.9" y="357.4" width="4.2" height="2.9" fill="#0000ff" /><rect x="1710.9" y="351.7" width="4.2" height="2.9" fill="#0000ff" /><rect x="1710.9" y="357.4" width="4.2" height="2.9" fill="#0000ff" /><rect x="1717.9" y="351.7" width="4.2" height="2.9" fill="#0000ff" /><rect x="1717.9" y="357.4" width="4.2" height="2.9" fill="#0000ff" /><rect x="1724.9" y="351.7" width="4.2" height="2.9" fill="#0000ff" /><rect x="1724.9" y="357.4" width="4.2" height="2.9" fill="#0000ff" /><rect x="1669.9" y="354.2" width="6.2" height="5.2" fill="#0000ff" /><rect x="1669.9" y="364.6" width="6.2" height="5.2" fill="#0000ff" /><polyline points="1681.0,365.0 1684.0,372.0 1685.0,405.0 1687.5,415.5" fill="none" stroke="#0000ff" stroke-width="3.5" stroke-linejoin="round" stroke-linecap="round"/><polyline points="1645.0,380.0 1650.0,375.0 1700.0,362.0 1760.0,362.0 1770.0,350.0" fill="none" stroke="#0000ff" stroke-width="1.1" stroke-linejoin="round" stroke-linecap="round"/><polyline points="1700.0,400.0 1740.0,410.0 1760.0,422.0" fill="none" stroke="#0000ff" stroke-width="1" stroke-linejoin="round" stroke-linecap="round"/><polygon points="1683.0,422.0 1809.0,422.0 1809.0,440.0 1683.0,440.0" fill="#0000ff" /><polygon points="1676.0,460.0 1690.0,456.0 1700.0,456.0 1700.0,430.0 1809.0,430.0 1809.0,566.0 1800.0,578.0 1700.0,578.0 1700.0,556.0 1690.0,556.0 1676.0,540.0" fill="#0000ff" /><rect x="1806.0" y="471.0" width="2.0" height="88.0" fill="#0000ff" /><polyline points="1660.0,521.0 1679.0,521.0 1690.0,510.0" fill="none" stroke="#0000ff" stroke-width="4" stroke-linejoin="round" stroke-linecap="round"/><rect x="1642.9" y="431.2" width="4.2" height="3.2" fill="#0000ff" /><rect x="1642.9" y="437.6" width="4.2" height="3.2" fill="#0000ff" /><rect x="1657.9" y="435.2" width="4.2" height="3.2" fill="#0000ff" /><rect x="1657.9" y="441.6" width="4.2" height="3.2" fill="#0000ff" /><rect x="1669.9" y="435.2" width="4.2" height="3.2" fill="#0000ff" /><rect x="1669.9" y="441.6" width="4.2" height="3.2" fill="#0000ff" /><polygon points="1686,446 1712,446 1722,455 1722,530 1712,535 1686,535" fill="#ff0000"/><polygon points="1083.8,414 1100,414 1100,459.3 1108.8,468 1108.8,497.3 1121.7,504.2 1121.7,511 1083.8,511" fill="url(#dr)"/><text x="1083.5" y="447" font-family="Liberation Sans" font-weight="bold" font-size="6.5" fill="#ffff00" text-anchor="start">Earth</text><text x="1084" y="455" font-family="Liberation Sans" font-weight="bold" font-size="4.5" fill="#ffff00" text-anchor="start">P1</text><rect x="1084.5" y="458.0" width="1.0" height="24.0" fill="none" stroke="#ffff00" stroke-width="1"/><path d="M1088 393 q-4 11 0 22 M1098 393 q4 11 0 22" fill="none" stroke="#ffff00" stroke-width="1"/><text x="1084" y="383" font-family="Liberation Sans" font-weight="bold" font-size="4.5" fill="#ffff00" text-anchor="start">CY1</text><text x="1091" y="403" font-size="5" fill="#00a000" font-family="Liberation Sans">+</text><rect x="1119.0" y="302.0" width="48.7" height="73.3" fill="none" stroke="#ffff00" stroke-width="1"/><rect x="1119.0" y="335.0" width="7.0" height="8.0" fill="none" stroke="#ffff00" stroke-width="1"/><rect x="1160.5" y="335.0" width="7.2" height="8.0" fill="none" stroke="#ffff00" stroke-width="1"/><path d="M1130 321 q2 6 6 5 q2 -5 4 0 q2 -5 4 0 q2 -5 4 0 q3 1 6 -5 M1130 356 q2 -6 6 -5 q2 5 4 0 q2 5 4 0 q2 5 4 0 q3 -1 6 5" fill="none" stroke="#ffff00" stroke-width="1"/><text x="1118" y="299" font-family="Liberation Sans" font-weight="bold" font-size="4.5" fill="#ffff00" text-anchor="start">LF8</text><path d="M1115 350 l0 20 l8 8" fill="none" stroke="#ff00ff" stroke-width="2"/><rect x="1176" y="309" width="12" height="70" fill="none" stroke="#ff00ff" stroke-width="0.9"/><rect x="1177.0" y="311.0" width="10.0" height="65.0" fill="none" stroke="#ffff00" stroke-width="1"/><ellipse cx="1185" cy="327" rx="8" ry="1.8" fill="none" stroke="#ff00ff" stroke-width="0.9"/><ellipse cx="1185" cy="343" rx="8" ry="1.8" fill="none" stroke="#ff00ff" stroke-width="0.9"/><ellipse cx="1185" cy="360" rx="8" ry="1.8" fill="none" stroke="#ff00ff" stroke-width="0.9"/><text x="1176" y="305" font-family="Liberation Sans" font-weight="bold" font-size="4.5" fill="#ffff00" text-anchor="start">ID1</text><rect x="1194.0" y="315.0" width="25.0" height="58.0" fill="none" stroke="#ffff00" stroke-width="1"/><ellipse cx="1206" cy="330" rx="8" ry="2" fill="none" stroke="#ff00ff" stroke-width="1"/><ellipse cx="1206" cy="357" rx="8" ry="2" fill="none" stroke="#ff00ff" stroke-width="1"/><text x="1194" y="312" font-family="Liberation Sans" font-weight="bold" font-size="4.5" fill="#ffff00" text-anchor="start">CD4</text><rect x="1112.2" y="382.0" width="57.2" height="28.6" fill="none" stroke="#ffff00" stroke-width="1"/><text x="1138" y="398" font-size="6" fill="#00a000" font-family="Liberation Sans">+</text><text x="1160" y="381" font-family="Liberation Sans" font-weight="bold" font-size="4.5" fill="#ffff00" text-anchor="start">CX2</text><rect x="1107.0" y="415.0" width="73.0" height="47.8" fill="none" stroke="#ffff00" stroke-width="1"/><rect x="1135.0" y="415.0" width="7.0" height="7.0" fill="none" stroke="#ffff00" stroke-width="1"/><path d="M1124 430 q5 3 0 6 q5 3 0 6 q5 3 0 6 q5 3 0 6 M1162 430 q-5 3 0 6 q-5 3 0 6 q-5 3 0 6 q-5 3 0 6" fill="none" stroke="#ffff00" stroke-width="1"/><text x="1170" y="412" font-family="Liberation Sans" font-weight="bold" font-size="4.5" fill="#ffff00" text-anchor="start">LF1</text><rect x="1190.0" y="413.0" width="29.0" height="42.0" fill="url(#dg)"/><rect x="1108.8" y="472.3" width="19.8" height="25.9" fill="none" stroke="#ffff00" stroke-width="1"/><text x="1108" y="470" font-family="Liberation Sans" font-weight="bold" font-size="4.5" fill="#ffff00" text-anchor="start">GDT1</text><path d="M1087.3 513 q-4 10 0 20 M1099.3 513 q4 10 0 20" fill="none" stroke="#ffff00" stroke-width="1"/><path d="M1109.7 513 q-4 10 0 20 M1121.7 513 q4 10 0 20" fill="none" stroke="#ffff00" stroke-width="1"/><text x="1084" y="500" font-family="Liberation Sans" font-weight="bold" font-size="4.5" fill="#ffff00" text-anchor="start">CY2</text><text x="1102" y="504" font-family="Liberation Sans" font-weight="bold" font-size="4.5" fill="#ffff00" text-anchor="start">CY3</text><path d="M1130.4 549 H1140 V545 H1146 V549 H1164 V545 H1168 V549 H1174.4 V579.3 H1130.4 Z" fill="none" stroke="#ffff00" stroke-width="1"/><ellipse cx="1153" cy="563" rx="1.8" ry="7" fill="none" stroke="#ff00ff" stroke-width="1"/><text x="1138" y="576" font-family="Liberation Sans" font-weight="bold" font-size="5" fill="#ffff00" text-anchor="start">1</text><circle cx="1135.0" cy="552.0" r="2.2" fill="#10a0a0"/><text x="1130" y="546" font-family="Liberation Sans" font-weight="bold" font-size="4.5" fill="#ffff00" text-anchor="start">J1</text><rect x="1149.3" y="467.0" width="57.8" height="29.4" fill="none" stroke="#ffff00" stroke-width="1"/><rect x="1164.5" y="475.5" width="7.0" height="12.0" fill="none" stroke="#808000" stroke-width="0.9"/><rect x="1165.4" y="476.2" width="5.2" height="10.6" fill="none" stroke="#ff00ff" stroke-width="0.6"/><path d="M1166.7 481.5 h2.6 M1168.0 480.2 v2.6" stroke="#00b000" stroke-width="0.7"/><rect x="1184.5" y="475.5" width="7.0" height="12.0" fill="none" stroke="#808000" stroke-width="0.9"/><rect x="1185.4" y="476.2" width="5.2" height="10.6" fill="none" stroke="#ff00ff" stroke-width="0.6"/><path d="M1186.7 481.5 h2.6 M1188.0 480.2 v2.6" stroke="#00b000" stroke-width="0.7"/><text x="1180" y="465" font-family="Liberation Sans" font-weight="bold" font-size="4.5" fill="#ffff00" text-anchor="start">CX1</text><rect x="1133" y="503.5" width="49" height="16" fill="none" stroke="#006000" stroke-width="1"/><rect x="1133" y="526.8" width="49" height="16" fill="none" stroke="#006000" stroke-width="1"/><rect x="1134.5" y="504.5" width="46" height="14" rx="7" fill="none" stroke="#ffff00" stroke-width="1"/><rect x="1134.5" y="527.8" width="46" height="14" rx="7" fill="none" stroke="#ffff00" stroke-width="1"/><rect x="1190.8" y="503.3" width="14.6" height="47.5" rx="7" fill="none" stroke="#ffff00" stroke-width="1"/><rect x="1189" y="502" width="18" height="50" fill="none" stroke="#006000" stroke-width="1"/><text x="1133" y="501" font-family="Liberation Sans" font-weight="bold" font-size="4.5" fill="#ffff00" text-anchor="start">NTC3</text><text x="1133" y="524" font-family="Liberation Sans" font-weight="bold" font-size="4.5" fill="#ffff00" text-anchor="start">NTC2</text><text x="1181" y="501" font-family="Liberation Sans" font-weight="bold" font-size="4.5" fill="#ffff00" text-anchor="start">NTC1</text><rect x="1209.5" y="473" width="5.5" height="28" rx="2.7" fill="none" stroke="#ff00ff" stroke-width="1"/><rect x="1208.5" y="544" width="5.5" height="28" rx="2.7" fill="none" stroke="#ff00ff" stroke-width="1"/><rect x="1216.6" y="489.5" width="33.7" height="59.5" fill="none" stroke="#ffff00" stroke-width="1"/><rect x="1217.5" y="514.0" width="7.0" height="14.0" fill="none" stroke="#808000" stroke-width="0.9"/><rect x="1218.4" y="514.7" width="5.2" height="12.6" fill="none" stroke="#ff00ff" stroke-width="0.6"/><path d="M1219.7 521.0 h2.6 M1221.0 519.7 v2.6" stroke="#00b000" stroke-width="0.7"/><rect x="1234.5" y="514.0" width="7.0" height="14.0" fill="none" stroke="#808000" stroke-width="0.9"/><rect x="1235.4" y="514.7" width="5.2" height="12.6" fill="none" stroke="#ff00ff" stroke-width="0.6"/><path d="M1236.7 521.0 h2.6 M1238.0 519.7 v2.6" stroke="#00b000" stroke-width="0.7"/><text x="1215" y="488" font-family="Liberation Sans" font-weight="bold" font-size="4.5" fill="#ffff00" text-anchor="start">R1</text><rect x="1179.0" y="557.0" width="27.0" height="18.0" fill="none" stroke="#ffff00" stroke-width="1"/><path d="M1181 566 l6 -4 l5 6 l6 -5 M1184 570 l20 -8" stroke="#ff00ff" stroke-width="0.9" fill="none"/><text x="1178" y="554" font-family="Liberation Sans" font-weight="bold" font-size="4.5" fill="#ffff00" text-anchor="start">JTK</text><rect x="1219" y="464.5" width="45" height="13.8" rx="6.9" fill="none" stroke="#ffff00" stroke-width="1"/><path d="M1240 476 l12 -12" stroke="#ff00ff" stroke-width="3"/><path d="M1240 476 l12 -12" stroke="#000" stroke-width="1.2"/><path d="M1224.2 297.2 H1329.8 V312 H1288.8 L1282.8 318 H1270.8 L1264.8 312 H1224.2 Z" fill="none" stroke="#ffff00" stroke-width="1"/><path d="M1224.2 315.7 H1246.8 L1260.8 330 M1329.8 315.7 H1306.8 L1292.8 330" fill="none" stroke="#ffff00" stroke-width="1"/><path d="M1224.2 406.3 H1329.8 V392 H1288.8 L1282.8 386 H1270.8 L1264.8 392 H1224.2 Z" fill="none" stroke="#ffff00" stroke-width="1"/><path d="M1224.2 388.9 H1246.8 L1260.8 374 M1329.8 388.9 H1306.8 L1292.8 374" fill="none" stroke="#ffff00" stroke-width="1"/><path d="M1237.3 297.2 v5 h7 v-5" fill="none" stroke="#ffff00" stroke-width="0.9"/><path d="M1237.3 406.3 v-5 h7 v5" fill="none" stroke="#ffff00" stroke-width="0.9"/><path d="M1253.3 297.2 v5 h7 v-5" fill="none" stroke="#ffff00" stroke-width="0.9"/><path d="M1253.3 406.3 v-5 h7 v5" fill="none" stroke="#ffff00" stroke-width="0.9"/><path d="M1292.3 297.2 v5 h7 v-5" fill="none" stroke="#ffff00" stroke-width="0.9"/><path d="M1292.3 406.3 v-5 h7 v5" fill="none" stroke="#ffff00" stroke-width="0.9"/><path d="M1308.3 297.2 v5 h7 v-5" fill="none" stroke="#ffff00" stroke-width="0.9"/><path d="M1308.3 406.3 v-5 h7 v5" fill="none" stroke="#ffff00" stroke-width="0.9"/><path d="M1235.3999999999999 320 A41.5 41.5 0 0 0 1235.3999999999999 384 M1318.2 320 A41.5 41.5 0 0 1 1318.2 384" fill="none" stroke="#ffff00" stroke-width="1"/><path d="M1241.8 317 A41.5 41.5 0 0 1 1256.8 315.7 M1311.8 317 A41.5 41.5 0 0 0 1296.8 315.7" fill="none" stroke="#ffff00" stroke-width="1"/><circle cx="1276.8" cy="351.8" r="24.2" fill="none" stroke="#ffff00" stroke-width="1"/><text x="1279.3" y="351.8" font-family="Liberation Sans" font-weight="bold" font-size="5.2" fill="#ffff00" text-anchor="middle" transform="rotate(-90 1279.3 351.8)">PQ26/25_18P</text><path d="M1336.3000000000002 297.2 H1441.9 V312 H1400.9 L1394.9 318 H1382.9 L1376.9 312 H1336.3000000000002 Z" fill="none" stroke="#ffff00" stroke-width="1"/><path d="M1336.3000000000002 315.7 H1358.9 L1372.9 330 M1441.9 315.7 H1418.9 L1404.9 330" fill="none" stroke="#ffff00" stroke-width="1"/><path d="M1336.3000000000002 406.3 H1441.9 V392 H1400.9 L1394.9 386 H1382.9 L1376.9 392 H1336.3000000000002 Z" fill="none" stroke="#ffff00" stroke-width="1"/><path d="M1336.3000000000002 388.9 H1358.9 L1372.9 374 M1441.9 388.9 H1418.9 L1404.9 374" fill="none" stroke="#ffff00" stroke-width="1"/><path d="M1349.4 297.2 v5 h7 v-5" fill="none" stroke="#ffff00" stroke-width="0.9"/><path d="M1349.4 406.3 v-5 h7 v5" fill="none" stroke="#ffff00" stroke-width="0.9"/><path d="M1365.4 297.2 v5 h7 v-5" fill="none" stroke="#ffff00" stroke-width="0.9"/><path d="M1365.4 406.3 v-5 h7 v5" fill="none" stroke="#ffff00" stroke-width="0.9"/><path d="M1404.4 297.2 v5 h7 v-5" fill="none" stroke="#ffff00" stroke-width="0.9"/><path d="M1404.4 406.3 v-5 h7 v5" fill="none" stroke="#ffff00" stroke-width="0.9"/><path d="M1420.4 297.2 v5 h7 v-5" fill="none" stroke="#ffff00" stroke-width="0.9"/><path d="M1420.4 406.3 v-5 h7 v5" fill="none" stroke="#ffff00" stroke-width="0.9"/><path d="M1347.5 320 A41.5 41.5 0 0 0 1347.5 384 M1430.3000000000002 320 A41.5 41.5 0 0 1 1430.3000000000002 384" fill="none" stroke="#ffff00" stroke-width="1"/><path d="M1353.9 317 A41.5 41.5 0 0 1 1368.9 315.7 M1423.9 317 A41.5 41.5 0 0 0 1408.9 315.7" fill="none" stroke="#ffff00" stroke-width="1"/><circle cx="1388.9" cy="351.8" r="24.2" fill="none" stroke="#ffff00" stroke-width="1"/><text x="1391.4" y="351.8" font-family="Liberation Sans" font-weight="bold" font-size="5.2" fill="#ffff00" text-anchor="middle" transform="rotate(-90 1391.4 351.8)">PQ26/25_18P</text><text x="1213" y="299" font-family="Liberation Sans" font-weight="bold" font-size="5" fill="#ffff00" text-anchor="start">T1</text><text x="1444" y="303" font-family="Liberation Sans" font-weight="bold" font-size="5" fill="#ffff00" text-anchor="start">T2</text><rect x="1289.8" y="319.0" width="7.0" height="16.0" fill="none" stroke="#808000" stroke-width="0.9"/><rect x="1290.7" y="319.7" width="5.2" height="14.6" fill="none" stroke="#ff00ff" stroke-width="0.6"/><path d="M1292.0 327.0 h2.6 M1293.3 325.7 v2.6" stroke="#00b000" stroke-width="0.7"/><rect x="1302.7" y="319.0" width="7.0" height="16.0" fill="none" stroke="#808000" stroke-width="0.9"/><rect x="1303.6" y="319.7" width="5.2" height="14.6" fill="none" stroke="#ff00ff" stroke-width="0.6"/><path d="M1304.9 327.0 h2.6 M1306.2 325.7 v2.6" stroke="#00b000" stroke-width="0.7"/><rect x="1315.5" y="319.0" width="7.0" height="16.0" fill="none" stroke="#808000" stroke-width="0.9"/><rect x="1316.4" y="319.7" width="5.2" height="14.6" fill="none" stroke="#ff00ff" stroke-width="0.6"/><path d="M1317.7 327.0 h2.6 M1319.0 325.7 v2.6" stroke="#00b000" stroke-width="0.7"/><rect x="1229.5" y="317.5" width="7.0" height="15.0" fill="none" stroke="#808000" stroke-width="0.9"/><rect x="1230.4" y="318.2" width="5.2" height="13.6" fill="none" stroke="#ff00ff" stroke-width="0.6"/><path d="M1231.7 325.0 h2.6 M1233.0 323.7 v2.6" stroke="#00b000" stroke-width="0.7"/><rect x="1229.5" y="341.5" width="7.0" height="15.0" fill="none" stroke="#808000" stroke-width="0.9"/><rect x="1230.4" y="342.2" width="5.2" height="13.6" fill="none" stroke="#ff00ff" stroke-width="0.6"/><path d="M1231.7 349.0 h2.6 M1233.0 347.7 v2.6" stroke="#00b000" stroke-width="0.7"/><rect x="1327.0" y="385.0" width="11.0" height="5.0" fill="url(#dg)"/><rect x="1214.0" y="437.0" width="43.0" height="20.0" fill="url(#dg)"/><rect x="1269.0" y="437.0" width="43.0" height="20.0" fill="url(#dg)"/><rect x="1221.0" y="421.4" width="32.7" height="15.4" fill="none" stroke="#ffff00" stroke-width="1"/><rect x="1277.5" y="421.4" width="33.2" height="15.4" fill="none" stroke="#ffff00" stroke-width="1"/><path d="M1213 437.5 H1258 M1268 437.5 H1313" stroke="#ffff00" stroke-width="1.3"/><rect x="1242.5" y="424.5" width="6.0" height="6.0" fill="#c4c4c4" /><circle cx="1245.5" cy="427.5" r="1.3" fill="#10a0a0"/><rect x="1298.5" y="424.5" width="6.0" height="6.0" fill="#c4c4c4" /><circle cx="1301.5" cy="427.5" r="1.3" fill="#10a0a0"/><path d="M1214 440 V455 a1.7 1.7 0 0 0 3.4 0 V440 M1222 440 V455 a1.7 1.7 0 0 0 3.4 0 V440 M1230 440 V455 a1.7 1.7 0 0 0 3.4 0 V440 M1250 440 V455 a1.7 1.7 0 0 0 3.4 0 V440 M1258 440 V455 a1.7 1.7 0 0 0 3.4 0 V440 M1264 440 V455 a1.7 1.7 0 0 0 3.4 0 V440 M1270 440 V455 a1.7 1.7 0 0 0 3.4 0 V440 M1278 440 V455 a1.7 1.7 0 0 0 3.4 0 V440 M1286 440 V455 a1.7 1.7 0 0 0 3.4 0 V440 M1304 440 V455 a1.7 1.7 0 0 0 3.4 0 V440 M1213 424 V437 M1217.5 424 V437 M1266 424 V437 M1270 424 V437 " fill="none" stroke="#c8c860" stroke-width="0.9"/><text x="1221" y="419" font-family="Liberation Sans" font-weight="bold" font-size="4.5" fill="#ffff00" text-anchor="start">ID6</text><text x="1277" y="419" font-family="Liberation Sans" font-weight="bold" font-size="4.5" fill="#ffff00" text-anchor="start">ID4</text><text x="1211" y="409" font-family="Liberation Sans" font-weight="bold" font-size="4.5" fill="#ffff00" text-anchor="start">HD5</text><rect x="1223" y="457" width="17" height="4" rx="2" fill="none" stroke="#ff00ff" stroke-width="1"/><rect x="1312" y="412" width="40" height="59" fill="url(#dr)"/><rect x="1325.0" y="410.0" width="14.0" height="26.0" fill="none" stroke="#808000" stroke-width="1"/><path d="M1326 420 v40 M1320 440 v28" stroke="#ffff00" stroke-width="1.2"/><path d="M1358 420 l7 7 l7 -7" fill="none" stroke="#ff00ff" stroke-width="1.2"/><rect x="1348.7" y="425.0" width="33.2" height="13.0" fill="none" stroke="#ffff00" stroke-width="1"/><rect x="1348.7" y="437.4" width="33.2" height="3.6" fill="#ffff00" /><text x="1371" y="418" font-family="Liberation Sans" font-weight="bold" font-size="5" fill="#ffff00" text-anchor="start">M?</text><rect x="1384.0" y="416.0" width="16.0" height="26.0" fill="url(#dg)"/><path d="M1342 442 V468 a3 3 0 0 0 6 0 V442 M1356 442 V468 a3 3 0 0 0 6 0 V442 M1370 442 V468 a3 3 0 0 0 6 0 V442 M1384 442 V468 a3 3 0 0 0 6 0 V442 " fill="none" stroke="#ffff00" stroke-width="1"/><rect x="1419.0" y="424.0" width="30.0" height="19.0" fill="url(#dg)"/><rect x="1418.0" y="424.0" width="32.0" height="4.0" fill="none" stroke="#ffff00" stroke-width="1"/><text x="1410" y="428" font-family="Liberation Sans" font-weight="bold" font-size="5" fill="#ffff00" text-anchor="start">HS9</text><rect x="1405.6" y="461.7" width="3.4" height="28" rx="1.7" fill="none" stroke="#ff00ff" stroke-width="1"/><rect x="1425.8" y="446.3" width="15.4" height="33.2" fill="none" stroke="#ffff00" stroke-width="1"/><path d="M1415 470 l14 -14" stroke="#ff00ff" stroke-width="3"/><path d="M1415 470 l14 -14" stroke="#000" stroke-width="1.2"/><polygon points="1262,456 1410,456 1410,472 1300,472 1284,474 1275,480 1272,492 1262,492" fill="url(#dr)"/><rect x="1273.0" y="459.5" width="6.0" height="11.0" fill="none" stroke="#808000" stroke-width="0.9"/><rect x="1273.9" y="460.2" width="4.2" height="9.6" fill="none" stroke="#ff00ff" stroke-width="0.6"/><path d="M1274.7 465.0 h2.6 M1276.0 463.7 v2.6" stroke="#00b000" stroke-width="0.7"/><rect x="1281.0" y="459.5" width="6.0" height="11.0" fill="none" stroke="#808000" stroke-width="0.9"/><rect x="1281.9" y="460.2" width="4.2" height="9.6" fill="none" stroke="#ff00ff" stroke-width="0.6"/><path d="M1282.7 465.0 h2.6 M1284.0 463.7 v2.6" stroke="#00b000" stroke-width="0.7"/><rect x="1289.0" y="459.5" width="6.0" height="11.0" fill="none" stroke="#808000" stroke-width="0.9"/><rect x="1289.9" y="460.2" width="4.2" height="9.6" fill="none" stroke="#ff00ff" stroke-width="0.6"/><path d="M1290.7 465.0 h2.6 M1292.0 463.7 v2.6" stroke="#00b000" stroke-width="0.7"/><rect x="1297.0" y="459.5" width="6.0" height="11.0" fill="none" stroke="#808000" stroke-width="0.9"/><rect x="1297.9" y="460.2" width="4.2" height="9.6" fill="none" stroke="#ff00ff" stroke-width="0.6"/><path d="M1298.7 465.0 h2.6 M1300.0 463.7 v2.6" stroke="#00b000" stroke-width="0.7"/><rect x="1307.0" y="459.5" width="6.0" height="11.0" fill="none" stroke="#808000" stroke-width="0.9"/><rect x="1307.9" y="460.2" width="4.2" height="9.6" fill="none" stroke="#ff00ff" stroke-width="0.6"/><path d="M1308.7 465.0 h2.6 M1310.0 463.7 v2.6" stroke="#00b000" stroke-width="0.7"/><rect x="1317.0" y="459.5" width="6.0" height="11.0" fill="none" stroke="#808000" stroke-width="0.9"/><rect x="1317.9" y="460.2" width="4.2" height="9.6" fill="none" stroke="#ff00ff" stroke-width="0.6"/><path d="M1318.7 465.0 h2.6 M1320.0 463.7 v2.6" stroke="#00b000" stroke-width="0.7"/><rect x="1316.5" y="473.3" width="6.5" height="11.0" fill="none" stroke="#808000" stroke-width="0.9"/><rect x="1317.4" y="474.0" width="4.7" height="9.6" fill="none" stroke="#ff00ff" stroke-width="0.6"/><path d="M1318.4 478.8 h2.6 M1319.7 477.5 v2.6" stroke="#00b000" stroke-width="0.7"/><rect x="1324.2" y="473.3" width="6.5" height="11.0" fill="none" stroke="#808000" stroke-width="0.9"/><rect x="1325.2" y="474.0" width="4.7" height="9.6" fill="none" stroke="#ff00ff" stroke-width="0.6"/><path d="M1326.2 478.8 h2.6 M1327.5 477.5 v2.6" stroke="#00b000" stroke-width="0.7"/><rect x="1334.2" y="470.5" width="6.5" height="11.0" fill="none" stroke="#808000" stroke-width="0.9"/><rect x="1335.1" y="471.2" width="4.7" height="9.6" fill="none" stroke="#ff00ff" stroke-width="0.6"/><path d="M1336.1 476.0 h2.6 M1337.4 474.7 v2.6" stroke="#00b000" stroke-width="0.7"/><rect x="1370.0" y="470.5" width="6.5" height="11.0" fill="none" stroke="#808000" stroke-width="0.9"/><rect x="1370.9" y="471.2" width="4.7" height="9.6" fill="none" stroke="#ff00ff" stroke-width="0.6"/><path d="M1371.9 476.0 h2.6 M1373.2 474.7 v2.6" stroke="#00b000" stroke-width="0.7"/><rect x="1380.3" y="470.5" width="6.5" height="11.0" fill="none" stroke="#808000" stroke-width="0.9"/><rect x="1381.2" y="471.2" width="4.7" height="9.6" fill="none" stroke="#ff00ff" stroke-width="0.6"/><path d="M1382.3 476.0 h2.6 M1383.6 474.7 v2.6" stroke="#00b000" stroke-width="0.7"/><rect x="1389.8" y="470.5" width="6.5" height="11.0" fill="none" stroke="#808000" stroke-width="0.9"/><rect x="1390.7" y="471.2" width="4.7" height="9.6" fill="none" stroke="#ff00ff" stroke-width="0.6"/><path d="M1391.7 476.0 h2.6 M1393.0 474.7 v2.6" stroke="#00b000" stroke-width="0.7"/><rect x="1280.2" y="479.4" width="6.5" height="11.0" fill="none" stroke="#808000" stroke-width="0.9"/><rect x="1281.2" y="480.1" width="4.7" height="9.6" fill="none" stroke="#ff00ff" stroke-width="0.6"/><path d="M1282.2 484.9 h2.6 M1283.5 483.6 v2.6" stroke="#00b000" stroke-width="0.7"/><rect x="1287.5" y="479.4" width="6.5" height="11.0" fill="none" stroke="#808000" stroke-width="0.9"/><rect x="1288.5" y="480.1" width="4.7" height="9.6" fill="none" stroke="#ff00ff" stroke-width="0.6"/><path d="M1289.5 484.9 h2.6 M1290.8 483.6 v2.6" stroke="#00b000" stroke-width="0.7"/><rect x="1316.5" y="490.5" width="6.5" height="11.0" fill="none" stroke="#808000" stroke-width="0.9"/><rect x="1317.4" y="491.2" width="4.7" height="9.6" fill="none" stroke="#ff00ff" stroke-width="0.6"/><path d="M1318.4 496.0 h2.6 M1319.7 494.7 v2.6" stroke="#00b000" stroke-width="0.7"/><rect x="1324.2" y="490.5" width="6.5" height="11.0" fill="none" stroke="#808000" stroke-width="0.9"/><rect x="1325.2" y="491.2" width="4.7" height="9.6" fill="none" stroke="#ff00ff" stroke-width="0.6"/><path d="M1326.2 496.0 h2.6 M1327.5 494.7 v2.6" stroke="#00b000" stroke-width="0.7"/><rect x="1271.5" y="507.8" width="6.5" height="11.0" fill="none" stroke="#808000" stroke-width="0.9"/><rect x="1272.5" y="508.5" width="4.7" height="9.6" fill="none" stroke="#ff00ff" stroke-width="0.6"/><path d="M1273.5 513.3 h2.6 M1274.8 512.0 v2.6" stroke="#00b000" stroke-width="0.7"/><rect x="1282.0" y="507.8" width="6.5" height="11.0" fill="none" stroke="#808000" stroke-width="0.9"/><rect x="1282.9" y="508.5" width="4.7" height="9.6" fill="none" stroke="#ff00ff" stroke-width="0.6"/><path d="M1283.9 513.3 h2.6 M1285.2 512.0 v2.6" stroke="#00b000" stroke-width="0.7"/><rect x="1292.3" y="507.8" width="6.5" height="11.0" fill="none" stroke="#808000" stroke-width="0.9"/><rect x="1293.2" y="508.5" width="4.7" height="9.6" fill="none" stroke="#ff00ff" stroke-width="0.6"/><path d="M1294.3 513.3 h2.6 M1295.6 512.0 v2.6" stroke="#00b000" stroke-width="0.7"/><rect x="1303.5" y="506.1" width="6.5" height="11.0" fill="none" stroke="#808000" stroke-width="0.9"/><rect x="1304.5" y="506.8" width="4.7" height="9.6" fill="none" stroke="#ff00ff" stroke-width="0.6"/><path d="M1305.5 511.6 h2.6 M1306.8 510.3 v2.6" stroke="#00b000" stroke-width="0.7"/><rect x="1309.5" y="506.1" width="6.5" height="11.0" fill="none" stroke="#808000" stroke-width="0.9"/><rect x="1310.5" y="506.8" width="4.7" height="9.6" fill="none" stroke="#ff00ff" stroke-width="0.6"/><path d="M1311.5 511.6 h2.6 M1312.8 510.3 v2.6" stroke="#00b000" stroke-width="0.7"/><rect x="1316.5" y="506.1" width="6.5" height="11.0" fill="none" stroke="#808000" stroke-width="0.9"/><rect x="1317.4" y="506.8" width="4.7" height="9.6" fill="none" stroke="#ff00ff" stroke-width="0.6"/><path d="M1318.4 511.6 h2.6 M1319.7 510.3 v2.6" stroke="#00b000" stroke-width="0.7"/><rect x="1324.2" y="506.1" width="6.5" height="11.0" fill="none" stroke="#808000" stroke-width="0.9"/><rect x="1325.2" y="506.8" width="4.7" height="9.6" fill="none" stroke="#ff00ff" stroke-width="0.6"/><path d="M1326.2 511.6 h2.6 M1327.5 510.3 v2.6" stroke="#00b000" stroke-width="0.7"/><rect x="1364.8" y="485.5" width="6.5" height="11.0" fill="none" stroke="#808000" stroke-width="0.9"/><rect x="1365.7" y="486.2" width="4.7" height="9.6" fill="none" stroke="#ff00ff" stroke-width="0.6"/><path d="M1366.7 491.0 h2.6 M1368.0 489.7 v2.6" stroke="#00b000" stroke-width="0.7"/><rect x="1344.6" y="483.8" width="8.0" height="16.0" fill="none" stroke="#808000" stroke-width="0.9"/><rect x="1345.5" y="484.5" width="6.2" height="14.6" fill="none" stroke="#ff00ff" stroke-width="0.6"/><path d="M1347.3 491.8 h2.6 M1348.6 490.5 v2.6" stroke="#00b000" stroke-width="0.7"/><rect x="1355.4" y="483.8" width="8.0" height="16.0" fill="none" stroke="#808000" stroke-width="0.9"/><rect x="1356.3" y="484.5" width="6.2" height="14.6" fill="none" stroke="#ff00ff" stroke-width="0.6"/><path d="M1358.1 491.8 h2.6 M1359.4 490.5 v2.6" stroke="#00b000" stroke-width="0.7"/><rect x="1298.0" y="474.5" width="15.7" height="19.9" fill="none" stroke="#808000" stroke-width="1"/><path d="M1300 477 l12 15 M1300 486 l6 7" stroke="#ff00ff" stroke-width="0.8"/><rect x="1345.0" y="471.5" width="10.0" height="2.0" fill="#808000" /><rect x="1358.0" y="471.5" width="10.0" height="2.0" fill="#808000" /><text x="1268" y="505" font-family="Liberation Sans" font-weight="bold" font-size="4.5" fill="#ffff00" text-anchor="start">R33 R34 R35</text><text x="1315" y="488" font-family="Liberation Sans" font-weight="bold" font-size="4.5" fill="#ffff00" text-anchor="start">CD8 R30</text><text x="1340" y="506" font-family="Liberation Sans" font-weight="bold" font-size="4.5" fill="#ffff00" text-anchor="start">ND8 ND10</text><circle cx="1373.8" cy="504.8" r="9.5" fill="none" stroke="#ffff00" stroke-width="1"/><rect x="1366.0" y="497.0" width="20.0" height="17.0" fill="none" stroke="#ff00ff" stroke-width="0.8"/><text x="1380" y="490" font-family="Liberation Sans" font-weight="bold" font-size="4.5" fill="#ffff00" text-anchor="start">CD14</text><rect x="1268.6" y="524.0" width="50.0" height="6.0" fill="#000" /><rect x="1268.6" y="524" width="50" height="6" fill="none" stroke="#ff00ff" stroke-width="1"/><circle cx="1293.6" cy="550.8" r="28.5" fill="none" stroke="#ffff00" stroke-width="1"/><path d="M1269.6 565 H1317.6" stroke="#ffff00" stroke-width="1"/><path d="M1271.6 568 H1315.6" stroke="#ffff00" stroke-width="1"/><path d="M1273.6 571 H1313.6" stroke="#ffff00" stroke-width="1"/><path d="M1275.6 574 H1311.6" stroke="#ffff00" stroke-width="1"/><path d="M1271.6 563 H1315.6" stroke="#a0a0a0" stroke-width="1.6"/><text x="1291.6" y="520" font-family="Liberation Sans" font-weight="bold" font-size="6" fill="#ffff00" text-anchor="start">+</text><rect x="1340.3" y="524.0" width="50.0" height="6.0" fill="#000" /><rect x="1340.3" y="524" width="50" height="6" fill="none" stroke="#ff00ff" stroke-width="1"/><circle cx="1365.3" cy="550.8" r="28.5" fill="none" stroke="#ffff00" stroke-width="1"/><path d="M1341.3 565 H1389.3" stroke="#ffff00" stroke-width="1"/><path d="M1343.3 568 H1387.3" stroke="#ffff00" stroke-width="1"/><path d="M1345.3 571 H1385.3" stroke="#ffff00" stroke-width="1"/><path d="M1347.3 574 H1383.3" stroke="#ffff00" stroke-width="1"/><path d="M1343.3 563 H1387.3" stroke="#a0a0a0" stroke-width="1.6"/><text x="1363.3" y="520" font-family="Liberation Sans" font-weight="bold" font-size="6" fill="#ffff00" text-anchor="start">+</text><text x="1264" y="522" font-family="Liberation Sans" font-weight="bold" font-size="4.5" fill="#ffff00" text-anchor="start">CD11</text><text x="1337" y="522" font-family="Liberation Sans" font-weight="bold" font-size="4.5" fill="#ffff00" text-anchor="start">CD9</text><rect x="1425.7" y="524.0" width="13.8" height="33.7" fill="none" stroke="#ffff00" stroke-width="1"/><rect x="1408.5" y="519.7" width="3.4" height="27.6" rx="1.7" fill="none" stroke="#ff00ff" stroke-width="1"/><text x="1415" y="530" font-family="Liberation Sans" font-weight="bold" font-size="5" fill="#ffff00" text-anchor="start" transform="rotate(0 1415 530)">HD4</text><circle cx="1523.0" cy="308.0" r="21.0" fill="none" stroke="#ffff00" stroke-width="1.1"/><path d="M1506 318.0 H1540" stroke="#ffff00" stroke-width="0.9"/><path d="M1508 320.5 H1538" stroke="#ffff00" stroke-width="0.9"/><path d="M1510 323.0 H1536" stroke="#ffff00" stroke-width="0.9"/><rect x="1506.8" y="301.0" width="7.0" height="14.0" fill="none" stroke="#808000" stroke-width="0.9"/><rect x="1507.7" y="301.7" width="5.2" height="12.6" fill="none" stroke="#ff00ff" stroke-width="0.6"/><path d="M1509.0 308.0 h2.6 M1510.3 306.7 v2.6" stroke="#00b000" stroke-width="0.7"/><rect x="1537.0" y="301.0" width="7.0" height="14.0" fill="none" stroke="#808000" stroke-width="0.9"/><rect x="1537.9" y="301.7" width="5.2" height="12.6" fill="none" stroke="#ff00ff" stroke-width="0.6"/><path d="M1539.2 308.0 h2.6 M1540.5 306.7 v2.6" stroke="#00b000" stroke-width="0.7"/><text x="1543" y="295" font-family="Liberation Sans" font-weight="bold" font-size="5" fill="#ffff00" text-anchor="start">C8</text><circle cx="1494.5" cy="340.4" r="15.6" fill="none" stroke="#ffff00" stroke-width="1.1"/><rect x="1483.0" y="334.0" width="6.0" height="12.0" fill="none" stroke="#808000" stroke-width="0.9"/><rect x="1483.9" y="334.7" width="4.2" height="10.6" fill="none" stroke="#ff00ff" stroke-width="0.6"/><path d="M1484.7 340.0 h2.6 M1486.0 338.7 v2.6" stroke="#00b000" stroke-width="0.7"/><rect x="1500.5" y="333.0" width="7.0" height="14.0" fill="none" stroke="#808000" stroke-width="0.9"/><rect x="1501.4" y="333.7" width="5.2" height="12.6" fill="none" stroke="#ff00ff" stroke-width="0.6"/><path d="M1502.7 340.0 h2.6 M1504.0 338.7 v2.6" stroke="#00b000" stroke-width="0.7"/><text x="1482" y="323" font-family="Liberation Sans" font-weight="bold" font-size="5" fill="#ffff00" text-anchor="start">CD13 +</text><rect x="1459.0" y="334.5" width="6.0" height="11.0" fill="none" stroke="#808000" stroke-width="0.9"/><rect x="1459.9" y="335.2" width="4.2" height="9.6" fill="none" stroke="#ff00ff" stroke-width="0.6"/><path d="M1460.7 340.0 h2.6 M1462.0 338.7 v2.6" stroke="#00b000" stroke-width="0.7"/><rect x="1465.0" y="351.5" width="6.0" height="11.0" fill="none" stroke="#808000" stroke-width="0.9"/><rect x="1465.9" y="352.2" width="4.2" height="9.6" fill="none" stroke="#ff00ff" stroke-width="0.6"/><path d="M1466.7 357.0 h2.6 M1468.0 355.7 v2.6" stroke="#00b000" stroke-width="0.7"/><rect x="1476.0" y="352.5" width="6.0" height="11.0" fill="none" stroke="#808000" stroke-width="0.9"/><rect x="1476.9" y="353.2" width="4.2" height="9.6" fill="none" stroke="#ff00ff" stroke-width="0.6"/><path d="M1477.7 358.0 h2.6 M1479.0 356.7 v2.6" stroke="#00b000" stroke-width="0.7"/><text x="1457" y="330" font-family="Liberation Sans" font-weight="bold" font-size="4.5" fill="#ffff00" text-anchor="start">VD2 R9</text><rect x="1510.5" y="352.5" width="7.0" height="15.0" fill="none" stroke="#808000" stroke-width="0.9"/><rect x="1511.4" y="353.2" width="5.2" height="13.6" fill="none" stroke="#ff00ff" stroke-width="0.6"/><path d="M1512.7 360.0 h2.6 M1514.0 358.7 v2.6" stroke="#00b000" stroke-width="0.7"/><rect x="1523.5" y="352.5" width="7.0" height="15.0" fill="none" stroke="#808000" stroke-width="0.9"/><rect x="1524.4" y="353.2" width="5.2" height="13.6" fill="none" stroke="#ff00ff" stroke-width="0.6"/><path d="M1525.7 360.0 h2.6 M1527.0 358.7 v2.6" stroke="#00b000" stroke-width="0.7"/><rect x="1536.0" y="337.0" width="15.0" height="19.0" fill="none" stroke="#808000" stroke-width="1"/><path d="M1537 340 l13 12 M1537 347 l8 8" stroke="#ff00ff" stroke-width="0.8"/><rect x="1552.8" y="285.0" width="11.0" height="22.0" fill="none" stroke="#808000" stroke-width="0.9"/><rect x="1553.7" y="285.7" width="9.2" height="20.6" fill="none" stroke="#ff00ff" stroke-width="0.6"/><path d="M1557.0 296.0 h2.6 M1558.3 294.7 v2.6" stroke="#00b000" stroke-width="0.7"/><rect x="1566.3" y="285.0" width="11.0" height="22.0" fill="none" stroke="#808000" stroke-width="0.9"/><rect x="1567.2" y="285.7" width="9.2" height="20.6" fill="none" stroke="#ff00ff" stroke-width="0.6"/><path d="M1570.5 296.0 h2.6 M1571.8 294.7 v2.6" stroke="#00b000" stroke-width="0.7"/><rect x="1579.5" y="286.0" width="9.0" height="18.0" fill="none" stroke="#808000" stroke-width="0.9"/><rect x="1580.4" y="286.7" width="7.2" height="16.6" fill="none" stroke="#ff00ff" stroke-width="0.6"/><path d="M1582.7 295.0 h2.6 M1584.0 293.7 v2.6" stroke="#00b000" stroke-width="0.7"/><rect x="1554.1" y="309.7" width="9.0" height="18.0" fill="none" stroke="#808000" stroke-width="0.9"/><rect x="1555.0" y="310.4" width="7.2" height="16.6" fill="none" stroke="#ff00ff" stroke-width="0.6"/><path d="M1557.3 318.7 h2.6 M1558.6 317.4 v2.6" stroke="#00b000" stroke-width="0.7"/><rect x="1568.6" y="309.8" width="10.0" height="20.0" fill="none" stroke="#808000" stroke-width="0.9"/><rect x="1569.5" y="310.5" width="8.2" height="18.6" fill="none" stroke="#ff00ff" stroke-width="0.6"/><path d="M1572.3 319.8 h2.6 M1573.6 318.5 v2.6" stroke="#00b000" stroke-width="0.7"/><text x="1553" y="284" font-family="Liberation Sans" font-weight="bold" font-size="4.5" fill="#ffff00" text-anchor="start">R8 R8A R7</text><circle cx="1564.9" cy="351.2" r="10.3" fill="none" stroke="#ffff00" stroke-width="1.1"/><rect x="1555.0" y="341.0" width="20.0" height="20.0" fill="none" stroke="#ff00ff" stroke-width="0.8"/><text x="1564" y="340" font-family="Liberation Sans" font-weight="bold" font-size="4.5" fill="#ffff00" text-anchor="start">+ CD8</text><rect x="1582.0" y="342.5" width="6.0" height="15.0" fill="none" stroke="#808000" stroke-width="0.9"/><rect x="1582.9" y="343.2" width="4.2" height="13.6" fill="none" stroke="#ff00ff" stroke-width="0.6"/><path d="M1583.7 350.0 h2.6 M1585.0 348.7 v2.6" stroke="#00b000" stroke-width="0.7"/><rect x="1590.7" y="288.1" width="14.0" height="73.3" fill="none" stroke="#ffff00" stroke-width="1"/><rect x="1650.5" y="288.1" width="14.1" height="73.3" fill="none" stroke="#ffff00" stroke-width="1"/><path d="M1604.7 318 A27 27 0 0 1 1650.5 318 M1604.7 338 A27 27 0 0 0 1650.5 338" fill="none" stroke="#ffff00" stroke-width="1"/><rect x="1604.7" y="323.0" width="11.3" height="5.0" fill="#000" /><rect x="1604.7" y="323.0" width="11.3" height="5.0" fill="none" stroke="#ffff00" stroke-width="1"/><rect x="1639.0" y="323.0" width="11.5" height="5.0" fill="#000" /><rect x="1639.0" y="323.0" width="11.5" height="5.0" fill="none" stroke="#ffff00" stroke-width="1"/><circle cx="1627.4" cy="324.8" r="14.7" fill="none" stroke="#ffff00" stroke-width="1"/><text x="1613" y="307" font-family="Liberation Sans" font-weight="bold" font-size="4.8" fill="#ffff00" text-anchor="start">PQ20/20_14P</text><text x="1600" y="296" font-family="Liberation Sans" font-weight="bold" font-size="4.5" fill="#ffff00" text-anchor="start">1</text><text x="1600" y="320" font-family="Liberation Sans" font-weight="bold" font-size="4.5" fill="#ffff00" text-anchor="start">3</text><text x="1600" y="336" font-family="Liberation Sans" font-weight="bold" font-size="4.5" fill="#ffff00" text-anchor="start">4</text><text x="1600" y="348" font-family="Liberation Sans" font-weight="bold" font-size="4.5" fill="#ffff00" text-anchor="start">5</text><text x="1600" y="360" font-family="Liberation Sans" font-weight="bold" font-size="4.5" fill="#ffff00" text-anchor="start">6</text><text x="1623" y="285" font-family="Liberation Sans" font-weight="bold" font-size="5" fill="#ffff00" text-anchor="start">T3</text><path d="M1613.3 368 q0 -3.3 4 -3.3 h15 q4 0 4 3.3 M1613.3 378 q0 3.3 4 3.3 h15 q4 0 4 -3.3" fill="none" stroke="#ffff00" stroke-width="1"/><path d="M1613.3 447 q0 -3.3 4 -3.3 h15 q4 0 4 3.3 M1613.3 460 q0 3.3 4 3.3 h15 q4 0 4 -3.3" fill="none" stroke="#ffff00" stroke-width="1"/><rect x="1621.2" y="356" width="3.9" height="112" fill="none" stroke="#ff00ff" stroke-width="1" stroke-dasharray="2 1"/><text x="1632" y="367" font-family="Liberation Sans" font-weight="bold" font-size="4.8" fill="#ffff00" text-anchor="start">CY4</text><text x="1625" y="441" font-family="Liberation Sans" font-weight="bold" font-size="4.8" fill="#ffff00" text-anchor="start">CY5</text><rect x="1612.0" y="387.8" width="28.0" height="15.0" fill="none" stroke="#808000" stroke-width="1"/><path d="M1614 389.8 l12 12 M1626 389.8 l12 12" stroke="#ff00ff" stroke-width="0.8"/><text x="1606" y="386.8" font-family="Liberation Sans" font-weight="bold" font-size="4.8" fill="#ffff00" text-anchor="start">8U</text><rect x="1612.0" y="427.3" width="28.0" height="15.0" fill="none" stroke="#808000" stroke-width="1"/><path d="M1614 429.3 l12 12 M1626 429.3 l12 12" stroke="#ff00ff" stroke-width="0.8"/><text x="1606" y="426.3" font-family="Liberation Sans" font-weight="bold" font-size="4.8" fill="#ffff00" text-anchor="start">8U</text><circle cx="1467.8" cy="403.4" r="8.0" fill="none" stroke="#ffff00" stroke-width="1.1"/><rect x="1460.0" y="393.0" width="17.0" height="20.0" fill="none" stroke="#ff00ff" stroke-width="0.8"/><text x="1460" y="391" font-family="Liberation Sans" font-weight="bold" font-size="5" fill="#ffff00" text-anchor="start">CM7</text><rect x="1481.3" y="378.5" width="6.5" height="12.0" fill="none" stroke="#808000" stroke-width="0.9"/><rect x="1482.2" y="379.2" width="4.7" height="10.6" fill="none" stroke="#ff00ff" stroke-width="0.6"/><path d="M1483.3 384.5 h2.6 M1484.6 383.2 v2.6" stroke="#00b000" stroke-width="0.7"/><rect x="1489.2" y="378.5" width="6.5" height="12.0" fill="none" stroke="#808000" stroke-width="0.9"/><rect x="1490.1" y="379.2" width="4.7" height="10.6" fill="none" stroke="#ff00ff" stroke-width="0.6"/><path d="M1491.1 384.5 h2.6 M1492.4 383.2 v2.6" stroke="#00b000" stroke-width="0.7"/><rect x="1496.2" y="378.5" width="6.5" height="12.0" fill="none" stroke="#808000" stroke-width="0.9"/><rect x="1497.2" y="379.2" width="4.7" height="10.6" fill="none" stroke="#ff00ff" stroke-width="0.6"/><path d="M1498.2 384.5 h2.6 M1499.5 383.2 v2.6" stroke="#00b000" stroke-width="0.7"/><rect x="1503.3" y="378.5" width="6.5" height="12.0" fill="none" stroke="#808000" stroke-width="0.9"/><rect x="1504.2" y="379.2" width="4.7" height="10.6" fill="none" stroke="#ff00ff" stroke-width="0.6"/><path d="M1505.3 384.5 h2.6 M1506.6 383.2 v2.6" stroke="#00b000" stroke-width="0.7"/><rect x="1510.5" y="378.5" width="6.5" height="12.0" fill="none" stroke="#808000" stroke-width="0.9"/><rect x="1511.4" y="379.2" width="4.7" height="10.6" fill="none" stroke="#ff00ff" stroke-width="0.6"/><path d="M1512.4 384.5 h2.6 M1513.7 383.2 v2.6" stroke="#00b000" stroke-width="0.7"/><rect x="1517.7" y="378.5" width="6.5" height="12.0" fill="none" stroke="#808000" stroke-width="0.9"/><rect x="1518.6" y="379.2" width="4.7" height="10.6" fill="none" stroke="#ff00ff" stroke-width="0.6"/><path d="M1519.6 384.5 h2.6 M1520.9 383.2 v2.6" stroke="#00b000" stroke-width="0.7"/><rect x="1524.8" y="378.5" width="6.5" height="12.0" fill="none" stroke="#808000" stroke-width="0.9"/><rect x="1525.7" y="379.2" width="4.7" height="10.6" fill="none" stroke="#ff00ff" stroke-width="0.6"/><path d="M1526.7 384.5 h2.6 M1528.0 383.2 v2.6" stroke="#00b000" stroke-width="0.7"/><rect x="1531.8" y="378.5" width="6.5" height="12.0" fill="none" stroke="#808000" stroke-width="0.9"/><rect x="1532.8" y="379.2" width="4.7" height="10.6" fill="none" stroke="#ff00ff" stroke-width="0.6"/><path d="M1533.8 384.5 h2.6 M1535.1 383.2 v2.6" stroke="#00b000" stroke-width="0.7"/><rect x="1539.0" y="378.5" width="6.5" height="12.0" fill="none" stroke="#808000" stroke-width="0.9"/><rect x="1539.9" y="379.2" width="4.7" height="10.6" fill="none" stroke="#ff00ff" stroke-width="0.6"/><path d="M1540.9 384.5 h2.6 M1542.2 383.2 v2.6" stroke="#00b000" stroke-width="0.7"/><rect x="1546.2" y="378.5" width="6.5" height="12.0" fill="none" stroke="#808000" stroke-width="0.9"/><rect x="1547.1" y="379.2" width="4.7" height="10.6" fill="none" stroke="#ff00ff" stroke-width="0.6"/><path d="M1548.1 384.5 h2.6 M1549.4 383.2 v2.6" stroke="#00b000" stroke-width="0.7"/><rect x="1553.2" y="378.5" width="6.5" height="12.0" fill="none" stroke="#808000" stroke-width="0.9"/><rect x="1554.2" y="379.2" width="4.7" height="10.6" fill="none" stroke="#ff00ff" stroke-width="0.6"/><path d="M1555.2 384.5 h2.6 M1556.5 383.2 v2.6" stroke="#00b000" stroke-width="0.7"/><rect x="1560.3" y="378.5" width="6.5" height="12.0" fill="none" stroke="#808000" stroke-width="0.9"/><rect x="1561.2" y="379.2" width="4.7" height="10.6" fill="none" stroke="#ff00ff" stroke-width="0.6"/><path d="M1562.3 384.5 h2.6 M1563.6 383.2 v2.6" stroke="#00b000" stroke-width="0.7"/><rect x="1569.0" y="378.0" width="8.0" height="16.0" fill="none" stroke="#808000" stroke-width="0.9"/><rect x="1569.9" y="378.7" width="6.2" height="14.6" fill="none" stroke="#ff00ff" stroke-width="0.6"/><path d="M1571.7 386.0 h2.6 M1573.0 384.7 v2.6" stroke="#00b000" stroke-width="0.7"/><text x="1480" y="377" font-family="Liberation Sans" font-weight="bold" font-size="4.5" fill="#ffff00" text-anchor="start">R33 R34 R35 R36 R37 R38</text><rect x="1517.0" y="397.6" width="35.0" height="27.1" fill="none" stroke="#808000" stroke-width="1"/><path d="M1519 400 l22 22 M1530 400 l20 20 M1519 412 l10 10" stroke="#ff00ff" stroke-width="0.8"/><rect x="1507.0" y="411.0" width="7.0" height="12.0" fill="none" stroke="#808000" stroke-width="0.9"/><rect x="1507.9" y="411.7" width="5.2" height="10.6" fill="none" stroke="#ff00ff" stroke-width="0.6"/><path d="M1509.2 417.0 h2.6 M1510.5 415.7 v2.6" stroke="#00b000" stroke-width="0.7"/><rect x="1507.0" y="430.4" width="7.0" height="12.0" fill="none" stroke="#808000" stroke-width="0.9"/><rect x="1507.9" y="431.1" width="5.2" height="10.6" fill="none" stroke="#ff00ff" stroke-width="0.6"/><path d="M1509.2 436.4 h2.6 M1510.5 435.1 v2.6" stroke="#00b000" stroke-width="0.7"/><rect x="1497.9" y="443.4" width="7.0" height="12.0" fill="none" stroke="#808000" stroke-width="0.9"/><rect x="1498.8" y="444.1" width="5.2" height="10.6" fill="none" stroke="#ff00ff" stroke-width="0.6"/><path d="M1500.1 449.4 h2.6 M1501.4 448.1 v2.6" stroke="#00b000" stroke-width="0.7"/><rect x="1518.5" y="444.7" width="7.0" height="12.0" fill="none" stroke="#808000" stroke-width="0.9"/><rect x="1519.4" y="445.4" width="5.2" height="10.6" fill="none" stroke="#ff00ff" stroke-width="0.6"/><path d="M1520.7 450.7 h2.6 M1522.0 449.4 v2.6" stroke="#00b000" stroke-width="0.7"/><rect x="1531.0" y="431.7" width="7.0" height="12.0" fill="none" stroke="#808000" stroke-width="0.9"/><rect x="1531.9" y="432.4" width="5.2" height="10.6" fill="none" stroke="#ff00ff" stroke-width="0.6"/><path d="M1533.2 437.7 h2.6 M1534.5 436.4 v2.6" stroke="#00b000" stroke-width="0.7"/><rect x="1540.7" y="429.0" width="7.0" height="12.0" fill="none" stroke="#808000" stroke-width="0.9"/><rect x="1541.6" y="429.7" width="5.2" height="10.6" fill="none" stroke="#ff00ff" stroke-width="0.6"/><path d="M1542.9 435.0 h2.6 M1544.2 433.7 v2.6" stroke="#00b000" stroke-width="0.7"/><rect x="1542.5" y="446.6" width="7.0" height="12.0" fill="none" stroke="#808000" stroke-width="0.9"/><rect x="1543.4" y="447.3" width="5.2" height="10.6" fill="none" stroke="#ff00ff" stroke-width="0.6"/><path d="M1544.7 452.6 h2.6 M1546.0 451.3 v2.6" stroke="#00b000" stroke-width="0.7"/><rect x="1554.3" y="446.6" width="7.0" height="12.0" fill="none" stroke="#808000" stroke-width="0.9"/><rect x="1555.2" y="447.3" width="5.2" height="10.6" fill="none" stroke="#ff00ff" stroke-width="0.6"/><path d="M1556.5 452.6 h2.6 M1557.8 451.3 v2.6" stroke="#00b000" stroke-width="0.7"/><rect x="1531.0" y="453.7" width="7.0" height="12.0" fill="none" stroke="#808000" stroke-width="0.9"/><rect x="1531.9" y="454.4" width="5.2" height="10.6" fill="none" stroke="#ff00ff" stroke-width="0.6"/><path d="M1533.2 459.7 h2.6 M1534.5 458.4 v2.6" stroke="#00b000" stroke-width="0.7"/><rect x="1553.5" y="396.7" width="7.0" height="12.0" fill="none" stroke="#808000" stroke-width="0.9"/><rect x="1554.4" y="397.4" width="5.2" height="10.6" fill="none" stroke="#ff00ff" stroke-width="0.6"/><path d="M1555.7 402.7 h2.6 M1557.0 401.4 v2.6" stroke="#00b000" stroke-width="0.7"/><rect x="1562.0" y="396.7" width="7.0" height="12.0" fill="none" stroke="#808000" stroke-width="0.9"/><rect x="1562.9" y="397.4" width="5.2" height="10.6" fill="none" stroke="#ff00ff" stroke-width="0.6"/><path d="M1564.2 402.7 h2.6 M1565.5 401.4 v2.6" stroke="#00b000" stroke-width="0.7"/><rect x="1569.8" y="396.7" width="7.0" height="12.0" fill="none" stroke="#808000" stroke-width="0.9"/><rect x="1570.7" y="397.4" width="5.2" height="10.6" fill="none" stroke="#ff00ff" stroke-width="0.6"/><path d="M1572.0 402.7 h2.6 M1573.3 401.4 v2.6" stroke="#00b000" stroke-width="0.7"/><rect x="1553.5" y="413.6" width="7.0" height="12.0" fill="none" stroke="#808000" stroke-width="0.9"/><rect x="1554.4" y="414.3" width="5.2" height="10.6" fill="none" stroke="#ff00ff" stroke-width="0.6"/><path d="M1555.7 419.6 h2.6 M1557.0 418.3 v2.6" stroke="#00b000" stroke-width="0.7"/><rect x="1562.0" y="413.6" width="7.0" height="12.0" fill="none" stroke="#808000" stroke-width="0.9"/><rect x="1562.9" y="414.3" width="5.2" height="10.6" fill="none" stroke="#ff00ff" stroke-width="0.6"/><path d="M1564.2 419.6 h2.6 M1565.5 418.3 v2.6" stroke="#00b000" stroke-width="0.7"/><rect x="1572.5" y="413.6" width="7.0" height="12.0" fill="none" stroke="#808000" stroke-width="0.9"/><rect x="1573.4" y="414.3" width="5.2" height="10.6" fill="none" stroke="#ff00ff" stroke-width="0.6"/><path d="M1574.7 419.6 h2.6 M1576.0 418.3 v2.6" stroke="#00b000" stroke-width="0.7"/><rect x="1582.8" y="387.7" width="7.0" height="12.0" fill="none" stroke="#808000" stroke-width="0.9"/><rect x="1583.7" y="388.4" width="5.2" height="10.6" fill="none" stroke="#ff00ff" stroke-width="0.6"/><path d="M1585.0 393.7 h2.6 M1586.3 392.4 v2.6" stroke="#00b000" stroke-width="0.7"/><rect x="1582.8" y="408.4" width="7.0" height="12.0" fill="none" stroke="#808000" stroke-width="0.9"/><rect x="1583.7" y="409.1" width="5.2" height="10.6" fill="none" stroke="#ff00ff" stroke-width="0.6"/><path d="M1585.0 414.4 h2.6 M1586.3 413.1 v2.6" stroke="#00b000" stroke-width="0.7"/><rect x="1591.2" y="427.2" width="7.0" height="12.0" fill="none" stroke="#808000" stroke-width="0.9"/><rect x="1592.1" y="427.9" width="5.2" height="10.6" fill="none" stroke="#ff00ff" stroke-width="0.6"/><path d="M1593.4 433.2 h2.6 M1594.7 431.9 v2.6" stroke="#00b000" stroke-width="0.7"/><rect x="1553.5" y="429.0" width="7.0" height="12.0" fill="none" stroke="#808000" stroke-width="0.9"/><rect x="1554.4" y="429.7" width="5.2" height="10.6" fill="none" stroke="#ff00ff" stroke-width="0.6"/><path d="M1555.7 435.0 h2.6 M1557.0 433.7 v2.6" stroke="#00b000" stroke-width="0.7"/><rect x="1563.3" y="431.7" width="7.0" height="12.0" fill="none" stroke="#808000" stroke-width="0.9"/><rect x="1564.2" y="432.4" width="5.2" height="10.6" fill="none" stroke="#ff00ff" stroke-width="0.6"/><path d="M1565.5 437.7 h2.6 M1566.8 436.4 v2.6" stroke="#00b000" stroke-width="0.7"/><rect x="1572.5" y="431.7" width="7.0" height="12.0" fill="none" stroke="#808000" stroke-width="0.9"/><rect x="1573.4" y="432.4" width="5.2" height="10.6" fill="none" stroke="#ff00ff" stroke-width="0.6"/><path d="M1574.7 437.7 h2.6 M1576.0 436.4 v2.6" stroke="#00b000" stroke-width="0.7"/><rect x="1474.5" y="453.7" width="7.0" height="12.0" fill="none" stroke="#808000" stroke-width="0.9"/><rect x="1475.4" y="454.4" width="5.2" height="10.6" fill="none" stroke="#ff00ff" stroke-width="0.6"/><path d="M1476.7 459.7 h2.6 M1478.0 458.4 v2.6" stroke="#00b000" stroke-width="0.7"/><rect x="1568.8" y="455.6" width="9.0" height="16.0" fill="none" stroke="#808000" stroke-width="0.9"/><rect x="1569.7" y="456.3" width="7.2" height="14.6" fill="none" stroke="#ff00ff" stroke-width="0.6"/><path d="M1572.0 463.6 h2.6 M1573.3 462.3 v2.6" stroke="#00b000" stroke-width="0.7"/><rect x="1441" y="430" width="33" height="60" fill="url(#dr)"/><path d="M1441 445 H1470 q3 0 3 3 v3 q0 3 -3 3 H1452" fill="none" stroke="#ffff00" stroke-width="1.1"/><path d="M1441 460 H1470 q3 0 3 3 v3 q0 3 -3 3 H1452" fill="none" stroke="#ffff00" stroke-width="1.1"/><path d="M1441 475 H1470 q3 0 3 3 v3 q0 3 -3 3 H1452" fill="none" stroke="#ffff00" stroke-width="1.1"/><rect x="1441" y="497" width="32" height="54" fill="url(#dr)"/><path d="M1441 505 H1470 q3 0 3 3 v3 q0 3 -3 3 H1452" fill="none" stroke="#ffff00" stroke-width="1.1"/><path d="M1441 525 H1470 q3 0 3 3 v3 q0 3 -3 3 H1452" fill="none" stroke="#ffff00" stroke-width="1.1"/><path d="M1441 545 H1470 q3 0 3 3 v3 q0 3 -3 3 H1452" fill="none" stroke="#ffff00" stroke-width="1.1"/><rect x="1477.0" y="446.0" width="6.0" height="12.0" fill="none" stroke="#808000" stroke-width="0.9"/><rect x="1477.9" y="446.7" width="4.2" height="10.6" fill="none" stroke="#ff00ff" stroke-width="0.6"/><path d="M1478.7 452.0 h2.6 M1480.0 450.7 v2.6" stroke="#00b000" stroke-width="0.7"/><rect x="1488.0" y="450.0" width="6.0" height="12.0" fill="none" stroke="#808000" stroke-width="0.9"/><rect x="1488.9" y="450.7" width="4.2" height="10.6" fill="none" stroke="#ff00ff" stroke-width="0.6"/><path d="M1489.7 456.0 h2.6 M1491.0 454.7 v2.6" stroke="#00b000" stroke-width="0.7"/><rect x="1477.0" y="462.0" width="6.0" height="12.0" fill="none" stroke="#808000" stroke-width="0.9"/><rect x="1477.9" y="462.7" width="4.2" height="10.6" fill="none" stroke="#ff00ff" stroke-width="0.6"/><path d="M1478.7 468.0 h2.6 M1480.0 466.7 v2.6" stroke="#00b000" stroke-width="0.7"/><rect x="1488.0" y="464.0" width="6.0" height="12.0" fill="none" stroke="#808000" stroke-width="0.9"/><rect x="1488.9" y="464.7" width="4.2" height="10.6" fill="none" stroke="#ff00ff" stroke-width="0.6"/><path d="M1489.7 470.0 h2.6 M1491.0 468.7 v2.6" stroke="#00b000" stroke-width="0.7"/><rect x="1500.0" y="442.0" width="6.0" height="12.0" fill="none" stroke="#808000" stroke-width="0.9"/><rect x="1500.9" y="442.7" width="4.2" height="10.6" fill="none" stroke="#ff00ff" stroke-width="0.6"/><path d="M1501.7 448.0 h2.6 M1503.0 446.7 v2.6" stroke="#00b000" stroke-width="0.7"/><rect x="1509.0" y="434.0" width="6.0" height="12.0" fill="none" stroke="#808000" stroke-width="0.9"/><rect x="1509.9" y="434.7" width="4.2" height="10.6" fill="none" stroke="#ff00ff" stroke-width="0.6"/><path d="M1510.7 440.0 h2.6 M1512.0 438.7 v2.6" stroke="#00b000" stroke-width="0.7"/><rect x="1519.0" y="434.0" width="6.0" height="12.0" fill="none" stroke="#808000" stroke-width="0.9"/><rect x="1519.9" y="434.7" width="4.2" height="10.6" fill="none" stroke="#ff00ff" stroke-width="0.6"/><path d="M1520.7 440.0 h2.6 M1522.0 438.7 v2.6" stroke="#00b000" stroke-width="0.7"/><rect x="1535.0" y="430.0" width="6.0" height="12.0" fill="none" stroke="#808000" stroke-width="0.9"/><rect x="1535.9" y="430.7" width="4.2" height="10.6" fill="none" stroke="#ff00ff" stroke-width="0.6"/><path d="M1536.7 436.0 h2.6 M1538.0 434.7 v2.6" stroke="#00b000" stroke-width="0.7"/><rect x="1548.0" y="430.0" width="6.0" height="12.0" fill="none" stroke="#808000" stroke-width="0.9"/><rect x="1548.9" y="430.7" width="4.2" height="10.6" fill="none" stroke="#ff00ff" stroke-width="0.6"/><path d="M1549.7 436.0 h2.6 M1551.0 434.7 v2.6" stroke="#00b000" stroke-width="0.7"/><rect x="1562.0" y="439.0" width="6.0" height="12.0" fill="none" stroke="#808000" stroke-width="0.9"/><rect x="1562.9" y="439.7" width="4.2" height="10.6" fill="none" stroke="#ff00ff" stroke-width="0.6"/><path d="M1563.7 445.0 h2.6 M1565.0 443.7 v2.6" stroke="#00b000" stroke-width="0.7"/><rect x="1575.0" y="434.0" width="6.0" height="12.0" fill="none" stroke="#808000" stroke-width="0.9"/><rect x="1575.9" y="434.7" width="4.2" height="10.6" fill="none" stroke="#ff00ff" stroke-width="0.6"/><path d="M1576.7 440.0 h2.6 M1578.0 438.7 v2.6" stroke="#00b000" stroke-width="0.7"/><rect x="1589.0" y="430.0" width="6.0" height="12.0" fill="none" stroke="#808000" stroke-width="0.9"/><rect x="1589.9" y="430.7" width="4.2" height="10.6" fill="none" stroke="#ff00ff" stroke-width="0.6"/><path d="M1590.7 436.0 h2.6 M1592.0 434.7 v2.6" stroke="#00b000" stroke-width="0.7"/><rect x="1603.0" y="434.0" width="6.0" height="12.0" fill="none" stroke="#808000" stroke-width="0.9"/><rect x="1603.9" y="434.7" width="4.2" height="10.6" fill="none" stroke="#ff00ff" stroke-width="0.6"/><path d="M1604.7 440.0 h2.6 M1606.0 438.7 v2.6" stroke="#00b000" stroke-width="0.7"/><rect x="1615.0" y="430.0" width="6.0" height="12.0" fill="none" stroke="#808000" stroke-width="0.9"/><rect x="1615.9" y="430.7" width="4.2" height="10.6" fill="none" stroke="#ff00ff" stroke-width="0.6"/><path d="M1616.7 436.0 h2.6 M1618.0 434.7 v2.6" stroke="#00b000" stroke-width="0.7"/><path d="M1516 489.5 v-12 q0 -6 6 -6 h24 q6 0 6 6 v12" fill="none" stroke="#ffff00" stroke-width="1"/><text x="1516" y="469" font-family="Liberation Sans" font-weight="bold" font-size="5" fill="#ffff00" text-anchor="start">CD22</text><rect x="1477.0" y="492.0" width="14.0" height="85.5" fill="none" stroke="#ffff00" stroke-width="1"/><rect x="1557.0" y="492.0" width="13.3" height="85.5" fill="none" stroke="#ffff00" stroke-width="1"/><circle cx="1523.4" cy="534.9" r="19.6" fill="none" stroke="#ffff00" stroke-width="1"/><path d="M1494 518 A32.3 32.3 0 0 1 1553 518 M1494 552 A32.3 32.3 0 0 0 1553 552" fill="none" stroke="#ffff00" stroke-width="1"/><text x="1506" y="537" font-family="Liberation Sans" font-weight="bold" font-size="4.8" fill="#ffff00" text-anchor="start">PQ20/20_14P</text><text x="1477" y="488" font-family="Liberation Sans" font-weight="bold" font-size="5" fill="#ffff00" text-anchor="start">T4</text><rect x="1502.0" y="516.5" width="6.0" height="11.0" fill="none" stroke="#808000" stroke-width="0.9"/><rect x="1502.9" y="517.2" width="4.2" height="9.6" fill="none" stroke="#ff00ff" stroke-width="0.6"/><path d="M1503.7 522.0 h2.6 M1505.0 520.7 v2.6" stroke="#00b000" stroke-width="0.7"/><rect x="1512.0" y="535.0" width="6.0" height="10.0" fill="none" stroke="#808000" stroke-width="0.9"/><rect x="1512.9" y="535.7" width="4.2" height="8.6" fill="none" stroke="#ff00ff" stroke-width="0.6"/><rect x="1495.0" y="540.0" width="6.0" height="10.0" fill="none" stroke="#808000" stroke-width="0.9"/><rect x="1495.9" y="540.7" width="4.2" height="8.6" fill="none" stroke="#ff00ff" stroke-width="0.6"/><rect x="1576.8" y="466.9" width="17.6" height="105.2" fill="none" stroke="#ffff00" stroke-width="1"/><rect x="1668.7" y="466.9" width="18.2" height="105.2" fill="none" stroke="#ffff00" stroke-width="1"/><circle cx="1631.5" cy="519.5" r="23.8" fill="none" stroke="#ffff00" stroke-width="1"/><path d="M1598 497 A38 38 0 0 1 1665 497 M1598 542 A38 38 0 0 0 1665 542 M1594.4 496 L1604 506 V533 L1594.4 543 M1668.7 496 L1659 506 V533 L1668.7 543" fill="none" stroke="#ffff00" stroke-width="1"/><text x="1631.5" y="521.5" font-family="Liberation Sans" font-weight="bold" font-size="5" fill="#ffff00" text-anchor="middle">PQ26/25_18P</text><text x="1586" y="455" font-family="Liberation Sans" font-weight="bold" font-size="5" fill="#ffff00" text-anchor="start">T5</text><rect x="1574.5" y="444.5" width="7.0" height="11.0" fill="none" stroke="#808000" stroke-width="0.9"/><rect x="1575.4" y="445.2" width="5.2" height="9.6" fill="none" stroke="#ff00ff" stroke-width="0.6"/><path d="M1576.7 450.0 h2.6 M1578.0 448.7 v2.6" stroke="#00b000" stroke-width="0.7"/><rect x="1669.0" y="284.0" width="88.0" height="20.0" fill="url(#dg)"/><path d="M1670 300 V286 h4 V298 h4 V286 h4 V298 h4 V286 h4 V298 h4 V286 h4 V298 h4 V286 h4 V298 h4 V286 h4 V298 h4 V286 h4 V298 h4 V286 h4 V300" fill="none" stroke="#ffff00" stroke-width="1"/><rect x="1677.0" y="303.8" width="33.8" height="12.6" fill="none" stroke="#ffff00" stroke-width="1"/><rect x="1677.0" y="303.8" width="33.8" height="1.7" fill="#ffff00" /><rect x="1722.5" y="294.5" width="7.0" height="13.0" fill="none" stroke="#808000" stroke-width="0.9"/><rect x="1723.4" y="295.2" width="5.2" height="11.6" fill="none" stroke="#ff00ff" stroke-width="0.6"/><path d="M1724.7 301.0 h2.6 M1726.0 299.7 v2.6" stroke="#00b000" stroke-width="0.7"/><text x="1716" y="290" font-family="Liberation Sans" font-weight="bold" font-size="4.5" fill="#ffff00" text-anchor="start">R? </text><text x="1793" y="302" font-family="Liberation Sans" font-weight="bold" font-size="8.5" fill="#ffff00" text-anchor="middle" transform="rotate(-90 1793 302)">GND</text><text x="1792" y="347" font-family="Liberation Sans" font-weight="bold" font-size="8.5" fill="#ffff00" text-anchor="middle" transform="rotate(-90 1792 347)">DC48V</text><rect x="1806.0" y="294.0" width="2.0" height="18.0" fill="none" stroke="#ffff00" stroke-width="1"/><text x="1797" y="287" font-family="Liberation Sans" font-weight="bold" font-size="4.5" fill="#ffff00" text-anchor="start">J6</text><circle cx="1680.5" cy="340.0" r="12.0" fill="none" stroke="#ffff00" stroke-width="1.1"/><circle cx="1710.8" cy="340.0" r="14.0" fill="none" stroke="#ffff00" stroke-width="1.1"/><circle cx="1742.8" cy="323.0" r="16.0" fill="none" stroke="#ffff00" stroke-width="1.1"/><circle cx="1734.4" cy="345.0" r="7.0" fill="none" stroke="#ffff00" stroke-width="1"/><path d="M1688 335 l-10 14 M1692 340 l-8 12 M1750 315 l-12 18 M1755 322 l-9 14" stroke="#ffff00" stroke-width="0.8"/><text x="1670" y="326" font-family="Liberation Sans" font-weight="bold" font-size="4.5" fill="#ffff00" text-anchor="start">C4  L4</text><text x="1762" y="311" font-family="Liberation Sans" font-weight="bold" font-size="4.5" fill="#ffff00" text-anchor="start">C5</text><rect x="1795.0" y="360.0" width="13.0" height="71.0" fill="url(#dg)"/><rect x="1806.0" y="340.0" width="2.0" height="18.0" fill="none" stroke="#ffff00" stroke-width="1"/><circle cx="1793.0" cy="383.5" r="13.0" fill="none" stroke="#ffff00" stroke-width="1.1"/><text x="1796" y="363" font-family="Liberation Sans" font-weight="bold" font-size="4.5" fill="#ffff00" text-anchor="start">CD18</text><rect x="1769.5" y="351" width="19.5" height="64" fill="url(#dr)"/><rect x="1646.5" y="361.5" width="6.5" height="11.0" fill="none" stroke="#808000" stroke-width="0.9"/><rect x="1647.4" y="362.2" width="4.7" height="9.6" fill="none" stroke="#ff00ff" stroke-width="0.6"/><path d="M1648.4 367.0 h2.6 M1649.7 365.7 v2.6" stroke="#00b000" stroke-width="0.7"/><rect x="1646.5" y="383.0" width="6.5" height="11.0" fill="none" stroke="#808000" stroke-width="0.9"/><rect x="1647.4" y="383.7" width="4.7" height="9.6" fill="none" stroke="#ff00ff" stroke-width="0.6"/><path d="M1648.4 388.5 h2.6 M1649.7 387.2 v2.6" stroke="#00b000" stroke-width="0.7"/><rect x="1646.5" y="401.9" width="6.5" height="11.0" fill="none" stroke="#808000" stroke-width="0.9"/><rect x="1647.4" y="402.6" width="4.7" height="9.6" fill="none" stroke="#ff00ff" stroke-width="0.6"/><path d="M1648.4 407.4 h2.6 M1649.7 406.1 v2.6" stroke="#00b000" stroke-width="0.7"/><rect x="1654.5" y="401.5" width="6.5" height="11.0" fill="none" stroke="#808000" stroke-width="0.9"/><rect x="1655.5" y="402.2" width="4.7" height="9.6" fill="none" stroke="#ff00ff" stroke-width="0.6"/><path d="M1656.5 407.0 h2.6 M1657.8 405.7 v2.6" stroke="#00b000" stroke-width="0.7"/><rect x="1662.2" y="401.5" width="6.5" height="11.0" fill="none" stroke="#808000" stroke-width="0.9"/><rect x="1663.1" y="402.2" width="4.7" height="9.6" fill="none" stroke="#ff00ff" stroke-width="0.6"/><path d="M1664.1 407.0 h2.6 M1665.4 405.7 v2.6" stroke="#00b000" stroke-width="0.7"/><rect x="1669.2" y="379.5" width="6.5" height="11.0" fill="none" stroke="#808000" stroke-width="0.9"/><rect x="1670.1" y="380.2" width="4.7" height="9.6" fill="none" stroke="#ff00ff" stroke-width="0.6"/><path d="M1671.1 385.0 h2.6 M1672.4 383.7 v2.6" stroke="#00b000" stroke-width="0.7"/><rect x="1669.2" y="388.9" width="6.5" height="11.0" fill="none" stroke="#808000" stroke-width="0.9"/><rect x="1670.1" y="389.6" width="4.7" height="9.6" fill="none" stroke="#ff00ff" stroke-width="0.6"/><path d="M1671.1 394.4 h2.6 M1672.4 393.1 v2.6" stroke="#00b000" stroke-width="0.7"/><rect x="1677.8" y="388.5" width="6.5" height="11.0" fill="none" stroke="#808000" stroke-width="0.9"/><rect x="1678.7" y="389.2" width="4.7" height="9.6" fill="none" stroke="#ff00ff" stroke-width="0.6"/><path d="M1679.7 394.0 h2.6 M1681.0 392.7 v2.6" stroke="#00b000" stroke-width="0.7"/><rect x="1690.8" y="369.5" width="6.5" height="11.0" fill="none" stroke="#808000" stroke-width="0.9"/><rect x="1691.7" y="370.2" width="4.7" height="9.6" fill="none" stroke="#ff00ff" stroke-width="0.6"/><path d="M1692.7 375.0 h2.6 M1694.0 373.7 v2.6" stroke="#00b000" stroke-width="0.7"/><rect x="1690.8" y="384.5" width="6.5" height="11.0" fill="none" stroke="#808000" stroke-width="0.9"/><rect x="1691.7" y="385.2" width="4.7" height="9.6" fill="none" stroke="#ff00ff" stroke-width="0.6"/><path d="M1692.7 390.0 h2.6 M1694.0 388.7 v2.6" stroke="#00b000" stroke-width="0.7"/><rect x="1698.3" y="397.9" width="6.5" height="11.0" fill="none" stroke="#808000" stroke-width="0.9"/><rect x="1699.2" y="398.6" width="4.7" height="9.6" fill="none" stroke="#ff00ff" stroke-width="0.6"/><path d="M1700.3 403.4 h2.6 M1701.6 402.1 v2.6" stroke="#00b000" stroke-width="0.7"/><rect x="1706.0" y="397.5" width="6.5" height="11.0" fill="none" stroke="#808000" stroke-width="0.9"/><rect x="1706.9" y="398.2" width="4.7" height="9.6" fill="none" stroke="#ff00ff" stroke-width="0.6"/><path d="M1707.9 403.0 h2.6 M1709.2 401.7 v2.6" stroke="#00b000" stroke-width="0.7"/><rect x="1722.0" y="366.9" width="6.5" height="11.0" fill="none" stroke="#808000" stroke-width="0.9"/><rect x="1722.9" y="367.6" width="4.7" height="9.6" fill="none" stroke="#ff00ff" stroke-width="0.6"/><path d="M1723.9 372.4 h2.6 M1725.2 371.1 v2.6" stroke="#00b000" stroke-width="0.7"/><rect x="1730.7" y="366.9" width="6.5" height="11.0" fill="none" stroke="#808000" stroke-width="0.9"/><rect x="1731.6" y="367.6" width="4.7" height="9.6" fill="none" stroke="#ff00ff" stroke-width="0.6"/><path d="M1732.6 372.4 h2.6 M1733.9 371.1 v2.6" stroke="#00b000" stroke-width="0.7"/><rect x="1737.7" y="366.9" width="6.5" height="11.0" fill="none" stroke="#808000" stroke-width="0.9"/><rect x="1738.6" y="367.6" width="4.7" height="9.6" fill="none" stroke="#ff00ff" stroke-width="0.6"/><path d="M1739.6 372.4 h2.6 M1740.9 371.1 v2.6" stroke="#00b000" stroke-width="0.7"/><rect x="1722.0" y="379.8" width="6.5" height="11.0" fill="none" stroke="#808000" stroke-width="0.9"/><rect x="1722.9" y="380.5" width="4.7" height="9.6" fill="none" stroke="#ff00ff" stroke-width="0.6"/><path d="M1723.9 385.3 h2.6 M1725.2 384.0 v2.6" stroke="#00b000" stroke-width="0.7"/><rect x="1728.5" y="379.8" width="6.5" height="11.0" fill="none" stroke="#808000" stroke-width="0.9"/><rect x="1729.4" y="380.5" width="4.7" height="9.6" fill="none" stroke="#ff00ff" stroke-width="0.6"/><path d="M1730.4 385.3 h2.6 M1731.7 384.0 v2.6" stroke="#00b000" stroke-width="0.7"/><rect x="1736.5" y="379.8" width="6.5" height="11.0" fill="none" stroke="#808000" stroke-width="0.9"/><rect x="1737.5" y="380.5" width="4.7" height="9.6" fill="none" stroke="#ff00ff" stroke-width="0.6"/><path d="M1738.5 385.3 h2.6 M1739.8 384.0 v2.6" stroke="#00b000" stroke-width="0.7"/><rect x="1728.5" y="393.8" width="6.5" height="11.0" fill="none" stroke="#808000" stroke-width="0.9"/><rect x="1729.4" y="394.5" width="4.7" height="9.6" fill="none" stroke="#ff00ff" stroke-width="0.6"/><path d="M1730.4 399.3 h2.6 M1731.7 398.0 v2.6" stroke="#00b000" stroke-width="0.7"/><rect x="1736.5" y="393.8" width="6.5" height="11.0" fill="none" stroke="#808000" stroke-width="0.9"/><rect x="1737.5" y="394.5" width="4.7" height="9.6" fill="none" stroke="#ff00ff" stroke-width="0.6"/><path d="M1738.5 399.3 h2.6 M1739.8 398.0 v2.6" stroke="#00b000" stroke-width="0.7"/><rect x="1744.7" y="392.8" width="6.5" height="11.0" fill="none" stroke="#808000" stroke-width="0.9"/><rect x="1745.6" y="393.5" width="4.7" height="9.6" fill="none" stroke="#ff00ff" stroke-width="0.6"/><path d="M1746.6 398.3 h2.6 M1747.9 397.0 v2.6" stroke="#00b000" stroke-width="0.7"/><rect x="1751.8" y="392.8" width="6.5" height="11.0" fill="none" stroke="#808000" stroke-width="0.9"/><rect x="1752.7" y="393.5" width="4.7" height="9.6" fill="none" stroke="#ff00ff" stroke-width="0.6"/><path d="M1753.7 398.3 h2.6 M1755.0 397.0 v2.6" stroke="#00b000" stroke-width="0.7"/><rect x="1759.0" y="392.8" width="6.5" height="11.0" fill="none" stroke="#808000" stroke-width="0.9"/><rect x="1759.9" y="393.5" width="4.7" height="9.6" fill="none" stroke="#ff00ff" stroke-width="0.6"/><path d="M1760.9 398.3 h2.6 M1762.2 397.0 v2.6" stroke="#00b000" stroke-width="0.7"/><rect x="1766.2" y="392.8" width="6.5" height="11.0" fill="none" stroke="#808000" stroke-width="0.9"/><rect x="1767.2" y="393.5" width="4.7" height="9.6" fill="none" stroke="#ff00ff" stroke-width="0.6"/><path d="M1768.2 398.3 h2.6 M1769.5 397.0 v2.6" stroke="#00b000" stroke-width="0.7"/><rect x="1751.0" y="404.5" width="6.5" height="11.0" fill="none" stroke="#808000" stroke-width="0.9"/><rect x="1752.0" y="405.2" width="4.7" height="9.6" fill="none" stroke="#ff00ff" stroke-width="0.6"/><path d="M1753.0 410.0 h2.6 M1754.3 408.7 v2.6" stroke="#00b000" stroke-width="0.7"/><rect x="1758.0" y="404.5" width="6.5" height="11.0" fill="none" stroke="#808000" stroke-width="0.9"/><rect x="1759.0" y="405.2" width="4.7" height="9.6" fill="none" stroke="#ff00ff" stroke-width="0.6"/><path d="M1760.0 410.0 h2.6 M1761.3 408.7 v2.6" stroke="#00b000" stroke-width="0.7"/><rect x="1766.2" y="404.5" width="6.5" height="11.0" fill="none" stroke="#808000" stroke-width="0.9"/><rect x="1767.2" y="405.2" width="4.7" height="9.6" fill="none" stroke="#ff00ff" stroke-width="0.6"/><path d="M1768.2 410.0 h2.6 M1769.5 408.7 v2.6" stroke="#00b000" stroke-width="0.7"/><rect x="1746.8" y="375.5" width="6.5" height="11.0" fill="none" stroke="#808000" stroke-width="0.9"/><rect x="1747.7" y="376.2" width="4.7" height="9.6" fill="none" stroke="#ff00ff" stroke-width="0.6"/><path d="M1748.7 381.0 h2.6 M1750.0 379.7 v2.6" stroke="#00b000" stroke-width="0.7"/><rect x="1640.8" y="416.5" width="6.5" height="11.0" fill="none" stroke="#808000" stroke-width="0.9"/><rect x="1641.7" y="417.2" width="4.7" height="9.6" fill="none" stroke="#ff00ff" stroke-width="0.6"/><path d="M1642.7 422.0 h2.6 M1644.0 420.7 v2.6" stroke="#00b000" stroke-width="0.7"/><rect x="1648.8" y="416.5" width="6.5" height="11.0" fill="none" stroke="#808000" stroke-width="0.9"/><rect x="1649.7" y="417.2" width="4.7" height="9.6" fill="none" stroke="#ff00ff" stroke-width="0.6"/><path d="M1650.7 422.0 h2.6 M1652.0 420.7 v2.6" stroke="#00b000" stroke-width="0.7"/><rect x="1656.8" y="416.5" width="6.5" height="11.0" fill="none" stroke="#808000" stroke-width="0.9"/><rect x="1657.7" y="417.2" width="4.7" height="9.6" fill="none" stroke="#ff00ff" stroke-width="0.6"/><path d="M1658.7 422.0 h2.6 M1660.0 420.7 v2.6" stroke="#00b000" stroke-width="0.7"/><rect x="1702.0" y="351.0" width="6.0" height="10.0" fill="none" stroke="#808000" stroke-width="0.9"/><rect x="1702.9" y="351.7" width="4.2" height="8.6" fill="none" stroke="#ff00ff" stroke-width="0.6"/><rect x="1710.0" y="351.0" width="6.0" height="10.0" fill="none" stroke="#808000" stroke-width="0.9"/><rect x="1710.9" y="351.7" width="4.2" height="8.6" fill="none" stroke="#ff00ff" stroke-width="0.6"/><rect x="1717.0" y="351.0" width="6.0" height="10.0" fill="none" stroke="#808000" stroke-width="0.9"/><rect x="1717.9" y="351.7" width="4.2" height="8.6" fill="none" stroke="#ff00ff" stroke-width="0.6"/><rect x="1724.0" y="351.0" width="6.0" height="10.0" fill="none" stroke="#808000" stroke-width="0.9"/><rect x="1724.9" y="351.7" width="4.2" height="8.6" fill="none" stroke="#ff00ff" stroke-width="0.6"/><rect x="1669.0" y="353.5" width="8.0" height="17.0" fill="none" stroke="#808000" stroke-width="0.9"/><rect x="1669.9" y="354.2" width="6.2" height="15.6" fill="none" stroke="#ff00ff" stroke-width="0.6"/><path d="M1671.7 362.0 h2.6 M1673.0 360.7 v2.6" stroke="#00b000" stroke-width="0.7"/><rect x="1703.6" y="371.3" width="16.2" height="19.4" fill="none" stroke="#808000" stroke-width="1"/><path d="M1705 374 l13 14 M1705 382 l7 7 M1710 372 l9 9" stroke="#ff00ff" stroke-width="0.8"/><rect x="1756.5" y="367.0" width="15.1" height="19.4" fill="none" stroke="#808000" stroke-width="1"/><path d="M1758 369 l12 14 M1758 377 l7 8" stroke="#ff00ff" stroke-width="0.8"/><text x="1686" y="354" font-family="Liberation Sans" font-weight="bold" font-size="4.5" fill="#808000" text-anchor="start">R???</text><text x="1705" y="366" font-family="Liberation Sans" font-weight="bold" font-size="4.5" fill="#808000" text-anchor="start">8U7</text><text x="1730" y="357" font-family="Liberation Sans" font-weight="bold" font-size="4.5" fill="#808000" text-anchor="start">R??</text><text x="1730" y="407" font-family="Liberation Sans" font-weight="bold" font-size="4.5" fill="#808000" text-anchor="start">R??</text><text x="1750" y="418" font-family="Liberation Sans" font-weight="bold" font-size="4.5" fill="#808000" text-anchor="start">C???</text><rect x="1693.0" y="421.5" width="51.6" height="3.7" fill="none" stroke="#ffff00" stroke-width="1"/><rect x="1700.0" y="560.0" width="108.0" height="17.0" fill="url(#dg)"/><rect x="1745.0" y="432.0" width="15.0" height="28.0" fill="url(#dg)"/><path d="M1720 440 H1743 q2 0 2 2 q0 2 -2 2 H1722 V449" fill="none" stroke="#ffff00" stroke-width="1.1"/><path d="M1720 462 H1743 q2 0 2 2 q0 2 -2 2 H1722 V471" fill="none" stroke="#ffff00" stroke-width="1.1"/><path d="M1720 484 H1743 q2 0 2 2 q0 2 -2 2 H1722 V493" fill="none" stroke="#ffff00" stroke-width="1.1"/><path d="M1720 506 H1743 q2 0 2 2 q0 2 -2 2 H1722 V515" fill="none" stroke="#ffff00" stroke-width="1.1"/><path d="M1720 528 H1743 q2 0 2 2 q0 2 -2 2 H1722 V537" fill="none" stroke="#ffff00" stroke-width="1.1"/><path d="M1720 550 H1743 q2 0 2 2 q0 2 -2 2 H1722 V559" fill="none" stroke="#ffff00" stroke-width="1.1"/><path d="M1720 570 H1743 q2 0 2 2 q0 2 -2 2 H1722 V579" fill="none" stroke="#ffff00" stroke-width="1.1"/><rect x="1700.0" y="443.0" width="14.7" height="33.6" fill="none" stroke="#ffff00" stroke-width="1"/><rect x="1711.0" y="443.0" width="3.7" height="33.6" fill="#ffff00" /><rect x="1700.0" y="522.3" width="14.7" height="32.7" fill="none" stroke="#ffff00" stroke-width="1"/><rect x="1711.0" y="522.3" width="3.7" height="32.7" fill="#ffff00" /><path d="M1685 462 l14 -12 M1685 540 l14 -12" stroke="#ff00ff" stroke-width="3"/><path d="M1685 462 l14 -12 M1685 540 l14 -12" stroke="#000" stroke-width="1.2"/><rect x="1694" y="573" width="50" height="3.5" rx="1.7" fill="none" stroke="#ffff00" stroke-width="1"/><text x="1693" y="571" font-family="Liberation Sans" font-weight="bold" font-size="5" fill="#ffff00" text-anchor="start">HS8</text><text x="1693" y="518" font-family="Liberation Sans" font-weight="bold" font-size="5" fill="#ffff00" text-anchor="start">HD6</text><text x="1693" y="440" font-family="Liberation Sans" font-weight="bold" font-size="5" fill="#ffff00" text-anchor="start">HD5</text><circle cx="1789.8" cy="442.0" r="16.0" fill="none" stroke="#ffff00" stroke-width="1.1"/><path d="M1778.8 451 H1800.8" stroke="#ffff00" stroke-width="0.9"/><path d="M1780.3 453 H1799.3" stroke="#ffff00" stroke-width="0.9"/><path d="M1781.8 455 H1797.8" stroke="#ffff00" stroke-width="0.9"/><text x="1795.8" y="425" font-family="Liberation Sans" font-weight="bold" font-size="4.5" fill="#ffff00" text-anchor="start">+ CD</text><circle cx="1766.5" cy="470.6" r="16.0" fill="none" stroke="#ffff00" stroke-width="1.1"/><path d="M1755.5 479.6 H1777.5" stroke="#ffff00" stroke-width="0.9"/><path d="M1757.0 481.6 H1776.0" stroke="#ffff00" stroke-width="0.9"/><path d="M1758.5 483.6 H1774.5" stroke="#ffff00" stroke-width="0.9"/><text x="1772.5" y="453.6" font-family="Liberation Sans" font-weight="bold" font-size="4.5" fill="#ffff00" text-anchor="start">+ CD</text><circle cx="1794.0" cy="492.0" r="16.0" fill="none" stroke="#ffff00" stroke-width="1.1"/><path d="M1783.0 501 H1805.0" stroke="#ffff00" stroke-width="0.9"/><path d="M1784.5 503 H1803.5" stroke="#ffff00" stroke-width="0.9"/><path d="M1786.0 505 H1802.0" stroke="#ffff00" stroke-width="0.9"/><text x="1800" y="475" font-family="Liberation Sans" font-weight="bold" font-size="4.5" fill="#ffff00" text-anchor="start">+ CD</text><circle cx="1766.5" cy="513.7" r="16.0" fill="none" stroke="#ffff00" stroke-width="1.1"/><path d="M1755.5 522.7 H1777.5" stroke="#ffff00" stroke-width="0.9"/><path d="M1757.0 524.7 H1776.0" stroke="#ffff00" stroke-width="0.9"/><path d="M1758.5 526.7 H1774.5" stroke="#ffff00" stroke-width="0.9"/><text x="1772.5" y="496.70000000000005" font-family="Liberation Sans" font-weight="bold" font-size="4.5" fill="#ffff00" text-anchor="start">+ CD</text><circle cx="1794.0" cy="534.4" r="16.0" fill="none" stroke="#ffff00" stroke-width="1.1"/><path d="M1783.0 543.4 H1805.0" stroke="#ffff00" stroke-width="0.9"/><path d="M1784.5 545.4 H1803.5" stroke="#ffff00" stroke-width="0.9"/><path d="M1786.0 547.4 H1802.0" stroke="#ffff00" stroke-width="0.9"/><text x="1800" y="517.4" font-family="Liberation Sans" font-weight="bold" font-size="4.5" fill="#ffff00" text-anchor="start">+ CD</text><circle cx="1766.5" cy="556.0" r="16.0" fill="none" stroke="#ffff00" stroke-width="1.1"/><path d="M1755.5 565 H1777.5" stroke="#ffff00" stroke-width="0.9"/><path d="M1757.0 567 H1776.0" stroke="#ffff00" stroke-width="0.9"/><path d="M1758.5 569 H1774.5" stroke="#ffff00" stroke-width="0.9"/><text x="1772.5" y="539" font-family="Liberation Sans" font-weight="bold" font-size="4.5" fill="#ffff00" text-anchor="start">+ CD</text><text x="1785" y="510" font-family="Liberation Sans" font-weight="bold" font-size="4" fill="#ffff00" text-anchor="start"></text><rect x="1805.0" y="470.0" width="4.0" height="90.0" fill="#ff00ff" /><text x="1650" y="438" font-family="Liberation Sans" font-weight="bold" font-size="4.5" fill="#ffff00" text-anchor="start">CT8</text><rect x="1642.0" y="430.5" width="6.0" height="11.0" fill="none" stroke="#808000" stroke-width="0.9"/><rect x="1642.9" y="431.2" width="4.2" height="9.6" fill="none" stroke="#ff00ff" stroke-width="0.6"/><path d="M1643.7 436.0 h2.6 M1645.0 434.7 v2.6" stroke="#00b000" stroke-width="0.7"/><rect x="1657.0" y="434.5" width="6.0" height="11.0" fill="none" stroke="#808000" stroke-width="0.9"/><rect x="1657.9" y="435.2" width="4.2" height="9.6" fill="none" stroke="#ff00ff" stroke-width="0.6"/><path d="M1658.7 440.0 h2.6 M1660.0 438.7 v2.6" stroke="#00b000" stroke-width="0.7"/><rect x="1669.0" y="434.5" width="6.0" height="11.0" fill="none" stroke="#808000" stroke-width="0.9"/><rect x="1669.9" y="435.2" width="4.2" height="9.6" fill="none" stroke="#ff00ff" stroke-width="0.6"/><path d="M1670.7 440.0 h2.6 M1672.0 438.7 v2.6" stroke="#00b000" stroke-width="0.7"/><ellipse cx="1091" cy="462" rx="5" ry="3.2" fill="#c4c4c4"/><ellipse cx="1091" cy="462" rx="2.25" ry="1.4400000000000002" fill="#10a0a0"/><ellipse cx="1091" cy="478" rx="5" ry="3.2" fill="#c4c4c4"/><ellipse cx="1091" cy="478" rx="2.25" ry="1.4400000000000002" fill="#10a0a0"/><circle cx="1093.0" cy="388.0" r="3.3" fill="#c4c4c4"/><circle cx="1093.0" cy="388.0" r="1.4" fill="#10a0a0"/><circle cx="1093.0" cy="420.0" r="3.3" fill="#c4c4c4"/><circle cx="1093.0" cy="420.0" r="1.4" fill="#10a0a0"/><circle cx="1127.0" cy="318.0" r="4.9" fill="#0000ff"/><circle cx="1127.0" cy="318.0" r="3.5" fill="#c4c4c4"/><circle cx="1127.0" cy="318.0" r="1.5" fill="#10a0a0"/><circle cx="1159.0" cy="318.0" r="4.9" fill="#0000ff"/><circle cx="1159.0" cy="318.0" r="3.5" fill="#c4c4c4"/><circle cx="1159.0" cy="318.0" r="1.5" fill="#10a0a0"/><circle cx="1127.0" cy="360.0" r="4.9" fill="#0000ff"/><circle cx="1127.0" cy="360.0" r="3.5" fill="#c4c4c4"/><circle cx="1127.0" cy="360.0" r="1.5" fill="#10a0a0"/><circle cx="1159.0" cy="360.0" r="4.9" fill="#0000ff"/><circle cx="1159.0" cy="360.0" r="3.5" fill="#c4c4c4"/><circle cx="1159.0" cy="360.0" r="1.5" fill="#10a0a0"/><circle cx="1183.0" cy="318.0" r="3.5" fill="#c4c4c4"/><circle cx="1183.0" cy="318.0" r="1.5" fill="#10a0a0"/><circle cx="1183.0" cy="335.0" r="3.5" fill="#c4c4c4"/><circle cx="1183.0" cy="335.0" r="1.5" fill="#10a0a0"/><circle cx="1183.0" cy="351.0" r="3.5" fill="#c4c4c4"/><circle cx="1183.0" cy="351.0" r="1.5" fill="#10a0a0"/><circle cx="1183.0" cy="368.0" r="3.5" fill="#c4c4c4"/><circle cx="1183.0" cy="368.0" r="1.5" fill="#10a0a0"/><circle cx="1206.0" cy="320.0" r="5.0" fill="#0000ff"/><circle cx="1206.0" cy="320.0" r="3.6" fill="#c4c4c4"/><circle cx="1206.0" cy="320.0" r="1.5" fill="#10a0a0"/><circle cx="1206.0" cy="368.0" r="3.6" fill="#c4c4c4"/><circle cx="1206.0" cy="368.0" r="1.5" fill="#10a0a0"/><circle cx="1117.0" cy="396.0" r="4.9" fill="#0000ff"/><circle cx="1117.0" cy="396.0" r="3.5" fill="#c4c4c4"/><circle cx="1117.0" cy="396.0" r="1.5" fill="#10a0a0"/><circle cx="1165.0" cy="396.0" r="4.9" fill="#0000ff"/><circle cx="1165.0" cy="396.0" r="3.5" fill="#c4c4c4"/><circle cx="1165.0" cy="396.0" r="1.5" fill="#10a0a0"/><circle cx="1123.0" cy="420.0" r="4.7" fill="#0000ff"/><circle cx="1123.0" cy="420.0" r="3.3" fill="#c4c4c4"/><circle cx="1123.0" cy="420.0" r="1.4" fill="#10a0a0"/><circle cx="1165.0" cy="420.0" r="4.7" fill="#0000ff"/><circle cx="1165.0" cy="420.0" r="3.3" fill="#c4c4c4"/><circle cx="1165.0" cy="420.0" r="1.4" fill="#10a0a0"/><circle cx="1122.6" cy="455.0" r="4.7" fill="#0000ff"/><circle cx="1122.6" cy="455.0" r="3.3" fill="#c4c4c4"/><circle cx="1122.6" cy="455.0" r="1.4" fill="#10a0a0"/><circle cx="1164.0" cy="455.0" r="4.7" fill="#0000ff"/><circle cx="1164.0" cy="455.0" r="3.3" fill="#c4c4c4"/><circle cx="1164.0" cy="455.0" r="1.4" fill="#10a0a0"/><circle cx="1102.0" cy="485.5" r="3.2" fill="#c4c4c4"/><circle cx="1102.0" cy="485.5" r="1.3" fill="#10a0a0"/><circle cx="1135.0" cy="485.0" r="3.2" fill="#c4c4c4"/><circle cx="1135.0" cy="485.0" r="1.3" fill="#10a0a0"/><circle cx="1093.3" cy="506.8" r="3.2" fill="#c4c4c4"/><circle cx="1093.3" cy="506.8" r="1.3" fill="#10a0a0"/><circle cx="1093.3" cy="538.5" r="3.2" fill="#c4c4c4"/><circle cx="1093.3" cy="538.5" r="1.3" fill="#10a0a0"/><circle cx="1115.7" cy="506.8" r="3.2" fill="#c4c4c4"/><circle cx="1115.7" cy="506.8" r="1.3" fill="#10a0a0"/><circle cx="1115.7" cy="538.5" r="3.2" fill="#c4c4c4"/><circle cx="1115.7" cy="538.5" r="1.3" fill="#10a0a0"/><circle cx="1140.0" cy="563.0" r="4.3" fill="#c4c4c4"/><circle cx="1140.0" cy="563.0" r="1.8" fill="#10a0a0"/><circle cx="1165.0" cy="563.0" r="4.3" fill="#c4c4c4"/><circle cx="1165.0" cy="563.0" r="1.8" fill="#10a0a0"/><circle cx="1154.0" cy="482.0" r="5.0" fill="#0000ff"/><circle cx="1154.0" cy="482.0" r="3.6" fill="#c4c4c4"/><circle cx="1154.0" cy="482.0" r="1.5" fill="#10a0a0"/><circle cx="1202.0" cy="482.0" r="5.0" fill="#0000ff"/><circle cx="1202.0" cy="482.0" r="3.6" fill="#c4c4c4"/><circle cx="1202.0" cy="482.0" r="1.5" fill="#10a0a0"/><circle cx="1146.0" cy="508.0" r="4.7" fill="#0000ff"/><circle cx="1146.0" cy="508.0" r="3.3" fill="#c4c4c4"/><circle cx="1146.0" cy="508.0" r="1.4" fill="#10a0a0"/><circle cx="1169.0" cy="515.0" r="4.7" fill="#0000ff"/><circle cx="1169.0" cy="515.0" r="3.3" fill="#c4c4c4"/><circle cx="1169.0" cy="515.0" r="1.4" fill="#10a0a0"/><circle cx="1146.0" cy="531.0" r="4.7" fill="#0000ff"/><circle cx="1146.0" cy="531.0" r="3.3" fill="#c4c4c4"/><circle cx="1146.0" cy="531.0" r="1.4" fill="#10a0a0"/><circle cx="1169.0" cy="538.0" r="4.7" fill="#0000ff"/><circle cx="1169.0" cy="538.0" r="3.3" fill="#c4c4c4"/><circle cx="1169.0" cy="538.0" r="1.4" fill="#10a0a0"/><circle cx="1201.0" cy="515.0" r="4.7" fill="#0000ff"/><circle cx="1201.0" cy="515.0" r="3.3" fill="#c4c4c4"/><circle cx="1201.0" cy="515.0" r="1.4" fill="#10a0a0"/><circle cx="1194.0" cy="538.0" r="4.7" fill="#0000ff"/><circle cx="1194.0" cy="538.0" r="3.3" fill="#c4c4c4"/><circle cx="1194.0" cy="538.0" r="1.4" fill="#10a0a0"/><circle cx="1221.0" cy="495.6" r="3.3" fill="#c4c4c4"/><circle cx="1221.0" cy="495.6" r="1.4" fill="#10a0a0"/><circle cx="1245.0" cy="503.0" r="4.7" fill="#0000ff"/><circle cx="1245.0" cy="503.0" r="3.3" fill="#c4c4c4"/><circle cx="1245.0" cy="503.0" r="1.4" fill="#10a0a0"/><circle cx="1221.0" cy="543.7" r="3.3" fill="#c4c4c4"/><circle cx="1221.0" cy="543.7" r="1.4" fill="#10a0a0"/><circle cx="1245.0" cy="543.7" r="3.3" fill="#c4c4c4"/><circle cx="1245.0" cy="543.7" r="1.4" fill="#10a0a0"/><circle cx="1184.0" cy="566.0" r="2.2" fill="#c4c4c4"/><circle cx="1184.0" cy="566.0" r="0.9" fill="#10a0a0"/><circle cx="1200.0" cy="566.0" r="2.2" fill="#c4c4c4"/><circle cx="1200.0" cy="566.0" r="0.9" fill="#10a0a0"/><circle cx="1236.5" cy="443.8" r="5.6" fill="#0000ff"/><circle cx="1236.5" cy="443.8" r="4.2" fill="#c4c4c4"/><circle cx="1236.5" cy="443.8" r="1.8" fill="#10a0a0"/><circle cx="1231.0" cy="468.0" r="4.6" fill="#0000ff"/><circle cx="1231.0" cy="468.0" r="3.2" fill="#c4c4c4"/><circle cx="1231.0" cy="468.0" r="1.3" fill="#10a0a0"/><circle cx="1253.7" cy="475.0" r="4.6" fill="#0000ff"/><circle cx="1253.7" cy="475.0" r="3.2" fill="#c4c4c4"/><circle cx="1253.7" cy="475.0" r="1.3" fill="#10a0a0"/><circle cx="1232.9" cy="304.5" r="5.0" fill="#0000ff"/><circle cx="1232.9" cy="304.5" r="3.6" fill="#c4c4c4"/><circle cx="1232.9" cy="304.5" r="1.5" fill="#10a0a0"/><circle cx="1248.9" cy="304.5" r="5.0" fill="#0000ff"/><circle cx="1248.9" cy="304.5" r="3.6" fill="#c4c4c4"/><circle cx="1248.9" cy="304.5" r="1.5" fill="#10a0a0"/><circle cx="1264.7" cy="304.5" r="3.6" fill="#c4c4c4"/><circle cx="1264.7" cy="304.5" r="1.5" fill="#10a0a0"/><circle cx="1288.3" cy="304.5" r="3.6" fill="#c4c4c4"/><circle cx="1288.3" cy="304.5" r="1.5" fill="#10a0a0"/><circle cx="1304.5" cy="304.5" r="5.0" fill="#0000ff"/><circle cx="1304.5" cy="304.5" r="3.6" fill="#c4c4c4"/><circle cx="1304.5" cy="304.5" r="1.5" fill="#10a0a0"/><circle cx="1320.4" cy="304.5" r="5.0" fill="#0000ff"/><circle cx="1320.4" cy="304.5" r="3.6" fill="#c4c4c4"/><circle cx="1320.4" cy="304.5" r="1.5" fill="#10a0a0"/><circle cx="1232.9" cy="400.2" r="3.6" fill="#c4c4c4"/><circle cx="1232.9" cy="400.2" r="1.5" fill="#10a0a0"/><circle cx="1264.7" cy="400.2" r="3.6" fill="#c4c4c4"/><circle cx="1264.7" cy="400.2" r="1.5" fill="#10a0a0"/><circle cx="1320.4" cy="400.2" r="3.6" fill="#c4c4c4"/><circle cx="1320.4" cy="400.2" r="1.5" fill="#10a0a0"/><circle cx="1345.0" cy="304.5" r="5.0" fill="#0000ff"/><circle cx="1345.0" cy="304.5" r="3.6" fill="#c4c4c4"/><circle cx="1345.0" cy="304.5" r="1.5" fill="#10a0a0"/><circle cx="1361.0" cy="304.5" r="5.0" fill="#0000ff"/><circle cx="1361.0" cy="304.5" r="3.6" fill="#c4c4c4"/><circle cx="1361.0" cy="304.5" r="1.5" fill="#10a0a0"/><circle cx="1376.8" cy="304.5" r="3.6" fill="#c4c4c4"/><circle cx="1376.8" cy="304.5" r="1.5" fill="#10a0a0"/><circle cx="1400.4" cy="304.5" r="3.6" fill="#c4c4c4"/><circle cx="1400.4" cy="304.5" r="1.5" fill="#10a0a0"/><circle cx="1416.6" cy="304.5" r="5.0" fill="#0000ff"/><circle cx="1416.6" cy="304.5" r="3.6" fill="#c4c4c4"/><circle cx="1416.6" cy="304.5" r="1.5" fill="#10a0a0"/><circle cx="1432.5" cy="304.5" r="5.0" fill="#0000ff"/><circle cx="1432.5" cy="304.5" r="3.6" fill="#c4c4c4"/><circle cx="1432.5" cy="304.5" r="1.5" fill="#10a0a0"/><circle cx="1345.0" cy="400.2" r="3.6" fill="#c4c4c4"/><circle cx="1345.0" cy="400.2" r="1.5" fill="#10a0a0"/><circle cx="1376.8" cy="400.2" r="3.6" fill="#c4c4c4"/><circle cx="1376.8" cy="400.2" r="1.5" fill="#10a0a0"/><circle cx="1432.5" cy="400.2" r="3.6" fill="#c4c4c4"/><circle cx="1432.5" cy="400.2" r="1.5" fill="#10a0a0"/><circle cx="1229.0" cy="427.5" r="3.0" fill="#c4c4c4"/><circle cx="1229.0" cy="427.5" r="1.3" fill="#10a0a0"/><circle cx="1286.0" cy="427.5" r="3.0" fill="#c4c4c4"/><circle cx="1286.0" cy="427.5" r="1.3" fill="#10a0a0"/><circle cx="1236.0" cy="444.0" r="4.4" fill="#c4c4c4"/><circle cx="1236.0" cy="444.0" r="1.8" fill="#10a0a0"/><circle cx="1293.6" cy="444.0" r="4.4" fill="#c4c4c4"/><circle cx="1293.6" cy="444.0" r="1.8" fill="#10a0a0"/><circle cx="1364.7" cy="419.0" r="3.5" fill="#c4c4c4"/><circle cx="1364.7" cy="419.0" r="1.5" fill="#10a0a0"/><circle cx="1357.0" cy="431.0" r="3.3" fill="#c4c4c4"/><circle cx="1357.0" cy="431.0" r="1.4" fill="#10a0a0"/><circle cx="1373.0" cy="431.0" r="3.3" fill="#c4c4c4"/><circle cx="1373.0" cy="431.0" r="1.4" fill="#10a0a0"/><circle cx="1336.0" cy="447.0" r="4.4" fill="#c4c4c4"/><circle cx="1336.0" cy="447.0" r="1.8" fill="#10a0a0"/><circle cx="1394.0" cy="447.0" r="4.4" fill="#c4c4c4"/><circle cx="1394.0" cy="447.0" r="1.8" fill="#10a0a0"/><circle cx="1431.7" cy="455.0" r="3.4" fill="#c4c4c4"/><circle cx="1431.7" cy="455.0" r="1.4" fill="#10a0a0"/><circle cx="1431.7" cy="471.0" r="3.4" fill="#c4c4c4"/><circle cx="1431.7" cy="471.0" r="1.4" fill="#10a0a0"/><circle cx="1419.8" cy="463.0" r="4.8" fill="#0000ff"/><circle cx="1419.8" cy="463.0" r="3.4" fill="#c4c4c4"/><circle cx="1419.8" cy="463.0" r="1.4" fill="#10a0a0"/><circle cx="1373.8" cy="500.3" r="3.0" fill="#c4c4c4"/><circle cx="1373.8" cy="500.3" r="1.3" fill="#10a0a0"/><circle cx="1373.8" cy="509.3" r="3.0" fill="#c4c4c4"/><circle cx="1373.8" cy="509.3" r="1.3" fill="#10a0a0"/><circle cx="1293.6" cy="538.6" r="5.2" fill="#0000ff"/><circle cx="1293.6" cy="538.6" r="3.8" fill="#c4c4c4"/><circle cx="1293.6" cy="538.6" r="1.6" fill="#10a0a0"/><circle cx="1293.6" cy="562.6" r="5.2" fill="#0000ff"/><circle cx="1293.6" cy="562.6" r="3.8" fill="#c4c4c4"/><circle cx="1293.6" cy="562.6" r="1.6" fill="#10a0a0"/><circle cx="1365.3" cy="538.6" r="5.2" fill="#0000ff"/><circle cx="1365.3" cy="538.6" r="3.8" fill="#c4c4c4"/><circle cx="1365.3" cy="538.6" r="1.6" fill="#10a0a0"/><circle cx="1365.3" cy="562.6" r="5.2" fill="#0000ff"/><circle cx="1365.3" cy="562.6" r="3.8" fill="#c4c4c4"/><circle cx="1365.3" cy="562.6" r="1.6" fill="#10a0a0"/><circle cx="1431.8" cy="533.0" r="3.4" fill="#c4c4c4"/><circle cx="1431.8" cy="533.0" r="1.4" fill="#10a0a0"/><circle cx="1431.8" cy="549.3" r="3.4" fill="#c4c4c4"/><circle cx="1431.8" cy="549.3" r="1.4" fill="#10a0a0"/><circle cx="1420.0" cy="540.0" r="3.4" fill="#c4c4c4"/><circle cx="1420.0" cy="540.0" r="1.4" fill="#10a0a0"/><circle cx="1523.0" cy="300.0" r="3.3" fill="#c4c4c4"/><circle cx="1523.0" cy="300.0" r="1.4" fill="#10a0a0"/><circle cx="1523.0" cy="316.3" r="3.3" fill="#c4c4c4"/><circle cx="1523.0" cy="316.3" r="1.4" fill="#10a0a0"/><circle cx="1494.5" cy="332.5" r="4.6" fill="#0000ff"/><circle cx="1494.5" cy="332.5" r="3.2" fill="#c4c4c4"/><circle cx="1494.5" cy="332.5" r="1.3" fill="#10a0a0"/><circle cx="1494.5" cy="348.5" r="4.6" fill="#0000ff"/><circle cx="1494.5" cy="348.5" r="3.2" fill="#c4c4c4"/><circle cx="1494.5" cy="348.5" r="1.3" fill="#10a0a0"/><circle cx="1564.9" cy="348.5" r="3.0" fill="#c4c4c4"/><circle cx="1564.9" cy="348.5" r="1.3" fill="#10a0a0"/><circle cx="1564.9" cy="356.6" r="3.0" fill="#c4c4c4"/><circle cx="1564.9" cy="356.6" r="1.3" fill="#10a0a0"/><circle cx="1595.0" cy="317.2" r="3.3" fill="#c4c4c4"/><circle cx="1595.0" cy="317.2" r="1.4" fill="#10a0a0"/><circle cx="1595.0" cy="332.9" r="3.3" fill="#c4c4c4"/><circle cx="1595.0" cy="332.9" r="1.4" fill="#10a0a0"/><circle cx="1595.0" cy="344.9" r="3.3" fill="#c4c4c4"/><circle cx="1595.0" cy="344.9" r="1.4" fill="#10a0a0"/><circle cx="1595.0" cy="356.9" r="3.3" fill="#c4c4c4"/><circle cx="1595.0" cy="356.9" r="1.4" fill="#10a0a0"/><circle cx="1595.0" cy="293.0" r="4.2" fill="#c4c4c4"/><circle cx="1595.0" cy="293.0" r="1.8" fill="#10a0a0"/><ellipse cx="1659.7" cy="301.3" rx="3.6" ry="2.6" fill="#c4c4c4"/><ellipse cx="1659.7" cy="301.3" rx="1.62" ry="1.1700000000000002" fill="#10a0a0"/><ellipse cx="1659.7" cy="309" rx="3.6" ry="2.6" fill="#c4c4c4"/><ellipse cx="1659.7" cy="309" rx="1.62" ry="1.1700000000000002" fill="#10a0a0"/><ellipse cx="1659.7" cy="341" rx="3.6" ry="2.6" fill="#c4c4c4"/><ellipse cx="1659.7" cy="341" rx="1.62" ry="1.1700000000000002" fill="#10a0a0"/><ellipse cx="1659.7" cy="348.5" rx="3.6" ry="2.6" fill="#c4c4c4"/><ellipse cx="1659.7" cy="348.5" rx="1.62" ry="1.1700000000000002" fill="#10a0a0"/><circle cx="1608.3" cy="373.6" r="5.2" fill="#ff0000"/><circle cx="1608.3" cy="373.6" r="3.6" fill="#c4c4c4"/><circle cx="1608.3" cy="373.6" r="1.5" fill="#10a0a0"/><circle cx="1637.4" cy="373.6" r="5.2" fill="#ff0000"/><circle cx="1637.4" cy="373.6" r="3.6" fill="#c4c4c4"/><circle cx="1637.4" cy="373.6" r="1.5" fill="#10a0a0"/><circle cx="1605.7" cy="453.9" r="3.4" fill="#c4c4c4"/><circle cx="1605.7" cy="453.9" r="1.4" fill="#10a0a0"/><circle cx="1637.4" cy="453.9" r="5.2" fill="#ff0000"/><circle cx="1637.4" cy="453.9" r="3.6" fill="#c4c4c4"/><circle cx="1637.4" cy="453.9" r="1.5" fill="#10a0a0"/><circle cx="1462.5" cy="403.4" r="2.8" fill="#c4c4c4"/><circle cx="1462.5" cy="403.4" r="1.2" fill="#10a0a0"/><circle cx="1471.0" cy="403.4" r="2.8" fill="#c4c4c4"/><circle cx="1471.0" cy="403.4" r="1.2" fill="#10a0a0"/><circle cx="1448.0" cy="434.0" r="4.0" fill="#c4c4c4"/><circle cx="1448.0" cy="434.0" r="1.7" fill="#10a0a0"/><circle cx="1447.0" cy="512.0" r="4.2" fill="#c4c4c4"/><circle cx="1447.0" cy="512.0" r="1.8" fill="#10a0a0"/><circle cx="1517.7" cy="480.6" r="5.2" fill="#ff0000"/><circle cx="1517.7" cy="480.6" r="3.5" fill="#c4c4c4"/><circle cx="1517.7" cy="480.6" r="1.5" fill="#10a0a0"/><circle cx="1549.5" cy="480.6" r="5.2" fill="#ff0000"/><circle cx="1549.5" cy="480.6" r="3.5" fill="#c4c4c4"/><circle cx="1549.5" cy="480.6" r="1.5" fill="#10a0a0"/><circle cx="1483.0" cy="499.4" r="4.8" fill="#0000ff"/><circle cx="1483.0" cy="499.4" r="3.4" fill="#c4c4c4"/><circle cx="1483.0" cy="499.4" r="1.4" fill="#10a0a0"/><circle cx="1564.0" cy="499.4" r="3.4" fill="#c4c4c4"/><circle cx="1564.0" cy="499.4" r="1.4" fill="#10a0a0"/><circle cx="1483.0" cy="511.6" r="4.8" fill="#0000ff"/><circle cx="1483.0" cy="511.6" r="3.4" fill="#c4c4c4"/><circle cx="1483.0" cy="511.6" r="1.4" fill="#10a0a0"/><circle cx="1564.0" cy="511.6" r="3.4" fill="#c4c4c4"/><circle cx="1564.0" cy="511.6" r="1.4" fill="#10a0a0"/><circle cx="1584.0" cy="491.6" r="4.8" fill="#0000ff"/><circle cx="1584.0" cy="491.6" r="3.4" fill="#c4c4c4"/><circle cx="1584.0" cy="491.6" r="1.4" fill="#10a0a0"/><circle cx="1584.0" cy="507.7" r="4.8" fill="#0000ff"/><circle cx="1584.0" cy="507.7" r="3.4" fill="#c4c4c4"/><circle cx="1584.0" cy="507.7" r="1.4" fill="#10a0a0"/><circle cx="1584.0" cy="547.5" r="4.8" fill="#0000ff"/><circle cx="1584.0" cy="547.5" r="3.4" fill="#c4c4c4"/><circle cx="1584.0" cy="547.5" r="1.4" fill="#10a0a0"/><circle cx="1584.0" cy="563.3" r="4.8" fill="#0000ff"/><circle cx="1584.0" cy="563.3" r="3.4" fill="#c4c4c4"/><circle cx="1584.0" cy="563.3" r="1.4" fill="#10a0a0"/><circle cx="1693.1" cy="295.3" r="4.4" fill="#c4c4c4"/><circle cx="1693.1" cy="295.3" r="1.8" fill="#10a0a0"/><circle cx="1685.4" cy="310.5" r="3.4" fill="#c4c4c4"/><circle cx="1685.4" cy="310.5" r="1.4" fill="#10a0a0"/><circle cx="1701.7" cy="310.5" r="3.4" fill="#c4c4c4"/><circle cx="1701.7" cy="310.5" r="1.4" fill="#10a0a0"/><circle cx="1693.1" cy="323.0" r="3.3" fill="#c4c4c4"/><circle cx="1693.1" cy="323.0" r="1.4" fill="#10a0a0"/><circle cx="1801.0" cy="295.0" r="3.8" fill="#c4c4c4"/><circle cx="1801.0" cy="295.0" r="1.6" fill="#10a0a0"/><circle cx="1801.0" cy="311.3" r="3.8" fill="#c4c4c4"/><circle cx="1801.0" cy="311.3" r="1.6" fill="#10a0a0"/><circle cx="1676.3" cy="335.7" r="3.2" fill="#c4c4c4"/><circle cx="1676.3" cy="335.7" r="1.3" fill="#10a0a0"/><circle cx="1684.7" cy="344.0" r="3.2" fill="#c4c4c4"/><circle cx="1684.7" cy="344.0" r="1.3" fill="#10a0a0"/><circle cx="1703.2" cy="340.0" r="3.2" fill="#c4c4c4"/><circle cx="1703.2" cy="340.0" r="1.3" fill="#10a0a0"/><circle cx="1719.2" cy="340.0" r="3.2" fill="#c4c4c4"/><circle cx="1719.2" cy="340.0" r="1.3" fill="#10a0a0"/><circle cx="1736.9" cy="316.4" r="3.2" fill="#c4c4c4"/><circle cx="1736.9" cy="316.4" r="1.3" fill="#10a0a0"/><circle cx="1748.7" cy="329.0" r="3.2" fill="#c4c4c4"/><circle cx="1748.7" cy="329.0" r="1.3" fill="#10a0a0"/><circle cx="1731.0" cy="342.5" r="3.2" fill="#c4c4c4"/><circle cx="1731.0" cy="342.5" r="1.3" fill="#10a0a0"/><circle cx="1736.9" cy="348.3" r="3.2" fill="#c4c4c4"/><circle cx="1736.9" cy="348.3" r="1.3" fill="#10a0a0"/><circle cx="1801.0" cy="341.5" r="3.8" fill="#c4c4c4"/><circle cx="1801.0" cy="341.5" r="1.6" fill="#10a0a0"/><circle cx="1801.0" cy="357.5" r="3.8" fill="#c4c4c4"/><circle cx="1801.0" cy="357.5" r="1.6" fill="#10a0a0"/><circle cx="1790.0" cy="383.5" r="3.2" fill="#c4c4c4"/><circle cx="1790.0" cy="383.5" r="1.3" fill="#10a0a0"/><circle cx="1801.3" cy="383.5" r="3.2" fill="#c4c4c4"/><circle cx="1801.3" cy="383.5" r="1.3" fill="#10a0a0"/><circle cx="1698.8" cy="366.0" r="3.0" fill="#0000ff"/><circle cx="1698.8" cy="366.0" r="2.2" fill="#c4c4c4"/><circle cx="1698.8" cy="366.0" r="0.9" fill="#10a0a0"/><circle cx="1698.8" cy="372.4" r="3.0" fill="#0000ff"/><circle cx="1698.8" cy="372.4" r="2.2" fill="#c4c4c4"/><circle cx="1698.8" cy="372.4" r="0.9" fill="#10a0a0"/><circle cx="1694.0" cy="398.8" r="3.0" fill="#0000ff"/><circle cx="1694.0" cy="398.8" r="2.2" fill="#c4c4c4"/><circle cx="1694.0" cy="398.8" r="0.9" fill="#10a0a0"/><circle cx="1737.0" cy="414.4" r="3.0" fill="#0000ff"/><circle cx="1737.0" cy="414.4" r="2.2" fill="#c4c4c4"/><circle cx="1737.0" cy="414.4" r="0.9" fill="#10a0a0"/><circle cx="1687.5" cy="412.3" r="3.0" fill="#0000ff"/><circle cx="1687.5" cy="412.3" r="2.2" fill="#c4c4c4"/><circle cx="1687.5" cy="412.3" r="0.9" fill="#10a0a0"/><circle cx="1687.5" cy="416.0" r="3.0" fill="#0000ff"/><circle cx="1687.5" cy="416.0" r="2.2" fill="#c4c4c4"/><circle cx="1687.5" cy="416.0" r="0.9" fill="#10a0a0"/><circle cx="1763.5" cy="358.9" r="3.0" fill="#0000ff"/><circle cx="1763.5" cy="358.9" r="2.2" fill="#c4c4c4"/><circle cx="1763.5" cy="358.9" r="0.9" fill="#10a0a0"/><circle cx="1662.7" cy="384.2" r="3.0" fill="#0000ff"/><circle cx="1662.7" cy="384.2" r="2.2" fill="#c4c4c4"/><circle cx="1662.7" cy="384.2" r="0.9" fill="#10a0a0"/><circle cx="1723.0" cy="396.0" r="3.0" fill="#0000ff"/><circle cx="1723.0" cy="396.0" r="2.2" fill="#c4c4c4"/><circle cx="1723.0" cy="396.0" r="0.9" fill="#10a0a0"/><circle cx="1705.5" cy="451.8" r="3.4" fill="#c4c4c4"/><circle cx="1705.5" cy="451.8" r="1.4" fill="#10a0a0"/><circle cx="1705.5" cy="468.0" r="3.4" fill="#c4c4c4"/><circle cx="1705.5" cy="468.0" r="1.4" fill="#10a0a0"/><circle cx="1705.5" cy="530.6" r="3.4" fill="#c4c4c4"/><circle cx="1705.5" cy="530.6" r="1.4" fill="#10a0a0"/><circle cx="1705.5" cy="547.0" r="3.4" fill="#c4c4c4"/><circle cx="1705.5" cy="547.0" r="1.4" fill="#10a0a0"/><circle cx="1693.5" cy="460.4" r="3.4" fill="#c4c4c4"/><circle cx="1693.5" cy="460.4" r="1.4" fill="#10a0a0"/><circle cx="1693.5" cy="538.2" r="3.4" fill="#c4c4c4"/><circle cx="1693.5" cy="538.2" r="1.4" fill="#10a0a0"/><circle cx="1720.8" cy="431.7" r="4.4" fill="#c4c4c4"/><circle cx="1720.8" cy="431.7" r="1.8" fill="#10a0a0"/><circle cx="1720.8" cy="567.2" r="4.4" fill="#c4c4c4"/><circle cx="1720.8" cy="567.2" r="1.8" fill="#10a0a0"/><circle cx="1789.8" cy="434.0" r="5.0" fill="#ff0000"/><circle cx="1789.8" cy="434.0" r="3.2" fill="#c4c4c4"/><circle cx="1789.8" cy="434.0" r="1.3" fill="#10a0a0"/><circle cx="1789.8" cy="450.5" r="3.2" fill="#c4c4c4"/><circle cx="1789.8" cy="450.5" r="1.3" fill="#10a0a0"/><circle cx="1766.5" cy="462.6" r="5.0" fill="#ff0000"/><circle cx="1766.5" cy="462.6" r="3.2" fill="#c4c4c4"/><circle cx="1766.5" cy="462.6" r="1.3" fill="#10a0a0"/><circle cx="1766.5" cy="479.1" r="3.2" fill="#c4c4c4"/><circle cx="1766.5" cy="479.1" r="1.3" fill="#10a0a0"/><circle cx="1794.0" cy="484.0" r="5.0" fill="#ff0000"/><circle cx="1794.0" cy="484.0" r="3.2" fill="#c4c4c4"/><circle cx="1794.0" cy="484.0" r="1.3" fill="#10a0a0"/><circle cx="1794.0" cy="500.5" r="3.2" fill="#c4c4c4"/><circle cx="1794.0" cy="500.5" r="1.3" fill="#10a0a0"/><circle cx="1766.5" cy="505.7" r="5.0" fill="#ff0000"/><circle cx="1766.5" cy="505.7" r="3.2" fill="#c4c4c4"/><circle cx="1766.5" cy="505.7" r="1.3" fill="#10a0a0"/><circle cx="1766.5" cy="522.2" r="3.2" fill="#c4c4c4"/><circle cx="1766.5" cy="522.2" r="1.3" fill="#10a0a0"/><circle cx="1794.0" cy="526.4" r="5.0" fill="#ff0000"/><circle cx="1794.0" cy="526.4" r="3.2" fill="#c4c4c4"/><circle cx="1794.0" cy="526.4" r="1.3" fill="#10a0a0"/><circle cx="1794.0" cy="542.9" r="3.2" fill="#c4c4c4"/><circle cx="1794.0" cy="542.9" r="1.3" fill="#10a0a0"/><circle cx="1766.5" cy="548.0" r="5.0" fill="#ff0000"/><circle cx="1766.5" cy="548.0" r="3.2" fill="#c4c4c4"/><circle cx="1766.5" cy="548.0" r="1.3" fill="#10a0a0"/><circle cx="1766.5" cy="564.5" r="3.2" fill="#c4c4c4"/><circle cx="1766.5" cy="564.5" r="1.3" fill="#10a0a0"/><circle cx="1679.4" cy="475.7" r="4.8" fill="#0000ff"/><circle cx="1679.4" cy="475.7" r="3.4" fill="#c4c4c4"/><circle cx="1679.4" cy="475.7" r="1.4" fill="#10a0a0"/><circle cx="1679.4" cy="491.6" r="4.8" fill="#0000ff"/><circle cx="1679.4" cy="491.6" r="3.4" fill="#c4c4c4"/><circle cx="1679.4" cy="491.6" r="1.4" fill="#10a0a0"/><circle cx="1679.4" cy="507.7" r="4.8" fill="#0000ff"/><circle cx="1679.4" cy="507.7" r="3.4" fill="#c4c4c4"/><circle cx="1679.4" cy="507.7" r="1.4" fill="#10a0a0"/><circle cx="1679.4" cy="530.6" r="4.8" fill="#0000ff"/><circle cx="1679.4" cy="530.6" r="3.4" fill="#c4c4c4"/><circle cx="1679.4" cy="530.6" r="1.4" fill="#10a0a0"/><circle cx="1679.4" cy="547.0" r="4.8" fill="#0000ff"/><circle cx="1679.4" cy="547.0" r="3.4" fill="#c4c4c4"/><circle cx="1679.4" cy="547.0" r="1.4" fill="#10a0a0"/><circle cx="1679.4" cy="563.3" r="4.8" fill="#0000ff"/><circle cx="1679.4" cy="563.3" r="3.4" fill="#c4c4c4"/><circle cx="1679.4" cy="563.3" r="1.4" fill="#10a0a0"/><circle cx="1637.0" cy="452.0" r="5.0" fill="#ff0000"/><circle cx="1637.0" cy="452.0" r="3.6" fill="#c4c4c4"/><circle cx="1637.0" cy="452.0" r="1.5" fill="#10a0a0"/></g></svg><!-- left panel -->
<div class="a" style="left:0;top:0;width:271px;height:910px;background:#404040"></div>
<div class="a" style="left:0;top:0;width:271px;height:4px;background:#4b4b4b"></div>
<div class="a" style="left:271px;top:0;width:4px;height:910px;background:#343434"></div>
<div class="a" style="left:-2px;top:47px;width:263px;height:853px;border:1px solid #232323;background:#3b3b3b"></div>
<div class="a" style="left:-2px;top:53px;width:254px;height:26px;border-radius:4px;background:#2b2b2b"></div>
<div class="t" style="left:-6px;top:59px;font-size:13px;color:#e8e8e8">arch</div>
<div class="a" style="left:0;top:86px;width:249px;height:1px;background:#2c2c2c"></div>
<div class="a" style="left:-2px;top:124px;width:256px;height:22px;border:1px solid #5d89b4;background:#4b4b4b"></div>
<div class="a" style="left:15px;top:168px;width:239px;height:1px;background:#353535"></div>
<div class="a" style="left:15px;top:190px;width:239px;height:1px;background:#353535"></div>
<div class="a" style="left:15px;top:212px;width:239px;height:22px;background:#5e7f9f"></div>
<div class="a" style="left:15px;top:256px;width:239px;height:1px;background:#353535"></div>
<svg class="a" style="left:0;top:0" width="271" height="260"><defs><clipPath id="tc"><rect x="0" y="0" width="207.8" height="260"/></clipPath></defs><text x="-2.2" y="116.8" font-family="Liberation Sans" font-weight="bold" font-size="13.3" fill="#f0f0f0" textLength="137.2" lengthAdjust="spacingAndGlyphs">ject Group 1.DsnWrk</text><text x="-0.8" y="138.8" font-family="Liberation Sans" font-weight="bold" font-size="13.3" fill="#ffffff" textLength="95.7" lengthAdjust="spacingAndGlyphs">ree Documents</text><text x="3.3" y="160.8" font-family="Liberation Sans" font-size="13" fill="#e6e6e6" textLength="114.5" lengthAdjust="spacingAndGlyphs">Source Documents</text><g clip-path="url(#tc)"><text x="18.4" y="183.1" font-family="Liberation Sans" font-size="13" fill="#e6e6e6" textLength="192.5" lengthAdjust="spacingAndGlyphs">PFC_LLC_SR_20260321.PcbDoc</text></g><text x="18.4" y="204.9" font-family="Liberation Sans" font-size="13" fill="#e6e6e6" textLength="72.2" lengthAdjust="spacingAndGlyphs">PFC.SchDoc</text><text x="18.4" y="226.6" font-family="Liberation Sans" font-size="13" fill="#ffffff" textLength="127.4" lengthAdjust="spacingAndGlyphs">AUX_Power.SchDoc *</text><text x="18.4" y="248.9" font-family="Liberation Sans" font-size="13" fill="#e6e6e6" textLength="70.9" lengthAdjust="spacingAndGlyphs">LLC.SchDoc</text></svg>
<!-- editor tab -->
<div class="a" style="left:275px;top:885px;width:795px;height:25px;background:#333"></div>
<div class="a" style="left:276px;top:886px;width:56px;height:24px;background:#4a4a4a"></div>
<div class="t" style="left:284.3px;top:893.3px;font-size:13.1px;font-weight:bold;color:#fff">Editor</div>
<div class="a" style="left:1070px;top:6px;width:4px;height:904px;background:#333"></div>
<!-- right panel -->
<div class="a" style="left:1816px;top:0;width:38px;height:910px;background:#333"></div>
<div class="a" style="left:1819px;top:0;width:32px;height:910px;background:#3d3d3d"></div>
<!-- status bar -->
<div class="a" style="left:0;top:910px;width:1854px;height:3px;background:#333"></div>
<div class="a" style="left:0;top:913px;width:1854px;height:14px;background:#3d3d3d"></div>
<svg class="a" style="left:0;top:905px" width="260" height="22"><text x="-2.5" y="28.1" font-family="Liberation Sans" font-size="14" fill="#e6e6e6" textLength="121" lengthAdjust="spacingAndGlyphs">0mil Y:9510.000mil</text><text x="136.5" y="28.1" font-family="Liberation Sans" font-size="14" fill="#e6e6e6" textLength="61.7" lengthAdjust="spacingAndGlyphs">Grid:10mil</text></svg>
<div class="a" style="left:459px;top:10px;width:426.5px;height:31.5px;background:#404040;border-radius:4px;box-shadow:0 0 0 1px #383838"></div><div class="a" style="left:1215.2px;top:10px;width:458.5px;height:31.5px;background:#404040;border-radius:4px;box-shadow:0 0 0 1px #383838"></div><svg class="a" style="left:0;top:0" width="1854" height="927" viewBox="0 0 1854 927"><path d="M473.0 20.0 h13 l-4.2 5 v6.5 h-4.6 v-6.5 z" fill="#a8dce8"/><path d="M478.0 25.5 v6" stroke="#e8f8ff" stroke-width="1.2"/><path d="M473.5 20.7 h12" stroke="#e0f4fa" stroke-width="1"/><path d="M504.9 25.5 h13 M511.4 19.0 v13" stroke="#6b8fe0" stroke-width="1.3"/><path d="M504.9 25.5 l2 -2 v4z M517.9 25.5 l-2 -2 v4z M511.4 19.0 l-2 2 h4z M511.4 32.0 l-2 -2 h4z" fill="#6b8fe0"/><path d="M521.8 41 h5.5 v-5.5 z" fill="#d8d8d8"/><rect x="537.4" y="19.4" width="13" height="13" rx="1" fill="none" stroke="#7a9ef0" stroke-width="1.4" stroke-dasharray="2.2 1.6"/><path d="M553.5 41 h5.5 v-5.5 z" fill="#d8d8d8"/><rect x="570" y="20" width="2.2" height="11.7" fill="#7aa0e0"/><rect x="573" y="20" width="6.3" height="3.2" fill="#f08080"/><rect x="573" y="24.5" width="9" height="3.2" fill="#a8dcf0"/><path d="M574 30.3 h6 M574 30.3 l2 -1.5 v3z" stroke="#7aa0e0" stroke-width="1" fill="#7aa0e0"/><path d="M585.5 41 h5.5 v-5.5 z" fill="#d8d8d8"/><rect x="592" y="18" width="1" height="16" fill="#1e1e1e"/><rect x="604.5" y="19" width="9" height="14.5" fill="#f6d27a" stroke="#b8962e" stroke-width="1"/><path d="M601.5 21.5 h3 M613.5 21.5 h3" stroke="#c8a040" stroke-width="1"/><path d="M601.5 24.5 h3 M613.5 24.5 h3" stroke="#c8a040" stroke-width="1"/><path d="M601.5 27.5 h3 M613.5 27.5 h3" stroke="#c8a040" stroke-width="1"/><path d="M601.5 30.5 h3 M613.5 30.5 h3" stroke="#c8a040" stroke-width="1"/><path d="M633 21.5 h5 l4 3 h7 M633 28 h5 l4 3 h7" fill="none" stroke="#5a9ad8" stroke-width="1.8"/><path d="M651 41 h5.5 v-5.5 z" fill="#d8d8d8"/><path d="M672.3 19 v7.5 M665 26.5 h15 M668 29.5 h9 M670.5 32 h4" stroke="#e8605a" stroke-width="1.3"/><path d="M683 41 h5.5 v-5.5 z" fill="#d8d8d8"/><rect x="697" y="18" width="4" height="15.5" fill="#bcd8f8" stroke="#5a8ad8" stroke-width="0.8"/><path d="M701 26.5 h3 M705 28.5 l1.5 -4 M708 28.5 l1.5 -4 M711 28.5 l1.5 -4" stroke="#4a7ad0" stroke-width="1.4"/><path d="M715 41 h5.5 v-5.5 z" fill="#d8d8d8"/><rect x="731" y="21" width="12.8" height="11" fill="#50b070" stroke="#4a7ae0" stroke-width="1.4"/><path d="M729 23.5 h2 M729 29.5 h2 M743.8 23.5 h2 M743.8 29.5 h2" stroke="#4a7ae0" stroke-width="1"/><path d="M732 22.5 l2 1 l-2 1z M732 28.5 l2 1 l-2 1z M742.5 22.5 l-2 1 l2 1z M742.5 28.5 l-2 1 l2 1z" fill="#f0e040"/><path d="M747 41 h5.5 v-5.5 z" fill="#d8d8d8"/><path d="M761 21 h11 l3.5 5 l-3.5 5 h-11 z" fill="#f0d070" stroke="#b89030" stroke-width="0.8"/><path d="M775.5 26 h3" stroke="#c8a040" stroke-width="1"/><text x="762" y="29.6" font-family="Liberation Sans" font-weight="bold" font-size="8" fill="#806018">D1</text><path d="M779 41 h5.5 v-5.5 z" fill="#d8d8d8"/><circle cx="802.3" cy="25.5" r="6.2" fill="none" stroke="#e05050" stroke-width="1.1"/><path d="M793 25.5 h3 M802.3 24.5 v5" stroke="#e05050" stroke-width="1.2"/><circle cx="802.3" cy="22" r="0.8" fill="#e05050"/><path d="M811 41 h5.5 v-5.5 z" fill="#d8d8d8"/><text x="833.2" y="33" font-family="Liberation Serif" font-weight="bold" font-size="18" fill="#5a9ae8" text-anchor="middle">A</text><path d="M843 41 h5.5 v-5.5 z" fill="#d8d8d8"/><path d="M858 30 A7 7 0 1 1 871 30" fill="none" stroke="#5a9ae8" stroke-width="1.2"/><path d="M875 41 h5.5 v-5.5 z" fill="#d8d8d8"/><path d="M1229.0 20.0 h13 l-4.2 5 v6.5 h-4.6 v-6.5 z" fill="#a8dce8"/><path d="M1234.0 25.5 v6" stroke="#e8f8ff" stroke-width="1.2"/><path d="M1229.5 20.7 h12" stroke="#e0f4fa" stroke-width="1"/><path d="M1266 21.5 h3 a5 5 0 0 1 0 9 h-3" fill="none" stroke="#e07080" stroke-width="3"/><path d="M1266 21.5 h3 a5 5 0 0 1 5 4.5" fill="none" stroke="#8ad0f0" stroke-width="3"/><circle cx="1261.5" cy="21.5" r="1" fill="#a0d0e8"/><circle cx="1261.5" cy="26" r="1" fill="#a0d0e8"/><circle cx="1261.5" cy="30.5" r="1" fill="#a0d0e8"/><path d="M1293.1 25.5 h13 M1299.6 19.0 v13" stroke="#6b8fe0" stroke-width="1.3"/><path d="M1293.1 25.5 l2 -2 v4z M1306.1 25.5 l-2 -2 v4z M1299.6 19.0 l-2 2 h4z M1299.6 32.0 l-2 -2 h4z" fill="#6b8fe0"/><path d="M1310 41 h5.5 v-5.5 z" fill="#d8d8d8"/><rect x="1325.2" y="19.4" width="13" height="13" rx="1" fill="none" stroke="#7a9ef0" stroke-width="1.4" stroke-dasharray="2.2 1.6"/><path d="M1342 41 h5.5 v-5.5 z" fill="#d8d8d8"/><rect x="1358" y="23" width="3" height="6" fill="#f07080"/><rect x="1362" y="19.5" width="3.5" height="9.5" fill="#a8dcf0"/><rect x="1366.5" y="23" width="3" height="6" fill="#f07080"/><rect x="1358" y="30.5" width="11.5" height="1.6" fill="#6aa0e0"/><path d="M1374 41 h5.5 v-5.5 z" fill="#d8d8d8"/><rect x="1380" y="18" width="1" height="16" fill="#1e1e1e"/><rect x="1390.5" y="20" width="11.5" height="11.5" fill="#d0dce6" stroke="#9ab" stroke-width="0.6"/><path d="M1391.5 18 v2 M1391.5 31.5 v2 M1388.5 21.0 h2 M1402 21.0 h2" stroke="#9cc8dc" stroke-width="0.9"/><path d="M1393.8 18 v2 M1393.8 31.5 v2 M1388.5 23.3 h2 M1402 23.3 h2" stroke="#9cc8dc" stroke-width="0.9"/><path d="M1396.1 18 v2 M1396.1 31.5 v2 M1388.5 25.6 h2 M1402 25.6 h2" stroke="#9cc8dc" stroke-width="0.9"/><path d="M1398.4 18 v2 M1398.4 31.5 v2 M1388.5 27.9 h2 M1402 27.9 h2" stroke="#9cc8dc" stroke-width="0.9"/><path d="M1400.7 18 v2 M1400.7 31.5 v2 M1388.5 30.2 h2 M1402 30.2 h2" stroke="#9cc8dc" stroke-width="0.9"/><path d="M1407 41 h5.5 v-5.5 z" fill="#d8d8d8"/><path d="M1425 32 l8 -8" stroke="#6a90d0" stroke-width="1.4"/><circle cx="1424" cy="32.5" r="1.8" fill="none" stroke="#e0a020" stroke-width="1.2"/><circle cx="1434.5" cy="22" r="1.8" fill="none" stroke="#e0a020" stroke-width="1.2"/><path d="M1422.5 30 v-7 h5 M1425.5 21 l2 2 l-2 2" fill="none" stroke="#e0a020" stroke-width="1.2"/><path d="M1439 41 h5.5 v-5.5 z" fill="#d8d8d8"/><path d="M1455 29 v-4 a2.5 2.5 0 0 1 5 0 v3 a2.5 2.5 0 0 0 5 0 v-3 a2.5 2.5 0 0 1 5 0 v4" fill="none" stroke="#6a90d0" stroke-width="1.3"/><circle cx="1455" cy="29" r="1.5" fill="none" stroke="#e0a020" stroke-width="1.1"/><circle cx="1467" cy="29" r="1.5" fill="none" stroke="#e0a020" stroke-width="1.1"/><path d="M1471 41 h5.5 v-5.5 z" fill="#d8d8d8"/><circle cx="1491.5" cy="24" r="5.5" fill="#f0c020"/><circle cx="1491.5" cy="24" r="1.6" fill="#333"/><rect x="1490" y="29" width="3" height="5" fill="#f09040"/><rect x="1496" y="22" width="4.5" height="2.5" fill="#40c040"/><path d="M1503 41 h5.5 v-5.5 z" fill="#d8d8d8"/><path d="M1518 22 h4 v-3.5 h9 v12.5 h-13 z" fill="#c8e4f0" stroke="#6aa0d0" stroke-width="0.9"/><path d="M1535 41 h5.5 v-5.5 z" fill="#d8d8d8"/><rect x="1549" y="18.5" width="15.5" height="15.5" fill="none" stroke="#f090d0" stroke-width="1"/><path d="M1553 30 l7 -7" stroke="#6a90d0" stroke-width="1.2"/><circle cx="1553" cy="30" r="1.5" fill="none" stroke="#e0a020" stroke-width="1"/><circle cx="1560.5" cy="22.5" r="1.5" fill="none" stroke="#e0a020" stroke-width="1"/><path d="M1567 41 h5.5 v-5.5 z" fill="#d8d8d8"/><path d="M1583 20 v12 h13 v-12" fill="none" stroke="#6a9ad8" stroke-width="1.3"/><circle cx="1583" cy="19.5" r="1.5" fill="none" stroke="#e0a020" stroke-width="1"/><circle cx="1596" cy="19.5" r="1.5" fill="none" stroke="#e0a020" stroke-width="1"/><text x="1589.5" y="30" font-family="Liberation Serif" font-size="8" fill="#d0d0d0" text-anchor="middle">10</text><path d="M1599 41 h5.5 v-5.5 z" fill="#d8d8d8"/><text x="1621" y="33" font-family="Liberation Serif" font-weight="bold" font-size="18" fill="#5a9ae8" text-anchor="middle">A</text><path d="M1631 41 h5.5 v-5.5 z" fill="#d8d8d8"/><path d="M1647 32 l12 -12" stroke="#5a9ae8" stroke-width="1.6"/><path d="M1663 41 h5.5 v-5.5 z" fill="#d8d8d8"/><path d="M-4 24 h5 l1.5 1.5 h4 v10 h-10.5z" fill="#7c7c7c"/><path d="M19 22 h5 l1.5 1.5 h6 v9 h-12.5z" fill="#8a8a8a"/><circle cx="30.5" cy="30" r="3.5" fill="#9a9a9a" stroke="#3d3d3d" stroke-width="0.8"/><path d="M28 33 l-3 3.5" stroke="#9a9a9a" stroke-width="1.6"/><path d="M51 22 h5 l1.5 1.5 h6 v9 h-12.5z" fill="#8a8a8a"/><circle cx="61" cy="32" r="4" fill="#8a8a8a" stroke="#3d3d3d" stroke-width="0.8"/><circle cx="61" cy="32" r="1.5" fill="#555"/><rect x="77" y="22" width="1" height="16" fill="#1e1e1e"/><circle cx="95" cy="30" r="6" fill="#a8b8c0"/><circle cx="95" cy="30" r="7" fill="none" stroke="#a8b8c0" stroke-width="2" stroke-dasharray="1.6 1.2"/><circle cx="95" cy="30" r="1.8" fill="#3d3d3d"/><rect x="0" y="173" width="15" height="12" fill="#1e7a4a"/><rect x="1" y="175" width="5" height="1.2" fill="#e8f0e8"/><rect x="7" y="175" width="1.5" height="1.2" fill="#e8f0e8"/><rect x="1" y="178" width="5" height="1.2" fill="#e8f0e8"/><rect x="7" y="178" width="1.5" height="1.2" fill="#e8f0e8"/><rect x="1" y="181" width="5" height="1.2" fill="#e8f0e8"/><rect x="7" y="181" width="1.5" height="1.2" fill="#e8f0e8"/><rect x="9.5" y="174.5" width="4" height="4" fill="#e8f0e8"/><path d="M7 183 h7" stroke="#e8f0e8" stroke-width="1.4" stroke-dasharray="1 0.8"/><path d="M-2 195 h16 v11 h-16z" fill="#e8c870"/><path d="M-2 195 h16 v3 h-16z" fill="#f4dc98"/><path d="M7 201 h7 M8 203 h5" stroke="#8a7030" stroke-width="0.8"/><path d="M-2 217 h16 v11 h-16z" fill="#e8c870"/><path d="M-2 217 h16 v3 h-16z" fill="#f4dc98"/><path d="M7 223 h7 M8 225 h5" stroke="#8a7030" stroke-width="0.8"/><path d="M-2 239 h16 v11 h-16z" fill="#e8c870"/><path d="M-2 239 h16 v3 h-16z" fill="#f4dc98"/><path d="M7 245 h7 M8 247 h5" stroke="#8a7030" stroke-width="0.8"/><path d="M215.5 175 h4.5 l3 3 v7.5 h-7.5z" fill="none" stroke="#e8e8e8" stroke-width="1.2"/><path d="M220 175 v3 h3" fill="#e8e8e8" stroke="#e8e8e8" stroke-width="0.9"/><path d="M215.5 197 h4.5 l3 3 v7.5 h-7.5z" fill="none" stroke="#e8e8e8" stroke-width="1.2"/><path d="M220 197 v3 h3" fill="#e8e8e8" stroke="#e8e8e8" stroke-width="0.9"/><path d="M215.5 219 h4.5 l3 3 v7.5 h-7.5z" fill="none" stroke="#e06060" stroke-width="1.2"/><path d="M220 219 v3 h3" fill="#e06060" stroke="#e06060" stroke-width="0.9"/><path d="M215.5 241 h4.5 l3 3 v7.5 h-7.5z" fill="none" stroke="#e8e8e8" stroke-width="1.2"/><path d="M220 241 v3 h3" fill="#e8e8e8" stroke="#e8e8e8" stroke-width="0.9"/></svg><div class="a" style="left:1074px;top:883px;width:742px;height:27px;background:#333"></div><div class="a" style="left:1079px;top:887.7px;width:30.5px;height:15.3px;background:#0000ff"></div><div class="a" style="left:1109.5px;top:887.7px;width:24.5px;height:15.3px;background:#4b4b4b;border-radius:0 3px 3px 0"></div><div class="t" style="left:1114.5px;top:889.5px;font-size:13.5px;color:#e8e8e8">LS</div><div class="a" style="left:1140px;top:885px;width:50px;height:24px;background:#555;border-radius:3px"></div><div class="a" style="left:1165px;top:887px;width:1px;height:20px;background:#2e2e2e"></div><svg class="a" style="left:1140px;top:885px" width="50" height="24"><path d="M14 12 l5 -5 v10z" fill="#8a8a8a"/><path d="M35 7 l5 5 l-5 5z" fill="#f0f0f0"/></svg><div class="a" style="left:1194.4px;top:884px;width:116.79999999999995px;height:25px;background:#3a3a3a;border-radius:4px 4px 0 0"></div><div class="a" style="left:1202.9px;top:890px;width:13px;height:13px;background:#ff0000;border:1px solid #9a9a9a"></div><div class="t" style="left:1227.9px;top:891px;font-size:13.3px;font-weight:normal;color:#ececec">[1] Top Layer</div><div class="a" style="left:1314.8px;top:884px;width:148.4000000000001px;height:25px;background:#474747;border-radius:4px 4px 0 0"></div><div class="a" style="left:1323.3px;top:890px;width:13px;height:13px;background:#0000ff;border:1px solid #9a9a9a"></div><div class="t" style="left:1345.8px;top:890.5px;font-size:13.6px;font-weight:bold;color:#ececec">[2] Bottom Layer</div><div class="a" style="left:1464.7px;top:884px;width:117.09999999999991px;height:25px;background:#3a3a3a;border-radius:4px 4px 0 0"></div><div class="a" style="left:1473.2px;top:890px;width:13px;height:13px;background:#ff00ff;border:1px solid #9a9a9a"></div><div class="t" style="left:1498.2px;top:891px;font-size:13.3px;font-weight:normal;color:#ececec">Mechanical 1</div><div class="a" style="left:1583.3px;top:884px;width:117.60000000000014px;height:25px;background:#3a3a3a;border-radius:4px 4px 0 0"></div><div class="a" style="left:1591.8px;top:890px;width:13px;height:13px;background:#ff00ff;border:1px solid #9a9a9a"></div><div class="t" style="left:1616.8px;top:891px;font-size:13.3px;font-weight:normal;color:#ececec">Mechanical 5</div><div class="a" style="left:1702.4px;top:884px;width:126.09999999999991px;height:25px;background:#3a3a3a;border-radius:4px 4px 0 0"></div><div class="a" style="left:1710.9px;top:890px;width:13px;height:13px;background:#ff00ff;border:1px solid #9a9a9a"></div><div class="t" style="left:1735.9px;top:891px;font-size:13.3px;font-weight:normal;color:#ececec">Mechanical 1</div><div class="a" style="left:1816px;top:883px;width:38px;height:27px;background:#333"></div><div class="a" style="left:1819px;top:883px;width:32px;height:26px;background:#3d3d3d"></div><div class="a" style="left:1822.8px;top:-6px;width:24px;height:70px;background:#4a4a4a;border:1px solid #2e2e2e;border-radius:3px"></div><div class="a" style="left:1822.8px;top:67.8px;width:24px;height:70.2px;background:#4a4a4a;border:1px solid #2e2e2e;border-radius:3px"></div><div class="t" style="top:-18.5px;font-size:12.9px;color:#e8e8e8;transform:rotate(90deg);transform-origin:0 0;left:1841.5px">Components</div><div class="t" style="left:1841.5px;top:72.5px;font-size:12.9px;color:#e8e8e8;transform:rotate(90deg);transform-origin:0 0">Properties</div><div class="a" style="left:1800px;top:918px;width:49px;height:12px;background:#4e4e4e;border:1px solid #2a2a2a;border-radius:4px"></div><div class="t" style="left:1808px;top:922px;font-size:13px;color:#e8e8e8">Panels</div></body></html>
